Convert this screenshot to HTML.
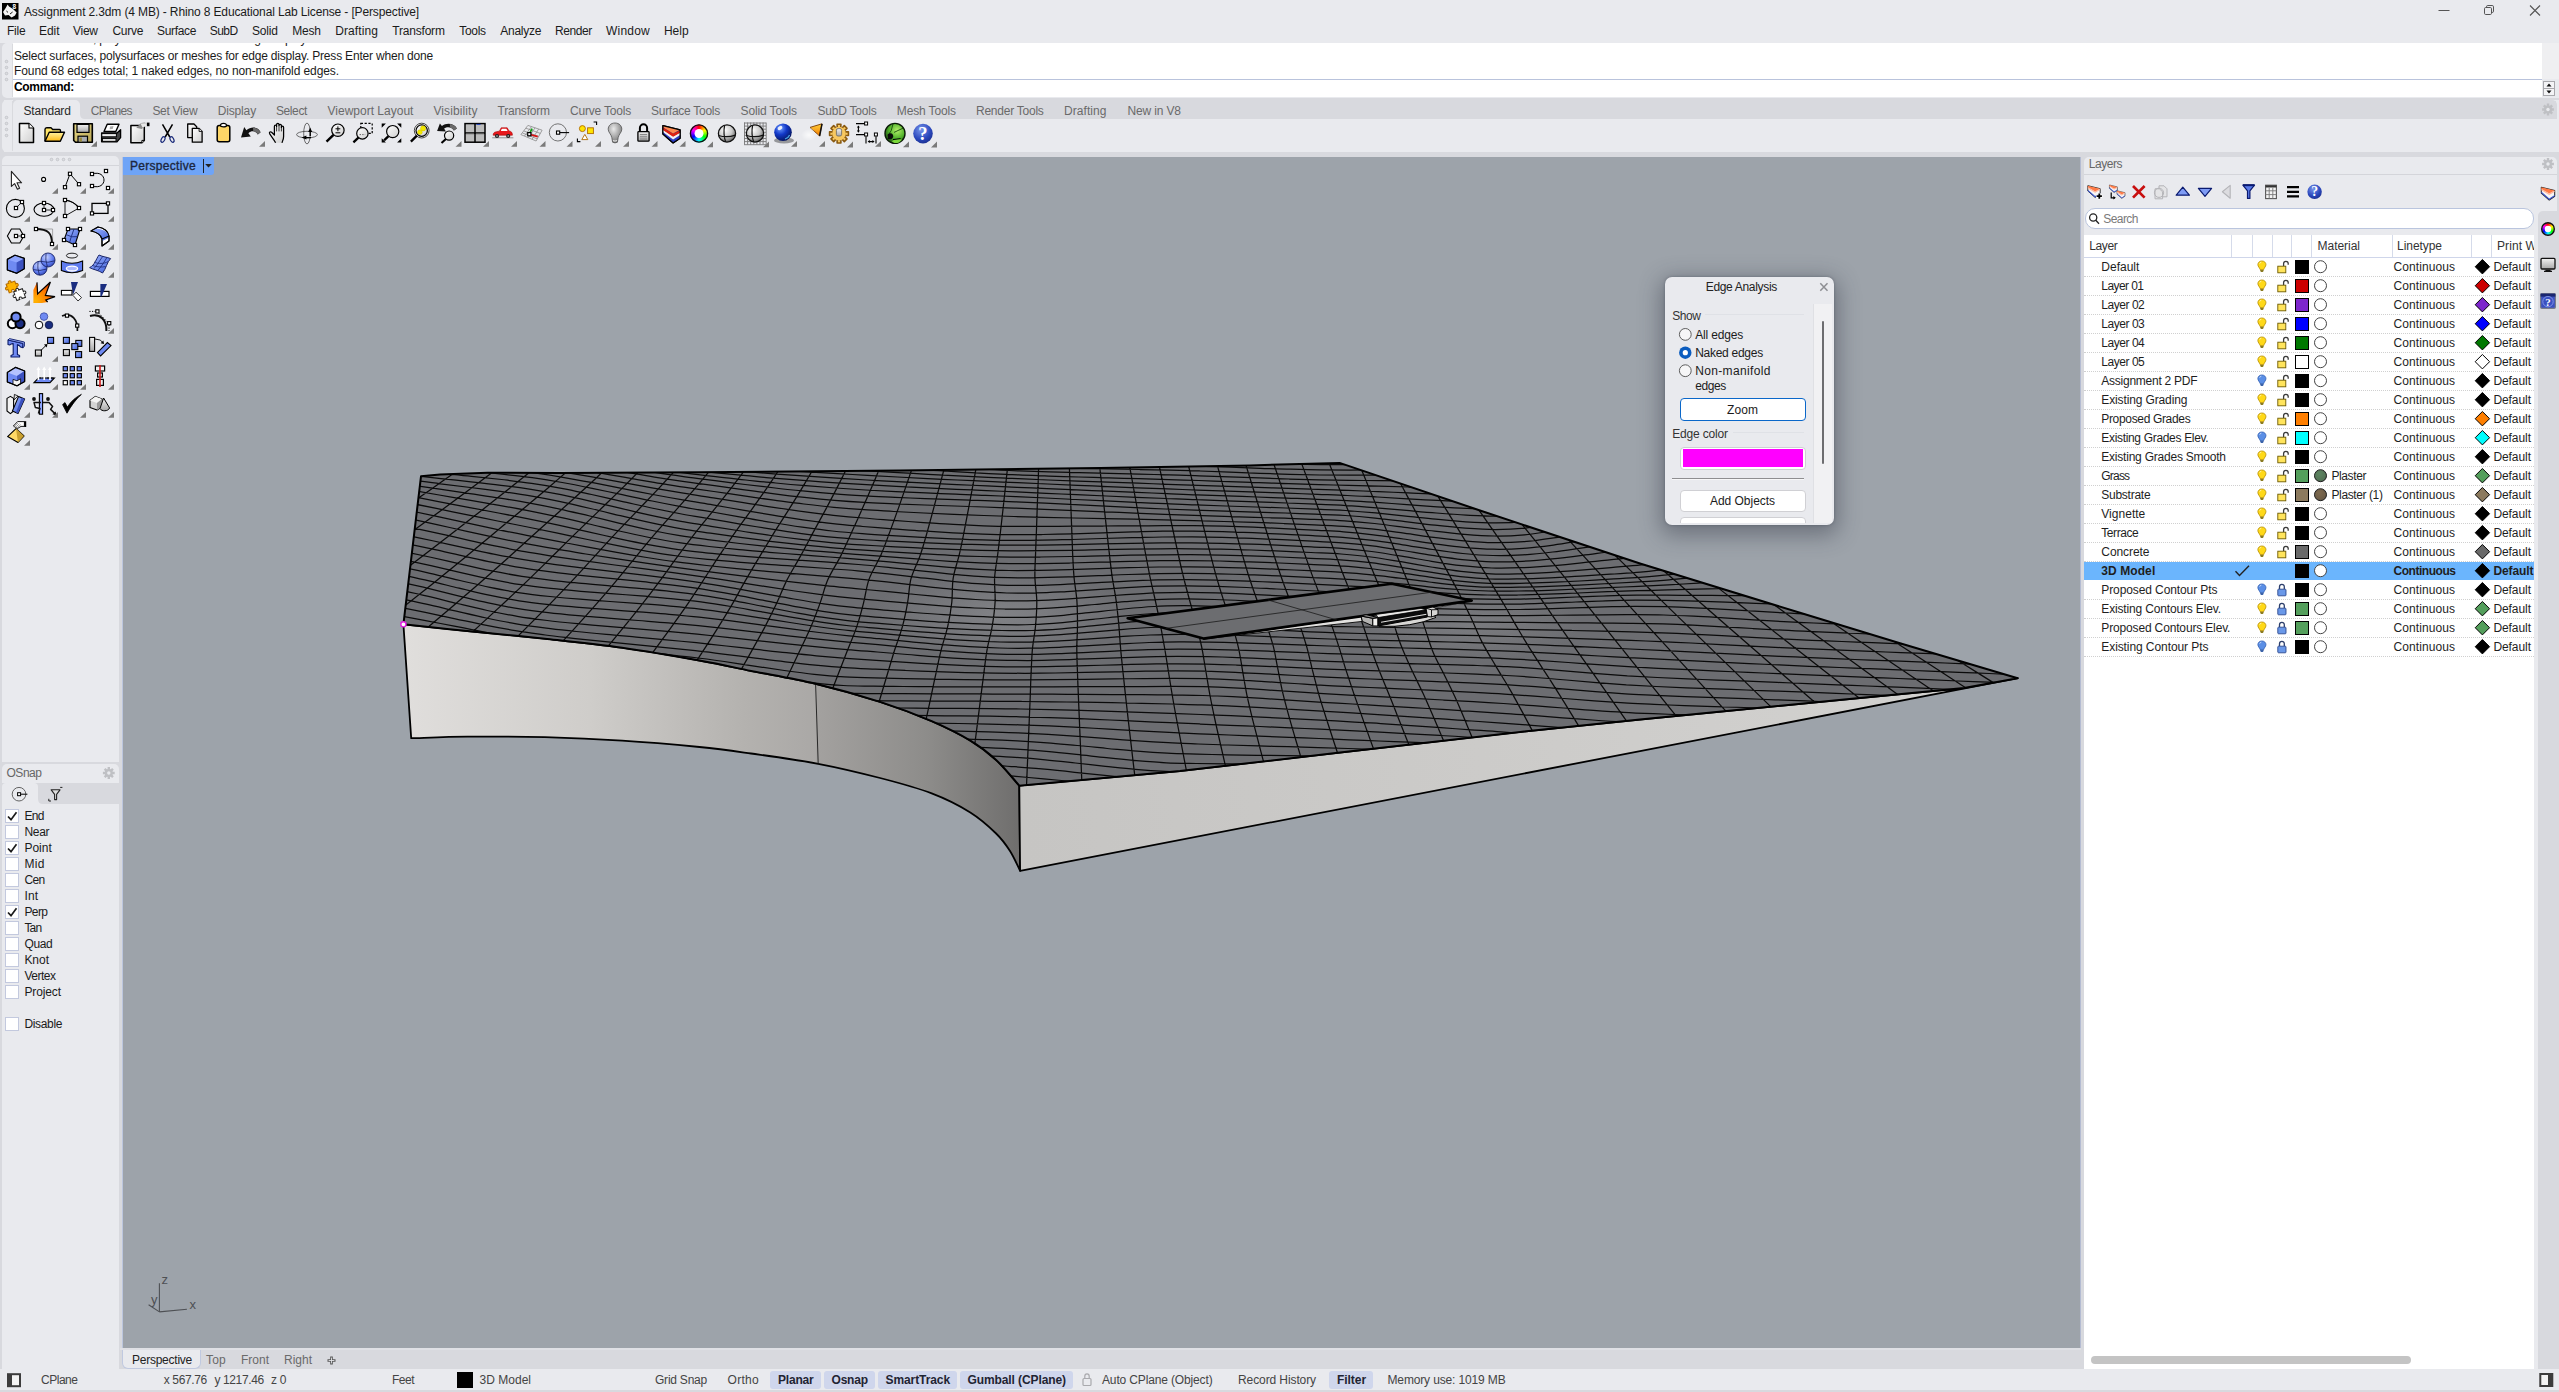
<!DOCTYPE html>
<html><head><meta charset="utf-8"><title>Rhino 8</title>
<style>
html,body{margin:0;padding:0;}
body{width:2559px;height:1392px;position:relative;overflow:hidden;background:#e9eaee;font-family:"Liberation Sans",sans-serif;}
#r{position:absolute;left:0;top:0;width:2559px;height:1392px;overflow:hidden;}
#r div{position:absolute;}
.t{position:absolute;white-space:nowrap;line-height:16px;font-family:"Liberation Sans",sans-serif;}
svg.ov{position:absolute;left:0;top:0;}
</style></head><body><div id="r">
<div style="left:0px;top:0px;width:2559px;height:1392px;background:#e9eaee;"></div>
<span class="t" style="left:24px;top:3.5px;font-size:12px;color:#1b1b1b;letter-spacing:-0.135px;">Assignment 2.3dm (4 MB) - Rhino 8 Educational Lab License - [Perspective]</span>
<span class="t" style="left:7px;top:22.5px;font-size:12px;color:#1b1b1b;letter-spacing:-0.234px;">File</span>
<span class="t" style="left:39px;top:22.5px;font-size:12px;color:#1b1b1b;letter-spacing:-0.070px;">Edit</span>
<span class="t" style="left:73px;top:22.5px;font-size:12px;color:#1b1b1b;letter-spacing:-0.273px;">View</span>
<span class="t" style="left:112.5px;top:22.5px;font-size:12px;color:#1b1b1b;letter-spacing:-0.302px;">Curve</span>
<span class="t" style="left:157px;top:22.5px;font-size:12px;color:#1b1b1b;letter-spacing:-0.337px;">Surface</span>
<span class="t" style="left:209.8px;top:22.5px;font-size:12px;color:#1b1b1b;letter-spacing:-0.554px;">SubD</span>
<span class="t" style="left:252px;top:22.5px;font-size:12px;color:#1b1b1b;letter-spacing:-0.177px;">Solid</span>
<span class="t" style="left:292.3px;top:22.5px;font-size:12px;color:#1b1b1b;letter-spacing:-0.211px;">Mesh</span>
<span class="t" style="left:335.3px;top:22.5px;font-size:12px;color:#1b1b1b;letter-spacing:0.073px;">Drafting</span>
<span class="t" style="left:392.3px;top:22.5px;font-size:12px;color:#1b1b1b;letter-spacing:-0.203px;">Transform</span>
<span class="t" style="left:459.2px;top:22.5px;font-size:12px;color:#1b1b1b;letter-spacing:-0.302px;">Tools</span>
<span class="t" style="left:500.2px;top:22.5px;font-size:12px;color:#1b1b1b;letter-spacing:-0.242px;">Analyze</span>
<span class="t" style="left:554.9px;top:22.5px;font-size:12px;color:#1b1b1b;letter-spacing:-0.376px;">Render</span>
<span class="t" style="left:606.1px;top:22.5px;font-size:12px;color:#1b1b1b;letter-spacing:0.187px;">Window</span>
<span class="t" style="left:663.9px;top:22.5px;font-size:12px;color:#1b1b1b;letter-spacing:0.005px;">Help</span>
<div style="left:0px;top:43px;width:2559px;height:57px;background:#d8d9de;"></div>
<div style="left:2px;top:43px;width:2557px;height:55px;background:#e9eaee;border-radius:5px 0 0 5px;"></div>
<div style="left:13px;top:43px;width:2529px;height:36px;background:#fff;"></div>
<div style="left:13px;top:79px;width:2529px;height:1px;background:#b9c3dc;"></div>
<div style="left:13px;top:80px;width:2529px;height:17px;background:#fff;"></div>
<div style="left:2542px;top:43px;width:17px;height:36px;background:#efeff1;"></div>
<div style="left:13px;top:43px;width:2529px;height:36px;overflow:hidden;background:none"><span class="t" style="left:1px;top:-11.6px;font-size:12px;color:#1b1b1b;letter-spacing:-0.2px">Select surfaces, polysurfaces or meshes for edge display</span></div>
<span class="t" style="left:14px;top:47.5px;font-size:12px;color:#1b1b1b;letter-spacing:-0.190px;">Select surfaces, polysurfaces or meshes for edge display. Press Enter when done</span>
<span class="t" style="left:14px;top:62.5px;font-size:12px;color:#1b1b1b;letter-spacing:-0.089px;">Found 68 edges total; 1 naked edges, no non-manifold edges.</span>
<span class="t" style="left:14px;top:79.0px;font-size:12px;color:#000;font-weight:bold;letter-spacing:-0.333px;">Command:</span>
<div style="left:0px;top:98px;width:4px;height:56px;background:#d8d9de;"></div>
<div style="left:2px;top:100px;width:2555px;height:52px;background:#e9eaee;border-radius:5px;"></div>
<div style="left:13px;top:100px;width:2544px;height:19px;background:#d8d9de;border-radius:0 5px 0 0;"></div>
<div style="left:13px;top:100px;width:67px;height:20px;background:#e9eaee;border-radius:5px 5px 0 0;"></div>
<span class="t" style="left:23.4px;top:103.1px;font-size:12px;color:#2a2a2a;letter-spacing:-0.175px;">Standard</span>
<span class="t" style="left:90.7px;top:103.1px;font-size:12px;color:#6a6a6a;letter-spacing:-0.579px;">CPlanes</span>
<span class="t" style="left:152.4px;top:103.1px;font-size:12px;color:#6a6a6a;letter-spacing:-0.280px;">Set View</span>
<span class="t" style="left:217.7px;top:103.1px;font-size:12px;color:#6a6a6a;letter-spacing:-0.149px;">Display</span>
<span class="t" style="left:275.9px;top:103.1px;font-size:12px;color:#6a6a6a;letter-spacing:-0.375px;">Select</span>
<span class="t" style="left:327.5px;top:103.1px;font-size:12px;color:#6a6a6a;letter-spacing:0.004px;">Viewport Layout</span>
<span class="t" style="left:433.4px;top:103.1px;font-size:12px;color:#6a6a6a;letter-spacing:0.098px;">Visibility</span>
<span class="t" style="left:497.5px;top:103.1px;font-size:12px;color:#6a6a6a;letter-spacing:-0.214px;">Transform</span>
<span class="t" style="left:570px;top:103.1px;font-size:12px;color:#6a6a6a;letter-spacing:-0.194px;">Curve Tools</span>
<span class="t" style="left:651px;top:103.1px;font-size:12px;color:#6a6a6a;letter-spacing:-0.268px;">Surface Tools</span>
<span class="t" style="left:740.5px;top:103.1px;font-size:12px;color:#6a6a6a;letter-spacing:-0.119px;">Solid Tools</span>
<span class="t" style="left:817.5px;top:103.1px;font-size:12px;color:#6a6a6a;letter-spacing:-0.215px;">SubD Tools</span>
<span class="t" style="left:896.8px;top:103.1px;font-size:12px;color:#6a6a6a;letter-spacing:-0.147px;">Mesh Tools</span>
<span class="t" style="left:976px;top:103.1px;font-size:12px;color:#6a6a6a;letter-spacing:-0.240px;">Render Tools</span>
<span class="t" style="left:1064px;top:103.1px;font-size:12px;color:#6a6a6a;letter-spacing:0.060px;">Drafting</span>
<span class="t" style="left:1127.4px;top:103.1px;font-size:12px;color:#6a6a6a;letter-spacing:-0.132px;">New in V8</span>
<div style="left:0px;top:152px;width:2559px;height:5px;background:#d8d9de;"></div>
<div style="left:0px;top:98px;width:2559px;height:2px;background:#d8d9de;"></div>
<div style="left:0px;top:152px;width:123px;height:1217px;background:#d8d9de;"></div>
<div style="left:2px;top:155.5px;width:117px;height:606.5px;background:#e9eaee;border-radius:5px 5px 0 0;"></div>
<div style="left:2px;top:165px;width:117px;height:1px;background:#d4d5da;"></div>
<div style="left:2px;top:764px;width:117px;height:605px;background:#e9eaee;border-radius:5px 5px 0 0;"></div>
<span class="t" style="left:6.5px;top:764.5px;font-size:12px;color:#666;letter-spacing:-0.472px;">OSnap</span>
<div style="left:2px;top:783px;width:117px;height:21px;background:#d8d9de;"></div>
<div style="left:2px;top:783px;width:36px;height:21.5px;background:#e9eaee;border-radius:4px 4px 0 0;"></div>
<span class="t" style="left:24.4px;top:807.5px;font-size:12px;color:#1b1b1b;letter-spacing:-0.651px;">End</span>
<span class="t" style="left:24.4px;top:823.5px;font-size:12px;color:#1b1b1b;letter-spacing:-0.302px;">Near</span>
<span class="t" style="left:24.4px;top:839.5px;font-size:12px;color:#1b1b1b;letter-spacing:0.010px;">Point</span>
<span class="t" style="left:24.4px;top:855.5px;font-size:12px;color:#1b1b1b;letter-spacing:0.321px;">Mid</span>
<span class="t" style="left:24.4px;top:871.5px;font-size:12px;color:#1b1b1b;letter-spacing:-0.571px;">Cen</span>
<span class="t" style="left:24.4px;top:887.5px;font-size:12px;color:#1b1b1b;letter-spacing:0.153px;">Int</span>
<span class="t" style="left:24.4px;top:903.5px;font-size:12px;color:#1b1b1b;letter-spacing:-0.587px;">Perp</span>
<span class="t" style="left:24.4px;top:919.5px;font-size:12px;color:#1b1b1b;letter-spacing:-0.782px;">Tan</span>
<span class="t" style="left:24.4px;top:935.5px;font-size:12px;color:#1b1b1b;letter-spacing:-0.339px;">Quad</span>
<span class="t" style="left:24.4px;top:951.5px;font-size:12px;color:#1b1b1b;letter-spacing:-0.021px;">Knot</span>
<span class="t" style="left:24.4px;top:967.5px;font-size:12px;color:#1b1b1b;letter-spacing:-0.503px;">Vertex</span>
<span class="t" style="left:24.4px;top:983.5px;font-size:12px;color:#1b1b1b;letter-spacing:-0.107px;">Project</span>
<span class="t" style="left:24.4px;top:1015.5px;font-size:12px;color:#1b1b1b;letter-spacing:-0.331px;">Disable</span>
<div style="left:123px;top:157px;width:1958px;height:1191px;background:#9da3aa;"></div>
<div style="left:122px;top:157px;width:1px;height:1191px;background:#bcc6de;"></div>
<div style="left:2080px;top:157px;width:1px;height:1191px;background:#b4bcd2;"></div>
<div style="left:123px;top:157px;width:91px;height:18px;background:#6ea4f7;border-radius:0 0 3px 0;"></div>
<span class="t" style="left:130px;top:157.5px;font-size:12px;color:#1c2740;letter-spacing:0.300px;-webkit-text-stroke:0.35px #1c2740;">Perspective</span>
<div style="left:120px;top:1348px;width:1964px;height:21px;background:#d8d9de;"></div>
<div style="left:120px;top:1348px;width:1964px;height:2px;background:#dfe0e5;"></div>
<div style="left:122px;top:1349.5px;width:78.5px;height:19px;background:#e9eaee;border-radius:0 0 6px 6px;border:1px solid #c0c9e0;border-top:none;box-sizing:border-box;"></div>
<span class="t" style="left:132px;top:1352.3px;font-size:12px;color:#222;letter-spacing:-0.245px;">Perspective</span>
<span class="t" style="left:206px;top:1352.3px;font-size:12px;color:#6a6a6a;letter-spacing:0.218px;">Top</span>
<span class="t" style="left:241px;top:1352.3px;font-size:12px;color:#6a6a6a;letter-spacing:-0.002px;">Front</span>
<span class="t" style="left:284px;top:1352.3px;font-size:12px;color:#6a6a6a;letter-spacing:-0.002px;">Right</span>
<span class="t" style="left:161.5px;top:1271.5px;font-size:13px;color:#4e5054;">z</span>
<span class="t" style="left:151px;top:1292.0px;font-size:13px;color:#4e5054;">y</span>
<span class="t" style="left:189.5px;top:1296.5px;font-size:13px;color:#4e5054;">x</span>
<div style="left:0px;top:1369px;width:2559px;height:21px;background:#e9eaee;"></div>
<div style="left:0px;top:1390px;width:2559px;height:2px;background:#d8d9de;"></div>
<span class="t" style="left:41px;top:1371.5px;font-size:12px;color:#444;letter-spacing:-0.476px;">CPlane</span>
<span class="t" style="left:163.7px;top:1371.5px;font-size:12px;color:#444;letter-spacing:-0.354px;">x 567.76</span>
<span class="t" style="left:214.4px;top:1371.5px;font-size:12px;color:#444;letter-spacing:-0.368px;">y 1217.46</span>
<span class="t" style="left:271px;top:1371.5px;font-size:12px;color:#444;letter-spacing:-0.336px;">z 0</span>
<span class="t" style="left:392px;top:1371.5px;font-size:12px;color:#444;letter-spacing:-0.503px;">Feet</span>
<div style="left:457px;top:1372px;width:16px;height:16px;background:#000;"></div>
<span class="t" style="left:479.5px;top:1371.5px;font-size:12px;color:#444;letter-spacing:0.018px;">3D Model</span>
<span class="t" style="left:655px;top:1371.5px;font-size:12px;color:#444;letter-spacing:-0.226px;">Grid Snap</span>
<span class="t" style="left:727.5px;top:1371.5px;font-size:12px;color:#444;letter-spacing:0.298px;">Ortho</span>
<div style="left:770px;top:1370.5px;width:50.5px;height:18px;background:#cfd6ec;border-radius:3px;"></div>
<span class="t" style="left:778px;top:1371.5px;font-size:12px;color:#1f2433;font-weight:bold;letter-spacing:-0.198px;">Planar</span>
<div style="left:823.5px;top:1370.5px;width:51.299999999999955px;height:18px;background:#cfd6ec;border-radius:3px;"></div>
<span class="t" style="left:831.5px;top:1371.5px;font-size:12px;color:#1f2433;font-weight:bold;letter-spacing:-0.208px;">Osnap</span>
<div style="left:877.5px;top:1370.5px;width:79.29999999999995px;height:18px;background:#cfd6ec;border-radius:3px;"></div>
<span class="t" style="left:885.5px;top:1371.5px;font-size:12px;color:#1f2433;font-weight:bold;letter-spacing:-0.087px;">SmartTrack</span>
<div style="left:959.5px;top:1370.5px;width:113.29999999999995px;height:18px;background:#cfd6ec;border-radius:3px;"></div>
<span class="t" style="left:967.5px;top:1371.5px;font-size:12px;color:#1f2433;font-weight:bold;letter-spacing:-0.095px;">Gumball (CPlane)</span>
<span class="t" style="left:1102px;top:1371.5px;font-size:12px;color:#444;letter-spacing:-0.144px;">Auto CPlane (Object)</span>
<span class="t" style="left:1238px;top:1371.5px;font-size:12px;color:#444;letter-spacing:-0.097px;">Record History</span>
<div style="left:1329px;top:1370.5px;width:44px;height:18px;background:#cfd6ec;border-radius:3px;"></div>
<span class="t" style="left:1337px;top:1371.5px;font-size:12px;color:#1f2433;font-weight:bold;letter-spacing:-0.057px;">Filter</span>
<span class="t" style="left:1387.5px;top:1371.5px;font-size:12px;color:#444;letter-spacing:-0.143px;">Memory use: 1019 MB</span>
<svg class="ov" width="2559" height="1392" viewBox="0 0 2559 1392">
<defs>
<linearGradient id="wg" gradientUnits="userSpaceOnUse" x1="405" y1="0" x2="1020" y2="0">
<stop offset="0" stop-color="#e0dedc"/><stop offset="0.3" stop-color="#cfcdca"/><stop offset="0.55" stop-color="#b4b2af"/><stop offset="0.668" stop-color="#aaa8a6"/><stop offset="0.67" stop-color="#a3a19f"/><stop offset="0.85" stop-color="#8d8c8a"/><stop offset="1" stop-color="#6f6e6d"/></linearGradient>
<linearGradient id="rg" gradientUnits="userSpaceOnUse" x1="1020" y1="800" x2="2017" y2="680"><stop offset="0" stop-color="#c6c5c3"/><stop offset="1" stop-color="#d3d2d0"/></linearGradient>
<radialGradient id="hl1" gradientUnits="userSpaceOnUse" cx="1000" cy="615" r="130" gradientTransform="translate(0 410) scale(1 0.333)"><stop offset="0" stop-color="#85868a" stop-opacity="0.85"/><stop offset="1" stop-color="#85868a" stop-opacity="0"/></radialGradient>
<radialGradient id="hl2" gradientUnits="userSpaceOnUse" cx="1470" cy="625" r="110" gradientTransform="translate(0 416.7) scale(1 0.333)"><stop offset="0" stop-color="#85868a" stop-opacity="0.55"/><stop offset="1" stop-color="#8a8b8e" stop-opacity="0"/></radialGradient>
<clipPath id="tc"><path d="M421 476.3 L440.0 474.6 L487.5 472.8 L560.0 473.0 L700.0 472.2 L900.0 470.6 L1100.0 468.0 L1250.0 465.4 L1339.6 462.9 L1480.0 510.5 L1640.0 563.5 L1800.0 612.8 L1900.0 643.2 L2017.7 678.2 L1964.0 688.0 L1852.0 698.8 L1640.0 719.6 L1516.0 732.4 L1340.0 752.6 L1180.0 771.0 L1019.3 785.7 C1015.4 781.4 1004.3 767.4 996.1 759.9 C987.9 752.4 981.0 747.0 970.3 740.6 C959.6 734.2 946.7 727.7 931.7 721.2 C916.7 714.8 899.5 708.1 880.1 701.9 C860.8 695.7 837.1 689.0 815.6 683.8 C794.1 678.6 770.5 674.8 751.1 670.9 C731.8 667.0 721.0 664.5 699.5 660.6 C678.0 656.7 647.9 651.4 622.1 647.7 C596.3 644.1 570.6 641.5 544.8 638.7 C519.0 635.9 491.0 633.4 467.4 631.0 C443.8 628.6 414.1 625.4 403.4 624.3 Z"/></clipPath></defs>
<path d="M403.4 624.3 C414.1 625.4 443.8 628.6 467.4 631.0 C491.0 633.4 519.0 635.9 544.8 638.7 C570.6 641.5 596.3 644.1 622.1 647.7 C647.9 651.4 678.0 656.7 699.5 660.6 C721.0 664.5 731.8 667.0 751.1 670.9 C770.5 674.8 794.1 678.6 815.6 683.8 C837.1 689.0 860.8 695.7 880.1 701.9 C899.5 708.1 916.7 714.8 931.7 721.2 C946.7 727.7 959.6 734.2 970.3 740.6 C981.0 747.0 987.9 752.4 996.1 759.9 C1004.3 767.4 1015.4 781.4 1019.3 785.7 L1020.1 870.8 C1018.4 867.5 1014.0 857.2 1010.0 851.0 C1006.0 844.8 1002.7 839.9 996.1 833.5 C989.5 827.1 981.0 819.2 970.3 812.5 C959.6 805.8 946.7 799.1 931.7 793.4 C916.7 787.6 899.0 782.9 880.1 778.0 C861.2 773.1 839.7 767.9 818.2 763.8 C796.7 759.7 770.9 756.3 751.1 753.5 C731.3 750.7 721.0 749.1 699.5 747.0 C678.0 744.9 647.9 742.2 622.1 740.6 C596.3 739.0 570.6 737.9 544.8 737.2 C519.0 736.6 489.7 736.5 467.4 736.7 C445.1 736.9 420.6 738.0 411.2 738.2 Z" fill="url(#wg)" stroke="#000" stroke-width="1.8" stroke-linejoin="round"/>
<path d="M1019.3 785.7 L1180.0 771.0 L1340.0 752.6 L1516.0 732.4 L1640.0 719.6 L1852.0 698.8 L1964.0 688.0 L2017.7 678.2 L1020.1 870.8 Z" fill="url(#rg)" stroke="#000" stroke-width="1.8" stroke-linejoin="round"/>
<line x1="815.6" y1="683.8" x2="818.2" y2="763.8" stroke="#1a1a1a" stroke-width="0.9"/>
<path d="M421 476.3 L440.0 474.6 L487.5 472.8 L560.0 473.0 L700.0 472.2 L900.0 470.6 L1100.0 468.0 L1250.0 465.4 L1339.6 462.9 L1480.0 510.5 L1640.0 563.5 L1800.0 612.8 L1900.0 643.2 L2017.7 678.2 L1964.0 688.0 L1852.0 698.8 L1640.0 719.6 L1516.0 732.4 L1340.0 752.6 L1180.0 771.0 L1019.3 785.7 C1015.4 781.4 1004.3 767.4 996.1 759.9 C987.9 752.4 981.0 747.0 970.3 740.6 C959.6 734.2 946.7 727.7 931.7 721.2 C916.7 714.8 899.5 708.1 880.1 701.9 C860.8 695.7 837.1 689.0 815.6 683.8 C794.1 678.6 770.5 674.8 751.1 670.9 C731.8 667.0 721.0 664.5 699.5 660.6 C678.0 656.7 647.9 651.4 622.1 647.7 C596.3 644.1 570.6 641.5 544.8 638.7 C519.0 635.9 491.0 633.4 467.4 631.0 C443.8 628.6 414.1 625.4 403.4 624.3 Z" fill="#6c6d71"/>
<g clip-path="url(#tc)"><rect x="400" y="440" width="1650" height="360" fill="url(#hl1)"/><rect x="400" y="440" width="1650" height="360" fill="url(#hl2)"/>
<path d="M464.2 465.9 C458.5 469.9 441.5 481.9 430.1 489.9 C418.6 497.9 407.0 505.9 395.4 513.9 C383.7 521.9 365.9 533.9 360.0 537.9 M501.8 465.3 C496.5 469.3 480.6 481.3 469.8 489.3 C459.1 497.3 448.2 505.3 437.3 513.3 C426.4 521.3 415.3 529.3 404.2 537.3 C393.1 545.3 376.2 557.3 370.6 561.3 M538.9 464.8 C533.9 468.8 519.1 480.8 509.0 488.8 C499.0 496.8 488.8 504.8 478.6 512.8 C468.4 520.8 458.1 528.8 447.7 536.8 C437.4 544.8 427.0 552.8 416.4 560.8 C405.9 568.8 395.3 576.8 384.5 584.8 C373.8 592.8 357.4 604.8 351.9 608.8 M575.5 464.2 C570.8 468.2 557.0 480.2 547.7 488.2 C538.3 496.2 528.7 504.2 519.2 512.2 C509.7 520.2 500.1 528.2 490.5 536.2 C480.9 544.2 471.3 552.2 461.6 560.2 C451.8 568.2 442.0 576.2 432.1 584.2 C422.1 592.2 412.0 600.2 401.8 608.2 C391.7 616.2 376.2 628.2 371.0 632.2 M611.5 463.7 C607.2 467.7 594.4 479.7 585.7 487.7 C577.0 495.7 568.1 503.7 559.2 511.7 C550.3 519.7 541.4 527.7 532.5 535.7 C523.6 543.7 514.9 551.7 506.0 559.7 C497.0 567.7 488.0 575.7 478.9 583.7 C469.7 591.7 460.4 599.7 451.0 607.7 C441.6 615.7 432.1 623.7 422.6 631.7 C413.0 639.7 398.4 651.7 393.6 655.7 M647.1 463.1 C643.1 467.1 631.4 479.1 623.3 487.1 C615.2 495.1 606.8 503.1 598.6 511.1 C590.3 519.1 582.0 527.1 573.8 535.1 C565.6 543.1 557.7 551.1 549.6 559.1 C541.4 567.1 533.4 575.1 525.0 583.1 C516.7 591.1 508.1 599.1 499.5 607.1 C490.9 615.1 482.2 623.1 473.4 631.1 C464.6 639.1 455.7 647.1 446.8 655.1 C437.8 663.1 424.2 675.1 419.7 679.1 M682.2 462.6 C678.6 466.6 667.8 478.6 660.4 486.6 C652.9 494.6 645.1 502.6 637.5 510.6 C629.8 518.6 622.0 526.6 614.5 534.6 C607.0 542.6 599.8 550.6 592.5 558.6 C585.1 566.6 578.0 574.6 570.4 582.6 C562.9 590.6 555.2 598.6 547.4 606.6 C539.5 614.6 531.5 622.6 523.5 630.6 C515.5 638.6 507.4 646.6 499.2 654.6 C491.0 662.6 478.6 674.6 474.5 678.6 M716.8 462.1 C713.5 466.1 703.8 478.1 697.0 486.1 C690.2 494.1 683.0 502.1 676.0 510.1 C668.9 518.1 661.6 526.1 654.7 534.1 C647.9 542.1 641.4 550.1 634.8 558.1 C628.2 566.1 621.9 574.1 615.2 582.1 C608.5 590.1 601.6 598.1 594.5 606.1 C587.5 614.1 580.2 622.1 573.0 630.1 C565.7 638.1 558.3 646.1 550.9 654.1 C543.5 662.1 532.2 674.1 528.5 678.1 M751.0 461.6 C748.0 465.6 739.3 477.6 733.1 485.6 C727.0 493.6 720.5 501.6 714.1 509.6 C707.7 517.6 701.0 525.6 694.7 533.6 C688.5 541.6 682.6 549.6 676.7 557.6 C670.8 565.6 665.3 573.6 659.3 581.6 C653.4 589.6 647.3 597.6 641.0 605.6 C634.8 613.6 628.3 621.6 621.7 629.6 C615.2 637.6 608.6 645.6 602.0 653.6 C595.3 661.6 585.2 673.6 581.8 677.6 M784.7 461.1 C782.1 465.1 774.3 477.1 768.9 485.1 C763.4 493.1 757.7 501.1 752.0 509.1 C746.2 517.1 740.2 525.1 734.6 533.1 C729.0 541.1 723.6 549.1 718.3 557.1 C713.0 565.1 708.0 573.1 702.8 581.1 C697.5 589.1 692.4 597.1 686.9 605.1 C681.4 613.1 675.6 621.1 669.9 629.1 C664.1 637.1 658.2 645.1 652.3 653.1 C646.4 661.1 637.4 673.1 634.4 677.1 M818.0 460.6 C815.7 464.6 808.9 476.6 804.1 484.6 C799.4 492.6 794.4 500.6 789.4 508.6 C784.4 516.6 779.1 524.6 774.1 532.6 C769.2 540.6 764.4 548.6 759.6 556.6 C754.8 564.6 750.0 572.6 745.4 580.6 C740.7 588.6 736.7 596.6 732.0 604.6 C727.3 612.6 722.4 620.6 717.4 628.6 C712.4 636.6 707.2 644.6 702.0 652.6 C696.8 660.6 691.6 668.6 686.3 676.6 C681.0 684.6 673.0 696.6 670.4 700.6 M850.8 460.1 C848.8 464.1 843.0 476.1 838.9 484.1 C834.9 492.1 830.6 500.1 826.4 508.1 C822.1 516.1 817.7 524.1 813.3 532.1 C809.0 540.1 804.9 548.1 800.5 556.1 C796.1 564.1 791.0 572.1 786.9 580.1 C782.9 588.1 780.0 596.1 776.3 604.1 C772.5 612.1 768.5 620.1 764.3 628.1 C760.0 636.1 755.5 644.1 751.0 652.1 C746.5 660.1 742.0 668.1 737.5 676.1 C733.0 684.1 726.1 696.1 723.8 700.1 M883.2 459.6 C881.5 463.6 876.7 475.6 873.3 483.6 C869.9 491.6 866.4 499.6 862.8 507.6 C859.3 515.6 855.7 523.6 852.0 531.6 C848.4 539.6 844.9 547.6 840.9 555.6 C836.9 563.6 831.4 571.6 827.9 579.6 C824.4 587.6 822.8 595.6 819.9 603.6 C817.0 611.6 814.0 619.6 810.6 627.6 C807.2 635.6 803.2 643.6 799.4 651.6 C795.6 659.6 791.9 667.6 788.0 675.6 C784.2 683.6 780.4 691.6 776.5 699.6 C772.7 707.6 766.8 719.6 764.8 723.6 M915.2 459.1 C913.8 463.1 909.9 475.1 907.1 483.1 C904.4 491.1 901.6 499.1 898.8 507.1 C895.9 515.1 893.1 523.1 890.1 531.1 C887.1 539.1 884.4 547.1 880.9 555.1 C877.4 563.1 872.0 571.1 869.1 579.1 C866.2 587.1 865.6 595.1 863.5 603.1 C861.5 611.1 859.4 619.1 856.6 627.1 C853.9 635.1 850.3 643.1 847.2 651.1 C844.1 659.1 841.0 667.1 837.9 675.1 C834.8 683.1 831.7 691.1 828.6 699.1 C825.4 707.1 820.7 719.1 819.1 723.1 M946.7 458.7 C945.7 462.7 942.6 474.7 940.5 482.7 C938.4 490.7 936.3 498.7 934.1 506.7 C932.0 514.7 929.8 522.7 927.6 530.7 C925.3 538.7 923.2 546.7 920.4 554.7 C917.7 562.7 913.2 570.7 911.0 578.7 C908.9 586.7 909.1 594.7 907.6 602.7 C906.2 610.7 904.6 618.7 902.4 626.7 C900.2 634.7 897.0 642.7 894.4 650.7 C891.9 658.7 889.6 666.7 887.2 674.7 C884.8 682.7 882.4 690.7 880.0 698.7 C877.5 706.7 875.1 714.7 872.6 722.7 C870.2 730.7 866.4 742.7 865.2 746.7 M977.9 458.2 C977.1 462.2 975.0 474.2 973.5 482.2 C972.0 490.2 970.5 498.2 969.0 506.2 C967.5 514.2 966.0 522.2 964.4 530.2 C962.8 538.2 961.3 546.2 959.4 554.2 C957.5 562.2 954.4 570.2 953.2 578.2 C951.9 586.2 952.7 594.2 951.8 602.2 C950.9 610.2 949.6 618.2 947.8 626.2 C946.0 634.2 943.1 642.2 941.1 650.2 C939.1 658.2 937.5 666.2 935.8 674.2 C934.0 682.2 932.4 690.2 930.7 698.2 C929.0 706.2 927.2 714.2 925.5 722.2 C923.7 730.2 921.1 742.2 920.2 746.2 M1008.6 457.7 C1008.2 461.7 1006.9 473.7 1006.0 481.7 C1005.2 489.7 1004.3 497.7 1003.4 505.7 C1002.5 513.7 1001.6 521.7 1000.7 529.7 C999.8 537.7 998.8 545.7 997.8 553.7 C996.8 561.7 995.1 569.7 994.6 577.7 C994.2 585.7 995.5 593.7 995.1 601.7 C994.7 609.7 993.6 617.7 992.3 625.7 C991.0 633.7 988.5 641.7 987.1 649.7 C985.7 657.7 984.8 665.7 983.8 673.7 C982.7 681.7 981.7 689.7 980.7 697.7 C979.7 705.7 978.7 713.7 977.7 721.7 C976.6 729.7 975.6 737.7 974.6 745.7 C973.5 753.7 971.9 765.7 971.4 769.7 M1039.0 457.3 C1038.8 461.3 1038.4 473.3 1038.2 481.3 C1037.9 489.3 1037.6 497.3 1037.3 505.3 C1037.0 513.3 1036.8 521.3 1036.5 529.3 C1036.2 537.3 1035.8 545.3 1035.6 553.3 C1035.3 561.3 1034.7 569.3 1034.9 577.3 C1035.1 585.3 1036.7 593.3 1036.8 601.3 C1036.9 609.3 1036.3 617.3 1035.6 625.3 C1034.9 633.3 1033.2 641.3 1032.4 649.3 C1031.7 657.3 1031.5 665.3 1031.1 673.3 C1030.7 681.3 1030.5 689.3 1030.2 697.3 C1029.8 705.3 1029.5 713.3 1029.2 721.3 C1028.9 729.3 1028.5 737.3 1028.2 745.3 C1027.9 753.3 1027.6 761.3 1027.2 769.3 C1026.9 777.3 1026.5 785.3 1026.2 793.3 C1025.9 801.3 1025.3 813.3 1025.2 817.3 M1068.9 456.8 C1069.1 460.8 1069.6 472.8 1069.9 480.8 C1070.2 488.8 1070.5 496.8 1070.8 504.8 C1071.1 512.8 1071.4 520.8 1071.7 528.8 C1072.0 536.8 1072.3 544.8 1072.6 552.8 C1073.0 560.8 1073.3 568.8 1074.0 576.8 C1074.7 584.8 1076.3 592.8 1076.9 600.8 C1077.4 608.8 1077.5 616.8 1077.5 624.8 C1077.5 632.8 1076.8 640.8 1076.8 648.8 C1076.8 656.8 1077.2 664.8 1077.5 672.8 C1077.7 680.8 1078.1 688.8 1078.4 696.8 C1078.7 704.8 1079.1 712.8 1079.4 720.8 C1079.7 728.8 1080.0 736.8 1080.4 744.8 C1080.7 752.8 1081.0 760.8 1081.3 768.8 C1081.7 776.8 1082.0 784.8 1082.3 792.8 C1082.7 800.8 1083.2 812.8 1083.3 816.8 M1098.5 456.4 C1099.0 460.4 1100.3 472.4 1101.2 480.4 C1102.1 488.4 1102.9 496.4 1103.8 504.4 C1104.7 512.4 1105.6 520.4 1106.5 528.4 C1107.4 536.4 1108.2 544.4 1109.2 552.4 C1110.1 560.4 1111.0 568.4 1112.1 576.4 C1113.3 584.4 1115.0 592.4 1116.1 600.4 C1117.2 608.4 1118.0 616.4 1118.8 624.4 C1119.5 632.4 1119.9 640.4 1120.6 648.4 C1121.3 656.4 1122.2 664.4 1123.0 672.4 C1123.9 680.4 1124.7 688.4 1125.6 696.4 C1126.5 704.4 1127.4 712.4 1128.3 720.4 C1129.3 728.4 1130.2 736.4 1131.1 744.4 C1132.1 752.4 1133.0 760.4 1133.9 768.4 C1134.9 776.4 1135.8 784.4 1136.8 792.4 C1137.7 800.4 1139.1 812.4 1139.6 816.4 M1127.8 456.0 C1128.5 460.0 1130.6 472.0 1132.1 480.0 C1133.5 488.0 1135.0 496.0 1136.4 504.0 C1137.9 512.0 1139.3 520.0 1140.8 528.0 C1142.3 536.0 1143.7 544.0 1145.2 552.0 C1146.7 560.0 1148.2 568.0 1149.8 576.0 C1151.5 584.0 1153.4 592.0 1155.2 600.0 C1156.9 608.0 1158.7 616.0 1160.3 624.0 C1161.8 632.0 1163.2 640.0 1164.6 648.0 C1166.0 656.0 1167.2 664.0 1168.5 672.0 C1169.8 680.0 1171.0 688.0 1172.4 696.0 C1173.7 704.0 1175.2 712.0 1176.7 720.0 C1178.2 728.0 1179.7 736.0 1181.3 744.0 C1182.8 752.0 1184.3 760.0 1185.9 768.0 C1187.4 776.0 1189.0 784.0 1190.5 792.0 C1192.1 800.0 1194.4 812.0 1195.2 816.0 M1157.0 455.5 C1157.9 459.5 1160.4 471.5 1162.1 479.5 C1163.8 487.5 1165.5 495.5 1167.3 503.5 C1169.0 511.5 1170.7 519.5 1172.4 527.5 C1174.2 535.5 1175.9 543.5 1177.6 551.5 C1179.4 559.5 1181.1 567.5 1183.1 575.5 C1185.0 583.5 1187.2 591.5 1189.4 599.5 C1191.5 607.5 1194.0 615.5 1196.1 623.5 C1198.1 631.5 1200.1 639.5 1201.8 647.5 C1203.4 655.5 1204.5 663.5 1205.9 671.5 C1207.3 679.5 1208.5 687.5 1210.0 695.5 C1211.5 703.5 1213.2 711.5 1214.9 719.5 C1216.6 727.5 1218.5 735.5 1220.3 743.5 C1222.1 751.5 1223.9 759.5 1225.8 767.5 C1227.6 775.5 1230.3 787.5 1231.2 791.5 M1185.9 455.1 C1186.9 459.1 1189.8 471.1 1191.8 479.1 C1193.7 487.1 1195.7 495.1 1197.7 503.1 C1199.6 511.1 1201.6 519.1 1203.6 527.1 C1205.6 535.1 1207.6 543.1 1209.6 551.1 C1211.7 559.1 1213.7 567.1 1215.9 575.1 C1218.2 583.1 1220.6 591.1 1223.2 599.1 C1225.8 607.1 1229.0 615.1 1231.5 623.1 C1234.0 631.1 1236.5 639.1 1238.3 647.1 C1240.2 655.1 1241.2 663.1 1242.6 671.1 C1244.0 679.1 1245.3 687.1 1246.9 695.1 C1248.6 703.1 1250.6 711.1 1252.5 719.1 C1254.5 727.1 1256.6 735.1 1258.7 743.1 C1260.7 751.1 1262.9 759.1 1265.0 767.1 C1267.1 775.1 1270.2 787.1 1271.3 791.1 M1214.4 454.7 C1215.5 458.7 1218.8 470.7 1221.0 478.7 C1223.3 486.7 1225.5 494.7 1227.7 502.7 C1229.9 510.7 1232.2 518.7 1234.4 526.7 C1236.7 534.7 1238.9 542.7 1241.2 550.7 C1243.5 558.7 1245.8 566.7 1248.3 574.7 C1250.9 582.7 1253.6 590.7 1256.5 598.7 C1259.5 606.7 1263.0 614.7 1265.8 622.7 C1268.6 630.7 1271.3 638.7 1273.4 646.7 C1275.4 654.7 1276.5 662.7 1278.2 670.7 C1279.8 678.7 1281.3 686.7 1283.2 694.7 C1285.1 702.7 1287.4 710.7 1289.6 718.7 C1291.8 726.7 1294.2 734.7 1296.6 742.7 C1298.9 750.7 1301.3 758.7 1303.7 766.7 C1306.0 774.7 1309.6 786.7 1310.8 790.7 M1242.6 454.3 C1243.8 458.3 1247.5 470.3 1250.0 478.3 C1252.4 486.3 1254.9 494.3 1257.4 502.3 C1259.9 510.3 1262.4 518.3 1264.9 526.3 C1267.4 534.3 1269.8 542.3 1272.4 550.3 C1275.0 558.3 1277.5 566.3 1280.3 574.3 C1283.0 582.3 1286.0 590.3 1289.1 598.3 C1292.1 606.3 1295.7 614.3 1298.7 622.3 C1301.6 630.3 1304.3 638.3 1306.6 646.3 C1308.9 654.3 1310.5 662.3 1312.5 670.3 C1314.6 678.3 1316.6 686.3 1318.8 694.3 C1321.1 702.3 1323.7 710.3 1326.2 718.3 C1328.8 726.3 1331.4 734.3 1334.0 742.3 C1336.6 750.3 1339.3 758.3 1341.9 766.3 C1344.6 774.3 1348.5 786.3 1349.9 790.3 M1270.4 453.9 C1271.8 457.9 1275.8 469.9 1278.5 477.9 C1281.3 485.9 1284.0 493.9 1286.7 501.9 C1289.4 509.9 1292.2 517.9 1294.9 525.9 C1297.7 533.9 1300.4 541.9 1303.2 549.9 C1306.0 557.9 1308.8 565.9 1311.7 573.9 C1314.7 581.9 1317.8 589.9 1320.9 597.9 C1324.0 605.9 1327.5 613.9 1330.4 621.9 C1333.4 629.9 1336.0 637.9 1338.6 645.9 C1341.2 653.9 1343.4 661.9 1345.9 669.9 C1348.5 677.9 1351.2 685.9 1353.9 693.9 C1356.7 701.9 1359.6 709.9 1362.4 717.9 C1365.2 725.9 1368.1 733.9 1371.0 741.9 C1373.9 749.9 1376.8 757.9 1379.7 765.9 C1382.6 773.9 1387.0 785.9 1388.4 789.9 M1297.9 453.5 C1299.4 457.5 1303.8 469.5 1306.8 477.5 C1309.7 485.5 1312.7 493.5 1315.7 501.5 C1318.7 509.5 1321.6 517.5 1324.6 525.5 C1327.6 533.5 1330.6 541.5 1333.7 549.5 C1336.7 557.5 1339.7 565.5 1342.8 573.5 C1346.0 581.5 1349.2 589.5 1352.4 597.5 C1355.5 605.5 1358.7 613.5 1361.7 621.5 C1364.6 629.5 1367.0 637.5 1369.9 645.5 C1372.7 653.5 1375.6 661.5 1378.8 669.5 C1381.9 677.5 1385.4 685.5 1388.6 693.5 C1391.9 701.5 1395.0 709.5 1398.1 717.5 C1401.3 725.5 1404.4 733.5 1407.6 741.5 C1410.7 749.5 1413.9 757.5 1417.0 765.5 C1420.2 773.5 1425.0 785.5 1426.6 789.5 M1325.1 453.1 C1326.7 457.1 1331.5 469.1 1334.7 477.1 C1337.9 485.1 1341.1 493.1 1344.3 501.1 C1347.5 509.1 1350.8 517.1 1354.0 525.1 C1357.2 533.1 1360.5 541.1 1363.7 549.1 C1367.0 557.1 1370.3 565.1 1373.6 573.1 C1376.9 581.1 1380.3 589.1 1383.5 597.1 C1386.7 605.1 1389.9 613.1 1392.8 621.1 C1395.7 629.1 1397.8 637.1 1400.9 645.1 C1404.0 653.1 1407.6 661.1 1411.3 669.1 C1415.0 677.1 1419.2 685.1 1422.9 693.1 C1426.6 701.1 1430.0 709.1 1433.5 717.1 C1436.9 725.1 1440.3 733.1 1443.7 741.1 C1447.1 749.1 1452.2 761.1 1453.9 765.1 M1357.7 460.4 C1359.3 464.4 1364.3 476.4 1367.6 484.4 C1370.9 492.4 1374.2 500.4 1377.5 508.4 C1380.8 516.4 1384.1 524.4 1387.4 532.4 C1390.7 540.4 1394.0 548.4 1397.3 556.4 C1400.6 564.4 1404.0 572.4 1407.3 580.4 C1410.5 588.4 1414.0 596.4 1416.9 604.4 C1419.9 612.4 1422.3 620.4 1425.0 628.4 C1427.7 636.4 1429.8 644.4 1433.2 652.4 C1436.5 660.4 1441.2 668.4 1445.1 676.4 C1449.0 684.4 1453.0 692.4 1456.6 700.4 C1460.2 708.4 1463.4 716.4 1466.7 724.4 C1470.0 732.4 1475.0 744.4 1476.6 748.4 M1395.3 473.6 C1397.4 477.6 1403.8 489.6 1408.1 497.6 C1412.3 505.6 1416.6 513.6 1420.9 521.6 C1425.1 529.6 1429.4 537.6 1433.6 545.6 C1437.9 553.6 1442.2 561.6 1446.4 569.6 C1450.7 577.6 1455.1 585.6 1459.1 593.6 C1463.2 601.6 1467.1 609.6 1470.9 617.6 C1474.7 625.6 1477.7 633.6 1481.8 641.6 C1485.9 649.6 1490.8 657.6 1495.5 665.6 C1500.2 673.6 1505.4 681.6 1510.0 689.6 C1514.6 697.6 1518.8 705.6 1523.2 713.6 C1527.5 721.6 1531.7 729.6 1536.0 737.6 C1540.2 745.6 1546.6 757.6 1548.8 761.6 M1431.8 486.2 C1434.2 490.2 1441.6 502.2 1446.5 510.2 C1451.4 518.2 1456.3 526.2 1461.2 534.2 C1466.1 542.2 1471.0 550.2 1475.9 558.2 C1480.8 566.2 1485.7 574.2 1490.6 582.2 C1495.4 590.2 1500.3 598.2 1505.0 606.2 C1509.7 614.2 1514.0 622.2 1518.8 630.2 C1523.5 638.2 1528.4 646.2 1533.4 654.2 C1538.4 662.2 1543.9 670.2 1549.0 678.2 C1554.1 686.2 1559.1 694.2 1564.1 702.2 C1569.0 710.2 1573.9 718.2 1578.8 726.2 C1583.7 734.2 1591.0 746.2 1593.5 750.2 M1471.9 500.1 C1474.7 504.1 1483.1 516.1 1488.7 524.1 C1494.3 532.1 1499.9 540.1 1505.5 548.1 C1511.1 556.1 1516.7 564.1 1522.3 572.1 C1527.9 580.1 1533.5 588.1 1539.1 596.1 C1544.6 604.1 1550.1 612.1 1555.6 620.1 C1561.2 628.1 1566.7 636.1 1572.3 644.1 C1578.0 652.1 1583.7 660.1 1589.4 668.1 C1595.0 676.1 1600.7 684.1 1606.3 692.1 C1611.9 700.1 1617.5 708.1 1623.1 716.1 C1628.7 724.1 1634.3 732.1 1639.9 740.1 C1645.5 748.1 1653.9 760.1 1656.7 764.1 M1514.0 514.4 C1517.2 518.4 1526.8 530.4 1533.3 538.4 C1539.7 546.4 1546.1 554.4 1552.6 562.4 C1559.0 570.4 1565.5 578.4 1571.9 586.4 C1578.3 594.4 1584.7 602.4 1591.2 610.4 C1597.6 618.4 1604.0 626.4 1610.5 634.4 C1616.9 642.4 1623.4 650.4 1629.8 658.4 C1636.2 666.4 1642.7 674.4 1649.1 682.4 C1655.6 690.4 1662.0 698.4 1668.4 706.4 C1674.9 714.4 1681.3 722.4 1687.8 730.4 C1694.2 738.4 1703.8 750.4 1707.1 754.4 M1559.5 529.9 C1563.2 533.9 1574.2 545.9 1581.6 553.9 C1588.9 561.9 1596.2 569.9 1603.6 577.9 C1610.9 585.9 1618.3 593.9 1625.6 601.9 C1633.0 609.9 1640.3 617.9 1647.6 625.9 C1655.0 633.9 1662.3 641.9 1669.7 649.9 C1677.0 657.9 1684.4 665.9 1691.7 673.9 C1699.1 681.9 1706.4 689.9 1713.7 697.9 C1721.1 705.9 1728.4 713.9 1735.8 721.9 C1743.1 729.9 1754.1 741.9 1757.8 745.9 M1604.4 545.1 C1608.5 549.1 1620.9 561.1 1629.1 569.1 C1637.4 577.1 1645.6 585.1 1653.8 593.1 C1662.1 601.1 1670.3 609.1 1678.5 617.1 C1686.8 625.1 1695.0 633.1 1703.3 641.1 C1711.5 649.1 1719.7 657.1 1728.0 665.1 C1736.2 673.1 1744.4 681.1 1752.7 689.1 C1760.9 697.1 1769.2 705.1 1777.4 713.1 C1785.6 721.1 1798.0 733.1 1802.1 737.1 M1652.2 560.8 C1656.8 564.8 1670.6 576.8 1679.8 584.8 C1689.0 592.8 1698.2 600.8 1707.3 608.8 C1716.5 616.8 1725.7 624.8 1734.9 632.8 C1744.1 640.8 1753.3 648.8 1762.5 656.8 C1771.7 664.8 1780.9 672.8 1790.0 680.8 C1799.2 688.8 1808.4 696.8 1817.6 704.8 C1826.8 712.8 1840.6 724.8 1845.2 728.8 M1704.6 577.3 C1709.7 581.3 1725.1 593.3 1735.3 601.3 C1745.5 609.3 1755.8 617.3 1766.0 625.3 C1776.2 633.3 1786.5 641.3 1796.7 649.3 C1806.9 657.3 1817.2 665.3 1827.4 673.3 C1837.6 681.3 1847.9 689.3 1858.1 697.3 C1868.3 705.3 1878.6 713.3 1888.8 721.3 C1899.0 729.3 1914.4 741.3 1919.5 745.3 M1760.5 594.9 C1766.0 598.9 1782.6 610.9 1793.6 618.9 C1804.6 626.9 1815.7 634.9 1826.7 642.9 C1837.7 650.9 1848.8 658.9 1859.8 666.9 C1870.8 674.9 1881.8 682.9 1892.9 690.9 C1903.9 698.9 1914.9 706.9 1926.0 714.9 C1937.0 722.9 1953.5 734.9 1959.1 738.9 M1817.2 612.5 C1823.1 616.5 1840.9 628.5 1852.7 636.5 C1864.6 644.5 1876.4 652.5 1888.2 660.5 C1900.1 668.5 1911.9 676.5 1923.8 684.5 C1935.6 692.5 1947.4 700.5 1959.3 708.5 C1971.1 716.5 1988.9 728.5 1994.8 732.5 M1879.0 631.5 C1885.2 635.5 1903.6 647.5 1916.0 655.5 C1928.3 663.5 1940.6 671.5 1952.9 679.5 C1965.2 687.5 1977.6 695.5 1989.9 703.5 C2002.2 711.5 2020.7 723.5 2026.8 727.5 M1941.7 650.4 C1948.1 654.4 1967.3 666.4 1980.1 674.4 C1992.9 682.4 2005.7 690.4 2018.5 698.4 C2031.3 706.4 2050.5 718.4 2056.9 722.4 M1261.0 463.2 C1266.0 463.3 1281.0 463.8 1291.0 464.0 C1301.0 464.3 1311.0 464.5 1321.0 464.6 C1331.0 464.7 1341.0 464.7 1351.0 464.7 C1361.0 464.7 1376.0 464.5 1381.0 464.4 M1170.4 465.4 C1175.4 465.5 1190.4 465.9 1200.4 466.2 C1210.4 466.4 1220.4 466.8 1230.4 467.2 C1240.4 467.5 1250.4 467.9 1260.4 468.3 C1270.4 468.6 1280.4 469.0 1290.4 469.2 C1300.4 469.5 1310.4 469.8 1320.4 469.9 C1330.4 470.0 1340.4 470.0 1350.4 470.0 C1360.4 470.0 1370.4 469.9 1380.4 469.9 C1390.4 469.8 1405.4 469.6 1410.4 469.6 M1019.8 466.8 C1024.8 467.0 1039.8 467.5 1049.8 467.7 C1059.8 468.0 1069.8 468.2 1079.8 468.4 C1089.8 468.6 1099.8 468.8 1109.8 469.0 C1119.8 469.1 1129.8 469.3 1139.8 469.5 C1149.8 469.7 1159.8 469.9 1169.8 470.2 C1179.8 470.4 1189.8 470.7 1199.8 471.0 C1209.8 471.3 1219.8 471.7 1229.8 472.1 C1239.8 472.5 1249.8 472.9 1259.8 473.3 C1269.8 473.6 1279.8 474.0 1289.8 474.3 C1299.8 474.6 1309.8 474.8 1319.8 475.0 C1329.8 475.1 1339.8 475.1 1349.8 475.1 C1359.8 475.1 1369.8 475.1 1379.8 475.1 C1389.8 475.1 1404.8 475.0 1409.8 475.0 M929.2 465.8 C934.2 466.1 949.2 467.2 959.2 467.8 C969.2 468.4 979.2 469.0 989.2 469.5 C999.2 470.1 1009.2 470.5 1019.2 470.9 C1029.2 471.3 1039.2 471.6 1049.2 471.9 C1059.2 472.2 1069.2 472.5 1079.2 472.7 C1089.2 473.0 1099.2 473.2 1109.2 473.4 C1119.2 473.7 1129.2 473.9 1139.2 474.1 C1149.2 474.4 1159.2 474.6 1169.2 474.9 C1179.2 475.2 1189.2 475.4 1199.2 475.8 C1209.2 476.1 1219.2 476.5 1229.2 476.8 C1239.2 477.2 1249.2 477.6 1259.2 477.9 C1269.2 478.3 1279.2 478.7 1289.2 479.0 C1299.2 479.3 1309.2 479.6 1319.2 479.8 C1329.2 480.0 1339.2 480.1 1349.2 480.3 C1359.2 480.4 1369.2 480.6 1379.2 480.7 C1389.2 480.8 1399.2 480.9 1409.2 481.0 C1419.2 481.1 1434.2 481.3 1439.2 481.3 M898.7 468.2 C903.7 468.5 918.7 469.5 928.7 470.1 C938.7 470.7 948.7 471.3 958.7 471.9 C968.7 472.5 978.7 473.1 988.7 473.6 C998.7 474.1 1008.7 474.5 1018.7 474.9 C1028.7 475.4 1038.7 475.7 1048.7 476.1 C1058.7 476.4 1068.7 476.7 1078.7 477.0 C1088.7 477.3 1098.7 477.6 1108.7 477.9 C1118.7 478.2 1128.7 478.4 1138.7 478.7 C1148.7 479.0 1158.7 479.3 1168.7 479.6 C1178.7 479.9 1188.7 480.2 1198.7 480.5 C1208.7 480.9 1218.7 481.2 1228.7 481.6 C1238.7 481.9 1248.7 482.3 1258.7 482.6 C1268.7 483.0 1278.7 483.3 1288.7 483.7 C1298.7 484.0 1308.7 484.3 1318.7 484.6 C1328.7 484.9 1338.7 485.1 1348.7 485.4 C1358.7 485.7 1368.7 486.0 1378.7 486.2 C1388.7 486.5 1398.7 486.8 1408.7 487.0 C1418.7 487.3 1428.7 487.6 1438.7 487.8 C1448.7 488.0 1463.7 488.2 1468.7 488.3 M838.1 469.1 C843.1 469.4 858.1 470.3 868.1 470.8 C878.1 471.4 888.1 472.0 898.1 472.6 C908.1 473.2 918.1 473.7 928.1 474.3 C938.1 474.8 948.1 475.4 958.1 475.9 C968.1 476.4 978.1 476.9 988.1 477.4 C998.1 477.9 1008.1 478.3 1018.1 478.7 C1028.1 479.2 1038.1 479.6 1048.1 480.0 C1058.1 480.4 1068.1 480.8 1078.1 481.1 C1088.1 481.5 1098.1 481.8 1108.1 482.2 C1118.1 482.5 1128.1 482.9 1138.1 483.2 C1148.1 483.6 1158.1 483.9 1168.1 484.3 C1178.1 484.6 1188.1 485.0 1198.1 485.3 C1208.1 485.7 1218.1 486.0 1228.1 486.4 C1238.1 486.7 1248.1 487.0 1258.1 487.4 C1268.1 487.7 1278.1 488.1 1288.1 488.4 C1298.1 488.7 1308.1 489.1 1318.1 489.4 C1328.1 489.7 1338.1 490.1 1348.1 490.4 C1358.1 490.8 1368.1 491.2 1378.1 491.6 C1388.1 492.0 1398.1 492.5 1408.1 492.9 C1418.1 493.3 1428.1 493.8 1438.1 494.1 C1448.1 494.5 1463.1 494.8 1468.1 495.0 M747.5 467.7 C752.5 468.0 767.5 469.2 777.5 469.9 C787.5 470.6 797.5 471.2 807.5 471.8 C817.5 472.4 827.5 473.0 837.5 473.6 C847.5 474.2 857.5 474.8 867.5 475.4 C877.5 476.0 887.5 476.5 897.5 477.0 C907.5 477.6 917.5 478.1 927.5 478.6 C937.5 479.1 947.5 479.5 957.5 480.0 C967.5 480.5 977.5 480.9 987.5 481.4 C997.5 481.8 1007.5 482.3 1017.5 482.7 C1027.5 483.2 1037.5 483.6 1047.5 484.0 C1057.5 484.5 1067.5 484.9 1077.5 485.3 C1087.5 485.7 1097.5 486.2 1107.5 486.6 C1117.5 487.0 1127.5 487.4 1137.5 487.8 C1147.5 488.2 1157.5 488.6 1167.5 488.9 C1177.5 489.3 1187.5 489.7 1197.5 490.1 C1207.5 490.4 1217.5 490.8 1227.5 491.1 C1237.5 491.5 1247.5 491.8 1257.5 492.2 C1267.5 492.5 1277.5 492.9 1287.5 493.2 C1297.5 493.6 1307.5 493.9 1317.5 494.3 C1327.5 494.7 1337.5 495.0 1347.5 495.5 C1357.5 495.9 1367.5 496.5 1377.5 497.0 C1387.5 497.6 1397.5 498.2 1407.5 498.8 C1417.5 499.4 1427.5 500.0 1437.5 500.4 C1447.5 500.9 1457.5 501.4 1467.5 501.7 C1477.5 502.0 1492.5 502.2 1497.5 502.3 M716.9 468.9 C721.9 469.4 736.9 470.8 746.9 471.7 C756.9 472.5 766.9 473.3 776.9 474.1 C786.9 474.8 796.9 475.5 806.9 476.2 C816.9 476.9 826.9 477.5 836.9 478.2 C846.9 478.8 856.9 479.4 866.9 480.0 C876.9 480.6 886.9 481.1 896.9 481.7 C906.9 482.2 916.9 482.7 926.9 483.2 C936.9 483.6 946.9 484.1 956.9 484.6 C966.9 485.0 976.9 485.5 986.9 485.9 C996.9 486.4 1006.9 486.8 1016.9 487.3 C1026.9 487.7 1036.9 488.2 1046.9 488.6 C1056.9 489.1 1066.9 489.5 1076.9 489.9 C1086.9 490.3 1096.9 490.8 1106.9 491.2 C1116.9 491.6 1126.9 492.0 1136.9 492.4 C1146.9 492.8 1156.9 493.2 1166.9 493.6 C1176.9 494.0 1186.9 494.5 1196.9 494.8 C1206.9 495.2 1216.9 495.6 1226.9 495.9 C1236.9 496.3 1246.9 496.6 1256.9 497.0 C1266.9 497.4 1276.9 497.7 1286.9 498.1 C1296.9 498.5 1306.9 498.8 1316.9 499.3 C1326.9 499.7 1336.9 500.1 1346.9 500.6 C1356.9 501.1 1366.9 501.8 1376.9 502.4 C1386.9 503.1 1396.9 503.9 1406.9 504.6 C1416.9 505.4 1426.9 506.1 1436.9 506.8 C1446.9 507.4 1456.9 508.0 1466.9 508.4 C1476.9 508.8 1486.9 509.4 1496.9 509.2 C1506.9 508.9 1521.9 507.4 1526.9 507.1 M656.3 465.0 C661.3 465.8 676.3 468.2 686.3 469.5 C696.3 470.8 706.3 471.8 716.3 472.8 C726.3 473.8 736.3 474.8 746.3 475.7 C756.3 476.7 766.3 477.5 776.3 478.4 C786.3 479.2 796.3 480.0 806.3 480.7 C816.3 481.5 826.3 482.2 836.3 482.8 C846.3 483.5 856.3 484.1 866.3 484.7 C876.3 485.3 886.3 485.9 896.3 486.4 C906.3 486.9 916.3 487.4 926.3 487.9 C936.3 488.4 946.3 488.8 956.3 489.3 C966.3 489.7 976.3 490.2 986.3 490.6 C996.3 491.0 1006.3 491.5 1016.3 491.9 C1026.3 492.4 1036.3 492.9 1046.3 493.3 C1056.3 493.8 1066.3 494.2 1076.3 494.7 C1086.3 495.1 1096.3 495.5 1106.3 496.0 C1116.3 496.4 1126.3 496.8 1136.3 497.3 C1146.3 497.7 1156.3 498.1 1166.3 498.5 C1176.3 498.9 1186.3 499.4 1196.3 499.7 C1206.3 500.1 1216.3 500.5 1226.3 500.8 C1236.3 501.2 1246.3 501.5 1256.3 501.9 C1266.3 502.3 1276.3 502.6 1286.3 503.0 C1296.3 503.4 1306.3 503.8 1316.3 504.2 C1326.3 504.6 1336.3 505.0 1346.3 505.6 C1356.3 506.2 1366.3 507.0 1376.3 507.8 C1386.3 508.6 1396.3 509.5 1406.3 510.4 C1416.3 511.3 1426.3 512.3 1436.3 513.0 C1446.3 513.8 1456.3 514.6 1466.3 515.1 C1476.3 515.6 1486.3 516.2 1496.3 516.1 C1506.3 515.9 1516.3 515.4 1526.3 514.2 C1536.3 512.9 1551.3 509.5 1556.3 508.5 M625.7 463.3 C630.7 464.2 645.7 467.1 655.7 468.7 C665.7 470.3 675.7 471.8 685.7 473.2 C695.7 474.5 705.7 475.6 715.7 476.7 C725.7 477.9 735.7 478.9 745.7 480.0 C755.7 481.0 765.7 482.1 775.7 483.0 C785.7 484.0 795.7 484.9 805.7 485.7 C815.7 486.5 825.7 487.3 835.7 488.0 C845.7 488.7 855.7 489.4 865.7 490.0 C875.7 490.6 885.7 491.1 895.7 491.6 C905.7 492.1 915.7 492.5 925.7 492.9 C935.7 493.4 945.7 493.7 955.7 494.2 C965.7 494.6 975.7 494.9 985.7 495.4 C995.7 495.8 1005.7 496.2 1015.7 496.6 C1025.7 497.1 1035.7 497.6 1045.7 498.0 C1055.7 498.5 1065.7 499.0 1075.7 499.5 C1085.7 500.0 1095.7 500.5 1105.7 500.9 C1115.7 501.4 1125.7 501.9 1135.7 502.4 C1145.7 502.8 1155.7 503.3 1165.7 503.7 C1175.7 504.1 1185.7 504.6 1195.7 504.9 C1205.7 505.3 1215.7 505.7 1225.7 506.0 C1235.7 506.3 1245.7 506.6 1255.7 507.0 C1265.7 507.3 1275.7 507.6 1285.7 508.0 C1295.7 508.3 1305.7 508.7 1315.7 509.1 C1325.7 509.5 1335.7 509.9 1345.7 510.5 C1355.7 511.2 1365.7 512.0 1375.7 512.9 C1385.7 513.9 1395.7 515.0 1405.7 516.1 C1415.7 517.1 1425.7 518.3 1435.7 519.2 C1445.7 520.2 1455.7 521.1 1465.7 521.8 C1475.7 522.4 1485.7 523.0 1495.7 522.9 C1505.7 522.9 1515.7 522.4 1525.7 521.3 C1535.7 520.1 1550.7 516.9 1555.7 516.1 M625.1 467.3 C630.1 468.1 645.1 470.8 655.1 472.4 C665.1 474.0 675.1 475.4 685.1 476.8 C695.1 478.2 705.1 479.4 715.1 480.7 C725.1 482.0 735.1 483.2 745.1 484.5 C755.1 485.7 765.1 486.9 775.1 488.0 C785.1 489.2 795.1 490.2 805.1 491.2 C815.1 492.2 825.1 493.1 835.1 493.9 C845.1 494.7 855.1 495.3 865.1 495.9 C875.1 496.5 885.1 496.9 895.1 497.4 C905.1 497.8 915.1 498.2 925.1 498.6 C935.1 498.9 945.1 499.3 955.1 499.6 C965.1 500.0 975.1 500.3 985.1 500.7 C995.1 501.0 1005.1 501.4 1015.1 501.8 C1025.1 502.2 1035.1 502.7 1045.1 503.2 C1055.1 503.6 1065.1 504.1 1075.1 504.6 C1085.1 505.1 1095.1 505.6 1105.1 506.1 C1115.1 506.6 1125.1 507.1 1135.1 507.6 C1145.1 508.1 1155.1 508.5 1165.1 509.0 C1175.1 509.4 1185.1 509.8 1195.1 510.2 C1205.1 510.5 1215.1 510.9 1225.1 511.2 C1235.1 511.5 1245.1 511.8 1255.1 512.1 C1265.1 512.4 1275.1 512.7 1285.1 513.0 C1295.1 513.4 1305.1 513.7 1315.1 514.1 C1325.1 514.5 1335.1 514.9 1345.1 515.5 C1355.1 516.2 1365.1 517.1 1375.1 518.1 C1385.1 519.1 1395.1 520.4 1405.1 521.6 C1415.1 522.8 1425.1 524.1 1435.1 525.2 C1445.1 526.3 1455.1 527.4 1465.1 528.1 C1475.1 528.8 1485.1 529.5 1495.1 529.5 C1505.1 529.5 1515.1 529.1 1525.1 528.1 C1535.1 527.0 1545.1 525.2 1555.1 523.3 C1565.1 521.5 1580.1 517.9 1585.1 516.8 M594.5 466.8 C599.5 467.7 614.5 470.3 624.5 472.0 C634.5 473.7 644.5 475.5 654.5 477.1 C664.5 478.7 674.5 480.2 684.5 481.6 C694.5 483.1 704.5 484.4 714.5 485.7 C724.5 487.1 734.5 488.5 744.5 489.9 C754.5 491.2 764.5 492.6 774.5 493.8 C784.5 495.1 794.5 496.3 804.5 497.4 C814.5 498.5 824.5 499.5 834.5 500.3 C844.5 501.1 854.5 501.8 864.5 502.4 C874.5 503.0 884.5 503.4 894.5 503.9 C904.5 504.3 914.5 504.7 924.5 505.0 C934.5 505.4 944.5 505.7 954.5 506.0 C964.5 506.4 974.5 506.7 984.5 507.0 C994.5 507.4 1004.5 507.7 1014.5 508.1 C1024.5 508.5 1034.5 508.9 1044.5 509.3 C1054.5 509.7 1064.5 510.1 1074.5 510.6 C1084.5 511.0 1094.5 511.4 1104.5 511.8 C1114.5 512.2 1124.5 512.7 1134.5 513.1 C1144.5 513.5 1154.5 513.9 1164.5 514.3 C1174.5 514.7 1184.5 515.1 1194.5 515.4 C1204.5 515.7 1214.5 516.1 1224.5 516.4 C1234.5 516.7 1244.5 517.0 1254.5 517.3 C1264.5 517.6 1274.5 517.9 1284.5 518.2 C1294.5 518.6 1304.5 518.9 1314.5 519.4 C1324.5 519.8 1334.5 520.1 1344.5 520.8 C1354.5 521.5 1364.5 522.4 1374.5 523.5 C1384.5 524.6 1394.5 526.0 1404.5 527.3 C1414.5 528.5 1424.5 530.0 1434.5 531.2 C1444.5 532.4 1454.5 533.6 1464.5 534.4 C1474.5 535.2 1484.5 535.9 1494.5 536.0 C1504.5 536.1 1514.5 535.7 1524.5 534.8 C1534.5 533.9 1544.5 532.2 1554.5 530.5 C1564.5 528.8 1579.5 525.6 1584.5 524.6 M563.9 467.0 C568.9 467.8 583.9 470.2 593.9 471.9 C603.9 473.6 613.9 475.5 623.9 477.2 C633.9 478.9 643.9 480.7 653.9 482.4 C663.9 484.1 673.9 485.6 683.9 487.2 C693.9 488.7 703.9 490.0 713.9 491.5 C723.9 492.9 733.9 494.5 743.9 495.9 C753.9 497.3 763.9 498.8 773.9 500.2 C783.9 501.5 793.9 502.9 803.9 504.0 C813.9 505.2 823.9 506.4 833.9 507.3 C843.9 508.2 853.9 509.0 863.9 509.7 C873.9 510.4 883.9 510.9 893.9 511.5 C903.9 512.1 913.9 512.6 923.9 513.0 C933.9 513.5 943.9 514.0 953.9 514.4 C963.9 514.8 973.9 515.2 983.9 515.5 C993.9 515.9 1003.9 516.2 1013.9 516.5 C1023.9 516.8 1033.9 517.1 1043.9 517.3 C1053.9 517.6 1063.9 517.8 1073.9 518.0 C1083.9 518.2 1093.9 518.4 1103.9 518.6 C1113.9 518.8 1123.9 519.0 1133.9 519.2 C1143.9 519.4 1153.9 519.6 1163.9 519.9 C1173.9 520.1 1183.9 520.4 1193.9 520.7 C1203.9 520.9 1213.9 521.2 1223.9 521.5 C1233.9 521.8 1243.9 522.1 1253.9 522.4 C1263.9 522.8 1273.9 523.1 1283.9 523.5 C1293.9 523.9 1303.9 524.3 1313.9 524.8 C1323.9 525.2 1333.9 525.6 1343.9 526.3 C1353.9 527.0 1363.9 528.0 1373.9 529.1 C1383.9 530.3 1393.9 531.8 1403.9 533.2 C1413.9 534.5 1423.9 536.1 1433.9 537.4 C1443.9 538.7 1453.9 540.1 1463.9 540.9 C1473.9 541.8 1483.9 542.6 1493.9 542.7 C1503.9 542.8 1513.9 542.5 1523.9 541.7 C1533.9 540.9 1543.9 539.4 1553.9 537.9 C1563.9 536.3 1573.9 534.3 1583.9 532.5 C1593.9 530.7 1608.9 527.7 1613.9 526.8 M533.4 467.7 C538.4 468.5 553.4 470.5 563.4 472.1 C573.4 473.7 583.4 475.4 593.4 477.2 C603.4 479.0 613.4 480.9 623.4 482.7 C633.4 484.5 643.4 486.4 653.4 488.2 C663.4 489.9 673.4 491.6 683.4 493.2 C693.4 494.9 703.4 496.3 713.4 497.9 C723.4 499.5 733.4 501.1 743.4 502.7 C753.4 504.3 763.4 505.9 773.4 507.3 C783.4 508.8 793.4 510.3 803.4 511.6 C813.4 512.9 823.4 514.2 833.4 515.3 C843.4 516.3 853.4 517.2 863.4 518.0 C873.4 518.9 883.4 519.6 893.4 520.4 C903.4 521.1 913.4 521.9 923.4 522.6 C933.4 523.2 943.4 523.9 953.4 524.4 C963.4 525.0 973.4 525.5 983.4 525.8 C993.4 526.1 1003.4 526.3 1013.4 526.4 C1023.4 526.5 1033.4 526.4 1043.4 526.4 C1053.4 526.3 1063.4 526.3 1073.4 526.2 C1083.4 526.2 1093.4 526.1 1103.4 526.0 C1113.4 525.9 1123.4 525.9 1133.4 525.8 C1143.4 525.8 1153.4 525.7 1163.4 525.7 C1173.4 525.7 1183.4 525.6 1193.4 525.7 C1203.4 525.8 1213.4 526.0 1223.4 526.2 C1233.4 526.5 1243.4 526.9 1253.4 527.2 C1263.4 527.6 1273.4 528.1 1283.4 528.6 C1293.4 529.1 1303.4 529.6 1313.4 530.1 C1323.4 530.7 1333.4 531.0 1343.4 531.8 C1353.4 532.6 1363.4 533.6 1373.4 534.8 C1383.4 536.0 1393.4 537.6 1403.4 539.0 C1413.4 540.5 1423.4 542.2 1433.4 543.6 C1443.4 544.9 1453.4 546.4 1463.4 547.3 C1473.4 548.3 1483.4 549.1 1493.4 549.2 C1503.4 549.4 1513.4 549.1 1523.4 548.4 C1533.4 547.7 1543.4 546.4 1553.4 545.1 C1563.4 543.7 1573.4 541.9 1583.4 540.3 C1593.4 538.6 1608.4 536.0 1613.4 535.1 M502.8 469.2 C507.8 469.8 522.8 471.4 532.8 472.7 C542.8 474.1 552.8 475.6 562.8 477.3 C572.8 478.9 582.8 480.8 592.8 482.7 C602.8 484.6 612.8 486.6 622.8 488.6 C632.8 490.5 642.8 492.6 652.8 494.5 C662.8 496.4 672.8 498.2 682.8 499.9 C692.8 501.7 702.8 503.2 712.8 504.9 C722.8 506.6 732.8 508.4 742.8 510.1 C752.8 511.8 762.8 513.5 772.8 515.1 C782.8 516.8 792.8 518.3 802.8 519.8 C812.8 521.2 822.8 522.5 832.8 523.6 C842.8 524.8 852.8 525.6 862.8 526.5 C872.8 527.3 882.8 528.0 892.8 528.8 C902.8 529.5 912.8 530.3 922.8 530.9 C932.8 531.6 942.8 532.2 952.8 532.8 C962.8 533.3 972.8 533.7 982.8 534.1 C992.8 534.4 1002.8 534.6 1012.8 534.7 C1022.8 534.7 1032.8 534.6 1042.8 534.5 C1052.8 534.3 1062.8 534.0 1072.8 533.8 C1082.8 533.5 1092.8 533.1 1102.8 532.8 C1112.8 532.5 1122.8 532.1 1132.8 531.8 C1142.8 531.6 1152.8 531.3 1162.8 531.2 C1172.8 531.1 1182.8 531.1 1192.8 531.2 C1202.8 531.2 1212.8 531.4 1222.8 531.7 C1232.8 531.9 1242.8 532.3 1252.8 532.7 C1262.8 533.1 1272.8 533.6 1282.8 534.1 C1292.8 534.5 1302.8 535.1 1312.8 535.6 C1322.8 536.2 1332.8 536.6 1342.8 537.3 C1352.8 538.1 1362.8 539.1 1372.8 540.4 C1382.8 541.6 1392.8 543.3 1402.8 544.8 C1412.8 546.3 1422.8 548.1 1432.8 549.5 C1442.8 551.0 1452.8 552.5 1462.8 553.5 C1472.8 554.5 1482.8 555.3 1492.8 555.5 C1502.8 555.8 1512.8 555.5 1522.8 554.9 C1532.8 554.3 1542.8 553.2 1552.8 552.0 C1562.8 550.9 1572.8 549.3 1582.8 547.9 C1592.8 546.4 1602.8 544.8 1612.8 543.3 C1622.8 541.9 1637.8 539.9 1642.8 539.2 M442.2 468.4 C447.2 468.8 462.2 470.2 472.2 471.2 C482.2 472.1 492.2 473.1 502.2 474.2 C512.2 475.3 522.2 476.4 532.2 477.7 C542.2 479.1 552.2 480.7 562.2 482.5 C572.2 484.3 582.2 486.3 592.2 488.3 C602.2 490.4 612.2 492.6 622.2 494.7 C632.2 496.8 642.2 499.0 652.2 501.0 C662.2 503.1 672.2 505.0 682.2 506.8 C692.2 508.7 702.2 510.3 712.2 512.0 C722.2 513.8 732.2 515.6 742.2 517.3 C752.2 519.1 762.2 520.9 772.2 522.5 C782.2 524.2 792.2 525.8 802.2 527.2 C812.2 528.6 822.2 530.0 832.2 531.0 C842.2 532.1 852.2 532.9 862.2 533.6 C872.2 534.4 882.2 535.0 892.2 535.6 C902.2 536.2 912.2 536.8 922.2 537.3 C932.2 537.9 942.2 538.4 952.2 538.8 C962.2 539.2 972.2 539.6 982.2 539.8 C992.2 540.1 1002.2 540.3 1012.2 540.3 C1022.2 540.4 1032.2 540.3 1042.2 540.1 C1052.2 540.0 1062.2 539.7 1072.2 539.5 C1082.2 539.2 1092.2 538.8 1102.2 538.5 C1112.2 538.2 1122.2 537.9 1132.2 537.6 C1142.2 537.4 1152.2 537.1 1162.2 537.0 C1172.2 536.9 1182.2 536.9 1192.2 536.9 C1202.2 537.0 1212.2 537.2 1222.2 537.4 C1232.2 537.7 1242.2 538.0 1252.2 538.4 C1262.2 538.8 1272.2 539.2 1282.2 539.7 C1292.2 540.2 1302.2 540.7 1312.2 541.2 C1322.2 541.8 1332.2 542.1 1342.2 542.9 C1352.2 543.7 1362.2 544.7 1372.2 545.9 C1382.2 547.2 1392.2 548.9 1402.2 550.5 C1412.2 552.1 1422.2 553.9 1432.2 555.4 C1442.2 556.9 1452.2 558.5 1462.2 559.6 C1472.2 560.6 1482.2 561.5 1492.2 561.8 C1502.2 562.1 1512.2 561.8 1522.2 561.3 C1532.2 560.8 1542.2 559.9 1552.2 558.9 C1562.2 558.0 1572.2 556.7 1582.2 555.4 C1592.2 554.2 1602.2 552.7 1612.2 551.5 C1622.2 550.2 1637.2 548.4 1642.2 547.8 M411.6 470.3 C416.6 470.8 431.6 472.4 441.6 473.4 C451.6 474.4 461.6 475.3 471.6 476.4 C481.6 477.4 491.6 478.4 501.6 479.5 C511.6 480.7 521.6 481.8 531.6 483.3 C541.6 484.7 551.6 486.4 561.6 488.3 C571.6 490.2 581.6 492.4 591.6 494.5 C601.6 496.7 611.6 499.1 621.6 501.3 C631.6 503.5 641.6 505.9 651.6 508.0 C661.6 510.1 671.6 512.1 681.6 514.0 C691.6 515.8 701.6 517.4 711.6 519.1 C721.6 520.8 731.6 522.6 741.6 524.3 C751.6 525.9 761.6 527.6 771.6 529.2 C781.6 530.8 791.6 532.3 801.6 533.6 C811.6 534.9 821.6 536.2 831.6 537.1 C841.6 538.1 851.6 538.8 861.6 539.5 C871.6 540.2 881.6 540.6 891.6 541.2 C901.6 541.7 911.6 542.2 921.6 542.7 C931.6 543.1 941.6 543.5 951.6 543.9 C961.6 544.2 971.6 544.5 981.6 544.7 C991.6 545.0 1001.6 545.1 1011.6 545.2 C1021.6 545.2 1031.6 545.1 1041.6 545.1 C1051.6 545.0 1061.6 544.8 1071.6 544.6 C1081.6 544.4 1091.6 544.2 1101.6 543.9 C1111.6 543.7 1121.6 543.5 1131.6 543.3 C1141.6 543.1 1151.6 543.0 1161.6 542.9 C1171.6 542.8 1181.6 542.8 1191.6 542.8 C1201.6 542.9 1211.6 543.1 1221.6 543.3 C1231.6 543.5 1241.6 543.8 1251.6 544.2 C1261.6 544.5 1271.6 545.0 1281.6 545.4 C1291.6 545.8 1301.6 546.3 1311.6 546.8 C1321.6 547.4 1331.6 547.7 1341.6 548.4 C1351.6 549.2 1361.6 550.2 1371.6 551.5 C1381.6 552.8 1391.6 554.5 1401.6 556.2 C1411.6 557.8 1421.6 559.7 1431.6 561.3 C1441.6 562.9 1451.6 564.5 1461.6 565.7 C1471.6 566.8 1481.6 567.7 1491.6 568.0 C1501.6 568.4 1511.6 568.1 1521.6 567.7 C1531.6 567.3 1541.6 566.6 1551.6 565.8 C1561.6 565.0 1571.6 564.0 1581.6 562.9 C1591.6 561.9 1601.6 560.7 1611.6 559.6 C1621.6 558.5 1631.6 557.6 1641.6 556.4 C1651.6 555.1 1666.6 553.0 1671.6 552.3 M381.0 471.6 C386.0 472.2 401.0 474.0 411.0 475.1 C421.0 476.3 431.0 477.5 441.0 478.6 C451.0 479.7 461.0 480.7 471.0 481.8 C481.0 482.9 491.0 484.0 501.0 485.3 C511.0 486.5 521.0 487.8 531.0 489.3 C541.0 490.9 551.0 492.7 561.0 494.7 C571.0 496.7 581.0 499.0 591.0 501.3 C601.0 503.6 611.0 506.1 621.0 508.4 C631.0 510.8 641.0 513.2 651.0 515.3 C661.0 517.5 671.0 519.5 681.0 521.4 C691.0 523.2 701.0 524.6 711.0 526.3 C721.0 527.9 731.0 529.5 741.0 531.0 C751.0 532.5 761.0 534.1 771.0 535.5 C781.0 536.9 791.0 538.2 801.0 539.4 C811.0 540.6 821.0 541.7 831.0 542.6 C841.0 543.5 851.0 544.2 861.0 544.9 C871.0 545.5 881.0 546.0 891.0 546.6 C901.0 547.1 911.0 547.7 921.0 548.1 C931.0 548.6 941.0 549.1 951.0 549.4 C961.0 549.8 971.0 550.1 981.0 550.4 C991.0 550.6 1001.0 550.7 1011.0 550.8 C1021.0 550.9 1031.0 550.8 1041.0 550.7 C1051.0 550.6 1061.0 550.5 1071.0 550.3 C1081.0 550.2 1091.0 549.9 1101.0 549.7 C1111.0 549.6 1121.0 549.3 1131.0 549.2 C1141.0 549.0 1151.0 548.9 1161.0 548.8 C1171.0 548.7 1181.0 548.7 1191.0 548.8 C1201.0 548.8 1211.0 549.0 1221.0 549.2 C1231.0 549.4 1241.0 549.7 1251.0 550.0 C1261.0 550.3 1271.0 550.7 1281.0 551.1 C1291.0 551.6 1301.0 552.0 1311.0 552.5 C1321.0 553.0 1331.0 553.3 1341.0 554.0 C1351.0 554.8 1361.0 555.7 1371.0 557.0 C1381.0 558.3 1391.0 560.1 1401.0 561.7 C1411.0 563.4 1421.0 565.3 1431.0 567.0 C1441.0 568.6 1451.0 570.3 1461.0 571.4 C1471.0 572.6 1481.0 573.5 1491.0 573.9 C1501.0 574.3 1511.0 574.0 1521.0 573.8 C1531.0 573.5 1541.0 573.0 1551.0 572.4 C1561.0 571.8 1571.0 571.0 1581.0 570.2 C1591.0 569.4 1601.0 568.5 1611.0 567.6 C1621.0 566.7 1631.0 566.0 1641.0 564.9 C1651.0 563.9 1661.0 562.7 1671.0 561.2 C1681.0 559.8 1696.0 557.0 1701.0 556.2 M380.4 475.9 C385.4 476.6 400.4 478.6 410.4 479.9 C420.4 481.2 430.4 482.6 440.4 483.8 C450.4 485.1 460.4 486.3 470.4 487.5 C480.4 488.8 490.4 490.1 500.4 491.4 C510.4 492.8 520.4 494.2 530.4 495.9 C540.4 497.6 550.4 499.5 560.4 501.6 C570.4 503.7 580.4 506.1 590.4 508.5 C600.4 510.8 610.4 513.3 620.4 515.7 C630.4 518.1 640.4 520.5 650.4 522.7 C660.4 524.8 670.4 526.8 680.4 528.6 C690.4 530.3 700.4 531.7 710.4 533.2 C720.4 534.6 730.4 536.0 740.4 537.4 C750.4 538.7 760.4 540.0 770.4 541.3 C780.4 542.5 790.4 543.6 800.4 544.7 C810.4 545.8 820.4 546.7 830.4 547.6 C840.4 548.5 850.4 549.2 860.4 549.9 C870.4 550.6 880.4 551.2 890.4 551.9 C900.4 552.5 910.4 553.1 920.4 553.7 C930.4 554.3 940.4 554.9 950.4 555.3 C960.4 555.8 970.4 556.2 980.4 556.5 C990.4 556.8 1000.4 557.0 1010.4 557.1 C1020.4 557.2 1030.4 557.1 1040.4 557.0 C1050.4 556.9 1060.4 556.7 1070.4 556.5 C1080.4 556.4 1090.4 556.1 1100.4 555.9 C1110.4 555.7 1120.4 555.4 1130.4 555.2 C1140.4 555.0 1150.4 554.9 1160.4 554.8 C1170.4 554.7 1180.4 554.7 1190.4 554.7 C1200.4 554.8 1210.4 554.9 1220.4 555.1 C1230.4 555.3 1240.4 555.6 1250.4 555.9 C1260.4 556.2 1270.4 556.6 1280.4 557.0 C1290.4 557.4 1300.4 557.9 1310.4 558.4 C1320.4 558.8 1330.4 559.1 1340.4 559.8 C1350.4 560.5 1360.4 561.4 1370.4 562.7 C1380.4 563.9 1390.4 565.6 1400.4 567.2 C1410.4 568.8 1420.4 570.7 1430.4 572.2 C1440.4 573.8 1450.4 575.4 1460.4 576.6 C1470.4 577.7 1480.4 578.6 1490.4 579.0 C1500.4 579.4 1510.4 579.1 1520.4 578.9 C1530.4 578.8 1540.4 578.3 1550.4 577.9 C1560.4 577.4 1570.4 576.9 1580.4 576.2 C1590.4 575.6 1600.4 574.9 1610.4 574.2 C1620.4 573.5 1630.4 573.0 1640.4 572.1 C1650.4 571.2 1660.4 570.2 1670.4 568.9 C1680.4 567.6 1695.4 565.1 1700.4 564.3 M379.8 480.1 C384.8 480.8 399.8 483.1 409.8 484.7 C419.8 486.2 429.8 487.7 439.8 489.2 C449.8 490.7 459.8 492.1 469.8 493.6 C479.8 495.1 489.8 496.5 499.8 498.1 C509.8 499.7 519.8 501.3 529.8 503.1 C539.8 504.9 549.8 506.9 559.8 509.1 C569.8 511.3 579.8 513.7 589.8 516.0 C599.8 518.4 609.8 520.9 619.8 523.3 C629.8 525.6 639.8 528.0 649.8 530.0 C659.8 532.1 669.8 534.0 679.8 535.6 C689.8 537.3 699.8 538.5 709.8 539.8 C719.8 541.1 729.8 542.3 739.8 543.5 C749.8 544.6 759.8 545.7 769.8 546.7 C779.8 547.8 789.8 548.7 799.8 549.6 C809.8 550.6 819.8 551.4 829.8 552.2 C839.8 553.1 849.8 553.8 859.8 554.6 C869.8 555.3 879.8 556.1 889.8 556.9 C899.8 557.6 909.8 558.4 919.8 559.2 C929.8 559.9 939.8 560.6 949.8 561.3 C959.8 561.9 969.8 562.4 979.8 562.8 C989.8 563.2 999.8 563.5 1009.8 563.6 C1019.8 563.8 1029.8 563.7 1039.8 563.6 C1049.8 563.4 1059.8 563.2 1069.8 563.0 C1079.8 562.7 1089.8 562.4 1099.8 562.1 C1109.8 561.9 1119.8 561.6 1129.8 561.3 C1139.8 561.1 1149.8 560.8 1159.8 560.7 C1169.8 560.6 1179.8 560.6 1189.8 560.6 C1199.8 560.7 1209.8 560.8 1219.8 561.0 C1229.8 561.3 1239.8 561.5 1249.8 561.9 C1259.8 562.2 1269.8 562.6 1279.8 563.0 C1289.8 563.4 1299.8 563.9 1309.8 564.4 C1319.8 564.9 1329.8 565.2 1339.8 565.9 C1349.8 566.6 1359.8 567.4 1369.8 568.5 C1379.8 569.7 1389.8 571.2 1399.8 572.7 C1409.8 574.1 1419.8 575.8 1429.8 577.2 C1439.8 578.6 1449.8 580.1 1459.8 581.1 C1469.8 582.2 1479.8 583.0 1489.8 583.3 C1499.8 583.7 1509.8 583.5 1519.8 583.3 C1529.8 583.2 1539.8 582.8 1549.8 582.4 C1559.8 582.0 1569.8 581.5 1579.8 581.0 C1589.8 580.4 1599.8 579.8 1609.8 579.2 C1619.8 578.6 1629.8 578.1 1639.8 577.4 C1649.8 576.6 1659.8 575.8 1669.8 574.7 C1679.8 573.6 1689.8 572.2 1699.8 570.9 C1709.8 569.6 1724.8 567.6 1729.8 566.9 M379.2 484.6 C384.2 485.4 399.2 488.1 409.2 489.8 C419.2 491.6 429.2 493.3 439.2 495.0 C449.2 496.8 459.2 498.4 469.2 500.2 C479.2 501.9 489.2 503.6 499.2 505.4 C509.2 507.1 519.2 508.9 529.2 510.8 C539.2 512.8 549.2 514.9 559.2 517.1 C569.2 519.2 579.2 521.7 589.2 524.0 C599.2 526.3 609.2 528.8 619.2 531.0 C629.2 533.3 639.2 535.5 649.2 537.5 C659.2 539.4 669.2 541.2 679.2 542.7 C689.2 544.2 699.2 545.4 709.2 546.5 C719.2 547.6 729.2 548.6 739.2 549.6 C749.2 550.6 759.2 551.4 769.2 552.3 C779.2 553.1 789.2 553.9 799.2 554.7 C809.2 555.5 819.2 556.2 829.2 557.0 C839.2 557.8 849.2 558.5 859.2 559.3 C869.2 560.1 879.2 561.0 889.2 561.9 C899.2 562.8 909.2 563.8 919.2 564.7 C929.2 565.6 939.2 566.5 949.2 567.3 C959.2 568.1 969.2 568.8 979.2 569.4 C989.2 569.9 999.2 570.3 1009.2 570.5 C1019.2 570.6 1029.2 570.5 1039.2 570.4 C1049.2 570.3 1059.2 570.0 1069.2 569.7 C1079.2 569.4 1089.2 569.0 1099.2 568.7 C1109.2 568.4 1119.2 568.0 1129.2 567.7 C1139.2 567.4 1149.2 567.1 1159.2 567.0 C1169.2 566.9 1179.2 566.8 1189.2 566.9 C1199.2 566.9 1209.2 567.1 1219.2 567.3 C1229.2 567.5 1239.2 567.8 1249.2 568.1 C1259.2 568.5 1269.2 568.9 1279.2 569.3 C1289.2 569.8 1299.2 570.2 1309.2 570.7 C1319.2 571.2 1329.2 571.6 1339.2 572.2 C1349.2 572.9 1359.2 573.6 1369.2 574.6 C1379.2 575.5 1389.2 576.9 1399.2 578.1 C1409.2 579.4 1419.2 580.8 1429.2 582.0 C1439.2 583.2 1449.2 584.5 1459.2 585.3 C1469.2 586.2 1479.2 586.9 1489.2 587.2 C1499.2 587.5 1509.2 587.4 1519.2 587.2 C1529.2 587.1 1539.2 586.8 1549.2 586.4 C1559.2 586.0 1569.2 585.6 1579.2 585.1 C1589.2 584.6 1599.2 584.1 1609.2 583.5 C1619.2 583.0 1629.2 582.5 1639.2 581.9 C1649.2 581.3 1659.2 580.7 1669.2 579.9 C1679.2 579.1 1689.2 578.0 1699.2 577.1 C1709.2 576.1 1724.2 574.6 1729.2 574.1 M378.4 490.1 C383.4 491.0 398.4 493.9 408.4 495.8 C418.4 497.7 428.4 499.7 438.4 501.6 C448.4 503.5 458.4 505.4 468.4 507.3 C478.4 509.2 488.4 511.1 498.4 513.0 C508.4 515.0 518.4 516.8 528.4 518.8 C538.4 520.8 548.4 522.9 558.4 525.1 C568.4 527.3 578.4 529.6 588.4 531.9 C598.4 534.1 608.4 536.4 618.4 538.6 C628.4 540.7 638.4 542.8 648.4 544.7 C658.4 546.5 668.4 548.2 678.4 549.6 C688.4 551.0 698.4 552.0 708.4 553.1 C718.4 554.1 728.4 554.9 738.4 555.8 C748.4 556.6 758.4 557.4 768.4 558.1 C778.4 558.8 788.4 559.5 798.4 560.2 C808.4 560.9 818.4 561.5 828.4 562.2 C838.4 563.0 848.4 563.7 858.4 564.5 C868.4 565.3 878.4 566.3 888.4 567.3 C898.4 568.3 908.4 569.5 918.4 570.6 C928.4 571.6 938.4 572.8 948.4 573.8 C958.4 574.7 968.4 575.7 978.4 576.3 C988.4 577.0 998.4 577.5 1008.4 577.7 C1018.4 578.0 1028.4 577.8 1038.4 577.7 C1048.4 577.5 1058.4 577.2 1068.4 576.9 C1078.4 576.5 1088.4 576.1 1098.4 575.7 C1108.4 575.3 1118.4 574.8 1128.4 574.5 C1138.4 574.1 1148.4 573.8 1158.4 573.6 C1168.4 573.4 1178.4 573.4 1188.4 573.4 C1198.4 573.4 1208.4 573.6 1218.4 573.8 C1228.4 574.1 1238.4 574.4 1248.4 574.7 C1258.4 575.1 1268.4 575.5 1278.4 575.9 C1288.4 576.4 1298.4 576.8 1308.4 577.3 C1318.4 577.8 1328.4 578.2 1338.4 578.8 C1348.4 579.3 1358.4 580.0 1368.4 580.8 C1378.4 581.6 1388.4 582.7 1398.4 583.7 C1408.4 584.7 1418.4 585.9 1428.4 586.8 C1438.4 587.8 1448.4 588.8 1458.4 589.5 C1468.4 590.2 1478.4 590.8 1488.4 591.0 C1498.4 591.3 1508.4 591.2 1518.4 591.0 C1528.4 590.9 1538.4 590.6 1548.4 590.3 C1558.4 589.9 1568.4 589.5 1578.4 589.0 C1588.4 588.6 1598.4 588.1 1608.4 587.7 C1618.4 587.2 1628.4 586.8 1638.4 586.3 C1648.4 585.9 1658.4 585.4 1668.4 584.9 C1678.4 584.3 1688.4 583.7 1698.4 583.1 C1708.4 582.5 1718.4 581.8 1728.4 581.3 C1738.4 580.7 1753.4 580.0 1758.4 579.8 M377.6 496.5 C382.6 497.5 397.6 500.6 407.6 502.6 C417.6 504.7 427.6 506.7 437.6 508.7 C447.6 510.8 457.6 512.8 467.6 514.9 C477.6 516.9 487.6 519.0 497.6 521.0 C507.6 523.0 517.6 525.0 527.6 527.0 C537.6 529.0 547.6 531.0 557.6 533.1 C567.6 535.2 577.6 537.4 587.6 539.5 C597.6 541.6 607.6 543.7 617.6 545.7 C627.6 547.7 637.6 549.6 647.6 551.4 C657.6 553.1 667.6 554.7 677.6 556.0 C687.6 557.3 697.6 558.4 707.6 559.4 C717.6 560.4 727.6 561.2 737.6 562.1 C747.6 562.9 757.6 563.6 767.6 564.3 C777.6 565.1 787.6 565.7 797.6 566.4 C807.6 567.1 817.6 567.8 827.6 568.5 C837.6 569.2 847.6 569.9 857.6 570.8 C867.6 571.7 877.6 572.7 887.6 573.8 C897.6 574.9 907.6 576.1 917.6 577.3 C927.6 578.5 937.6 579.8 947.6 580.8 C957.6 581.9 967.6 583.0 977.6 583.7 C987.6 584.5 997.6 585.1 1007.6 585.3 C1017.6 585.6 1027.6 585.4 1037.6 585.3 C1047.6 585.1 1057.6 584.6 1067.6 584.2 C1077.6 583.8 1087.6 583.2 1097.6 582.6 C1107.6 582.1 1117.6 581.5 1127.6 581.1 C1137.6 580.6 1147.6 580.2 1157.6 579.9 C1167.6 579.7 1177.6 579.6 1187.6 579.6 C1197.6 579.7 1207.6 579.9 1217.6 580.1 C1227.6 580.4 1237.6 580.7 1247.6 581.1 C1257.6 581.5 1267.6 582.0 1277.6 582.4 C1287.6 582.9 1297.6 583.4 1307.6 583.9 C1317.6 584.4 1327.6 584.9 1337.6 585.4 C1347.6 585.9 1357.6 586.4 1367.6 587.1 C1377.6 587.8 1387.6 588.6 1397.6 589.4 C1407.6 590.2 1417.6 591.1 1427.6 591.8 C1437.6 592.5 1447.6 593.3 1457.6 593.8 C1467.6 594.3 1477.6 594.8 1487.6 595.0 C1497.6 595.2 1507.6 595.1 1517.6 595.0 C1527.6 594.8 1537.6 594.5 1547.6 594.2 C1557.6 593.8 1567.6 593.4 1577.6 593.0 C1587.6 592.5 1597.6 592.1 1607.6 591.7 C1617.6 591.3 1627.6 591.0 1637.6 590.7 C1647.6 590.4 1657.6 590.2 1667.6 589.9 C1677.6 589.7 1687.6 589.4 1697.6 589.1 C1707.6 588.9 1717.6 588.7 1727.6 588.4 C1737.6 588.2 1752.6 588.0 1757.6 587.9 M376.7 503.7 C381.7 504.8 396.7 507.9 406.7 510.0 C416.7 512.1 426.7 514.2 436.7 516.4 C446.7 518.5 456.7 520.7 466.7 522.9 C476.7 525.0 486.7 527.2 496.7 529.3 C506.7 531.4 516.7 533.4 526.7 535.3 C536.7 537.3 546.7 539.2 556.7 541.1 C566.7 543.0 576.7 545.0 586.7 546.9 C596.7 548.8 606.7 550.6 616.7 552.4 C626.7 554.2 636.7 555.9 646.7 557.5 C656.7 559.1 666.7 560.6 676.7 561.9 C686.7 563.3 696.7 564.4 706.7 565.5 C716.7 566.6 726.7 567.6 736.7 568.6 C746.7 569.6 756.7 570.5 766.7 571.4 C776.7 572.2 786.7 573.1 796.7 573.9 C806.7 574.7 816.7 575.5 826.7 576.4 C836.7 577.2 846.7 578.0 856.7 578.9 C866.7 579.9 876.7 580.9 886.7 581.9 C896.7 583.0 906.7 584.2 916.7 585.4 C926.7 586.5 936.7 587.7 946.7 588.7 C956.7 589.7 966.7 590.7 976.7 591.4 C986.7 592.1 996.7 592.7 1006.7 593.0 C1016.7 593.2 1026.7 593.1 1036.7 592.9 C1046.7 592.7 1056.7 592.1 1066.7 591.6 C1076.7 591.0 1086.7 590.3 1096.7 589.7 C1106.7 589.0 1116.7 588.3 1126.7 587.7 C1136.7 587.1 1146.7 586.5 1156.7 586.2 C1166.7 585.9 1176.7 585.8 1186.7 585.8 C1196.7 585.8 1206.7 586.1 1216.7 586.4 C1226.7 586.7 1236.7 587.1 1246.7 587.5 C1256.7 587.9 1266.7 588.5 1276.7 589.0 C1286.7 589.5 1296.7 590.0 1306.7 590.5 C1316.7 591.0 1326.7 591.5 1336.7 592.0 C1346.7 592.5 1356.7 592.9 1366.7 593.4 C1376.7 594.0 1386.7 594.6 1396.7 595.2 C1406.7 595.8 1416.7 596.4 1426.7 596.9 C1436.7 597.5 1446.7 598.0 1456.7 598.4 C1466.7 598.8 1476.7 599.1 1486.7 599.2 C1496.7 599.4 1506.7 599.3 1516.7 599.2 C1526.7 599.0 1536.7 598.6 1546.7 598.3 C1556.7 597.9 1566.7 597.4 1576.7 597.0 C1586.7 596.6 1596.7 596.1 1606.7 595.8 C1616.7 595.5 1626.7 595.3 1636.7 595.2 C1646.7 595.1 1656.7 595.2 1666.7 595.2 C1676.7 595.3 1686.7 595.3 1696.7 595.4 C1706.7 595.4 1716.7 595.5 1726.7 595.5 C1736.7 595.6 1746.7 595.7 1756.7 595.8 C1766.7 595.9 1781.7 596.1 1786.7 596.1 M375.8 511.5 C380.8 512.5 395.8 515.7 405.8 517.9 C415.8 520.0 425.8 522.2 435.8 524.4 C445.8 526.6 455.8 528.9 465.8 531.1 C475.8 533.3 485.8 535.5 495.8 537.6 C505.8 539.7 515.8 541.7 525.8 543.6 C535.8 545.5 545.8 547.2 555.8 548.9 C565.8 550.7 575.8 552.3 585.8 554.0 C595.8 555.6 605.8 557.2 615.8 558.7 C625.8 560.2 635.8 561.7 645.8 563.1 C655.8 564.6 665.8 566.0 675.8 567.4 C685.8 568.7 695.8 570.1 705.8 571.4 C715.8 572.7 725.8 574.0 735.8 575.2 C745.8 576.5 755.8 577.7 765.8 578.9 C775.8 580.1 785.8 581.3 795.8 582.4 C805.8 583.5 815.8 584.6 825.8 585.6 C835.8 586.7 845.8 587.6 855.8 588.6 C865.8 589.5 875.8 590.5 885.8 591.4 C895.8 592.4 905.8 593.5 915.8 594.5 C925.8 595.4 935.8 596.4 945.8 597.3 C955.8 598.1 965.8 598.9 975.8 599.5 C985.8 600.1 995.8 600.6 1005.8 600.8 C1015.8 600.9 1025.8 600.9 1035.8 600.6 C1045.8 600.4 1055.8 599.8 1065.8 599.2 C1075.8 598.5 1085.8 597.7 1095.8 596.9 C1105.8 596.2 1115.8 595.3 1125.8 594.6 C1135.8 593.9 1145.8 593.2 1155.8 592.8 C1165.8 592.5 1175.8 592.3 1185.8 592.3 C1195.8 592.4 1205.8 592.6 1215.8 592.9 C1225.8 593.2 1235.8 593.7 1245.8 594.1 C1255.8 594.6 1265.8 595.1 1275.8 595.6 C1285.8 596.2 1295.8 596.7 1305.8 597.2 C1315.8 597.7 1325.8 598.2 1335.8 598.6 C1345.8 599.0 1355.8 599.4 1365.8 599.8 C1375.8 600.2 1385.8 600.7 1395.8 601.2 C1405.8 601.6 1415.8 602.1 1425.8 602.5 C1435.8 602.9 1445.8 603.2 1455.8 603.5 C1465.8 603.8 1475.8 604.0 1485.8 604.1 C1495.8 604.2 1505.8 604.2 1515.8 604.1 C1525.8 603.9 1535.8 603.6 1545.8 603.2 C1555.8 602.9 1565.8 602.4 1575.8 602.0 C1585.8 601.6 1595.8 601.1 1605.8 600.8 C1615.8 600.5 1625.8 600.3 1635.8 600.2 C1645.8 600.2 1655.8 600.3 1665.8 600.4 C1675.8 600.6 1685.8 600.8 1695.8 601.1 C1705.8 601.4 1715.8 601.8 1725.8 602.1 C1735.8 602.5 1745.8 602.9 1755.8 603.3 C1765.8 603.7 1775.8 604.1 1785.8 604.5 C1795.8 604.8 1810.8 605.4 1815.8 605.5 M374.8 519.9 C379.8 520.9 394.8 524.1 404.8 526.2 C414.8 528.3 424.8 530.4 434.8 532.6 C444.8 534.8 454.8 537.1 464.8 539.3 C474.8 541.5 484.8 543.8 494.8 545.9 C504.8 547.9 514.8 549.9 524.8 551.7 C534.8 553.5 544.8 555.0 554.8 556.6 C564.8 558.1 574.8 559.5 584.8 560.9 C594.8 562.3 604.8 563.7 614.8 565.0 C624.8 566.3 634.8 567.6 644.8 568.9 C654.8 570.2 664.8 571.5 674.8 572.8 C684.8 574.2 694.8 575.6 704.8 577.1 C714.8 578.5 724.8 580.1 734.8 581.7 C744.8 583.2 754.8 584.9 764.8 586.4 C774.8 588.0 784.8 589.5 794.8 591.0 C804.8 592.4 814.8 593.8 824.8 595.1 C834.8 596.3 844.8 597.4 854.8 598.4 C864.8 599.4 874.8 600.2 884.8 601.1 C894.8 602.0 904.8 602.9 914.8 603.7 C924.8 604.6 934.8 605.4 944.8 606.1 C954.8 606.8 964.8 607.5 974.8 608.0 C984.8 608.4 994.8 608.8 1004.8 609.0 C1014.8 609.1 1024.8 609.2 1034.8 608.9 C1044.8 608.5 1054.8 607.9 1064.8 607.1 C1074.8 606.4 1084.8 605.4 1094.8 604.5 C1104.8 603.6 1114.8 602.5 1124.8 601.7 C1134.8 600.9 1144.8 600.0 1154.8 599.6 C1164.8 599.1 1174.8 598.9 1184.8 598.9 C1194.8 598.9 1204.8 599.2 1214.8 599.5 C1224.8 599.8 1234.8 600.3 1244.8 600.8 C1254.8 601.2 1264.8 601.8 1274.8 602.4 C1284.8 602.9 1294.8 603.5 1304.8 604.0 C1314.8 604.5 1324.8 605.0 1334.8 605.3 C1344.8 605.7 1354.8 606.0 1364.8 606.4 C1374.8 606.7 1384.8 607.1 1394.8 607.4 C1404.8 607.7 1414.8 608.1 1424.8 608.4 C1434.8 608.7 1444.8 608.9 1454.8 609.1 C1464.8 609.3 1474.8 609.5 1484.8 609.6 C1494.8 609.6 1504.8 609.7 1514.8 609.5 C1524.8 609.4 1534.8 609.1 1544.8 608.8 C1554.8 608.5 1564.8 608.1 1574.8 607.8 C1584.8 607.4 1594.8 607.1 1604.8 606.8 C1614.8 606.6 1624.8 606.3 1634.8 606.3 C1644.8 606.3 1654.8 606.4 1664.8 606.6 C1674.8 606.9 1684.8 607.3 1694.8 607.8 C1704.8 608.2 1714.8 608.8 1724.8 609.4 C1734.8 610.0 1744.8 610.6 1754.8 611.2 C1764.8 611.8 1774.8 612.4 1784.8 612.9 C1794.8 613.5 1804.8 613.9 1814.8 614.3 C1824.8 614.7 1839.8 615.3 1844.8 615.5 M373.8 528.5 C378.8 529.6 393.8 532.6 403.8 534.7 C413.8 536.8 423.8 538.9 433.8 541.0 C443.8 543.2 453.8 545.5 463.8 547.7 C473.8 549.8 483.8 552.1 493.8 554.1 C503.8 556.1 513.8 558.0 523.8 559.7 C533.8 561.4 543.8 562.9 553.8 564.3 C563.8 565.7 573.8 566.9 583.8 568.2 C593.8 569.4 603.8 570.5 613.8 571.7 C623.8 572.8 633.8 573.9 643.8 575.1 C653.8 576.3 663.8 577.5 673.8 578.8 C683.8 580.1 693.8 581.5 703.8 583.1 C713.8 584.6 723.8 586.4 733.8 588.1 C743.8 589.9 753.8 591.8 763.8 593.6 C773.8 595.4 783.8 597.3 793.8 599.0 C803.8 600.7 813.8 602.4 823.8 603.8 C833.8 605.2 843.8 606.4 853.8 607.4 C863.8 608.5 873.8 609.2 883.8 610.1 C893.8 610.9 903.8 611.8 913.8 612.5 C923.8 613.3 933.8 614.1 943.8 614.7 C953.8 615.4 963.8 616.0 973.8 616.4 C983.8 616.8 993.8 617.2 1003.8 617.3 C1013.8 617.5 1023.8 617.6 1033.8 617.2 C1043.8 616.9 1053.8 616.1 1063.8 615.3 C1073.8 614.4 1083.8 613.2 1093.8 612.2 C1103.8 611.1 1113.8 609.9 1123.8 609.0 C1133.8 608.0 1143.8 607.0 1153.8 606.5 C1163.8 605.9 1173.8 605.7 1183.8 605.6 C1193.8 605.6 1203.8 605.9 1213.8 606.3 C1223.8 606.6 1233.8 607.1 1243.8 607.6 C1253.8 608.1 1263.8 608.7 1273.8 609.3 C1283.8 609.9 1293.8 610.5 1303.8 611.0 C1313.8 611.5 1323.8 611.9 1333.8 612.3 C1343.8 612.6 1353.8 612.8 1363.8 613.1 C1373.8 613.4 1383.8 613.7 1393.8 613.9 C1403.8 614.2 1413.8 614.5 1423.8 614.7 C1433.8 614.9 1443.8 615.1 1453.8 615.2 C1463.8 615.4 1473.8 615.5 1483.8 615.6 C1493.8 615.6 1503.8 615.6 1513.8 615.6 C1523.8 615.6 1533.8 615.5 1543.8 615.4 C1553.8 615.3 1563.8 615.2 1573.8 615.1 C1583.8 615.0 1593.8 614.9 1603.8 614.8 C1613.8 614.7 1623.8 614.6 1633.8 614.7 C1643.8 614.7 1653.8 614.7 1663.8 615.0 C1673.8 615.2 1683.8 615.7 1693.8 616.2 C1703.8 616.6 1713.8 617.3 1723.8 617.9 C1733.8 618.5 1743.8 619.2 1753.8 619.8 C1763.8 620.4 1773.8 621.0 1783.8 621.6 C1793.8 622.1 1803.8 622.5 1813.8 623.0 C1823.8 623.4 1833.8 623.8 1843.8 624.2 C1853.8 624.6 1868.8 625.2 1873.8 625.4 M372.8 536.8 C377.8 537.8 392.8 540.8 402.8 542.9 C412.8 545.0 422.8 547.1 432.8 549.2 C442.8 551.4 452.8 553.8 462.8 555.9 C472.8 558.1 482.8 560.4 492.8 562.4 C502.8 564.4 512.8 566.3 522.8 567.9 C532.8 569.6 542.8 570.9 552.8 572.2 C562.8 573.5 572.8 574.6 582.8 575.7 C592.8 576.7 602.8 577.7 612.8 578.7 C622.8 579.7 632.8 580.7 642.8 581.7 C652.8 582.8 662.8 583.8 672.8 585.1 C682.8 586.3 692.8 587.6 702.8 589.1 C712.8 590.7 722.8 592.5 732.8 594.4 C742.8 596.2 752.8 598.3 762.8 600.2 C772.8 602.2 782.8 604.3 792.8 606.1 C802.8 607.9 812.8 609.8 822.8 611.3 C832.8 612.8 842.8 614.1 852.8 615.2 C862.8 616.2 872.8 616.9 882.8 617.7 C892.8 618.6 902.8 619.4 912.8 620.1 C922.8 620.8 932.8 621.6 942.8 622.2 C952.8 622.8 962.8 623.3 972.8 623.7 C982.8 624.2 992.8 624.5 1002.8 624.6 C1012.8 624.8 1022.8 624.9 1032.8 624.5 C1042.8 624.2 1052.8 623.4 1062.8 622.6 C1072.8 621.7 1082.8 620.5 1092.8 619.4 C1102.8 618.4 1112.8 617.1 1122.8 616.1 C1132.8 615.1 1142.8 614.1 1152.8 613.5 C1162.8 612.9 1172.8 612.6 1182.8 612.6 C1192.8 612.5 1202.8 612.8 1212.8 613.2 C1222.8 613.5 1232.8 614.1 1242.8 614.6 C1252.8 615.1 1262.8 615.8 1272.8 616.3 C1282.8 616.9 1292.8 617.6 1302.8 618.1 C1312.8 618.6 1322.8 619.0 1332.8 619.4 C1342.8 619.7 1352.8 619.9 1362.8 620.1 C1372.8 620.3 1382.8 620.5 1392.8 620.7 C1402.8 620.9 1412.8 621.1 1422.8 621.3 C1432.8 621.5 1442.8 621.6 1452.8 621.7 C1462.8 621.9 1472.8 622.0 1482.8 622.1 C1492.8 622.2 1502.8 622.4 1512.8 622.4 C1522.8 622.5 1532.8 622.6 1542.8 622.6 C1552.8 622.7 1562.8 622.8 1572.8 622.8 C1582.8 622.9 1592.8 622.9 1602.8 623.0 C1612.8 623.1 1622.8 623.1 1632.8 623.3 C1642.8 623.4 1652.8 623.6 1662.8 623.9 C1672.8 624.2 1682.8 624.6 1692.8 625.1 C1702.8 625.6 1712.8 626.2 1722.8 626.8 C1732.8 627.3 1742.8 628.0 1752.8 628.5 C1762.8 629.1 1772.8 629.7 1782.8 630.2 C1792.8 630.8 1802.8 631.2 1812.8 631.6 C1822.8 632.1 1832.8 632.5 1842.8 632.9 C1852.8 633.3 1862.8 633.7 1872.8 634.1 C1882.8 634.5 1897.8 635.0 1902.8 635.2 M371.9 544.9 C376.9 546.0 391.9 549.0 401.9 551.1 C411.9 553.2 421.9 555.3 431.9 557.5 C441.9 559.7 451.9 562.1 461.9 564.3 C471.9 566.6 481.9 568.9 491.9 570.9 C501.9 572.9 511.9 574.8 521.9 576.4 C531.9 577.9 541.9 579.1 551.9 580.3 C561.9 581.5 571.9 582.4 581.9 583.4 C591.9 584.4 601.9 585.2 611.9 586.1 C621.9 586.9 631.9 587.7 641.9 588.7 C651.9 589.6 661.9 590.5 671.9 591.6 C681.9 592.7 691.9 593.9 701.9 595.3 C711.9 596.8 721.9 598.5 731.9 600.3 C741.9 602.1 751.9 604.2 761.9 606.1 C771.9 608.1 781.9 610.1 791.9 612.0 C801.9 613.8 811.9 615.7 821.9 617.2 C831.9 618.7 841.9 620.1 851.9 621.1 C861.9 622.2 871.9 622.9 881.9 623.7 C891.9 624.5 901.9 625.3 911.9 626.0 C921.9 626.8 931.9 627.5 941.9 628.1 C951.9 628.7 961.9 629.2 971.9 629.6 C981.9 630.1 991.9 630.4 1001.9 630.5 C1011.9 630.7 1021.9 630.8 1031.9 630.5 C1041.9 630.2 1051.9 629.5 1061.9 628.8 C1071.9 628.0 1081.9 626.9 1091.9 625.9 C1101.9 624.9 1111.9 623.8 1121.9 622.8 C1131.9 621.9 1141.9 621.0 1151.9 620.4 C1161.9 619.9 1171.9 619.6 1181.9 619.5 C1191.9 619.5 1201.9 619.8 1211.9 620.1 C1221.9 620.4 1231.9 621.0 1241.9 621.5 C1251.9 622.0 1261.9 622.7 1271.9 623.3 C1281.9 623.8 1291.9 624.5 1301.9 625.0 C1311.9 625.5 1321.9 626.0 1331.9 626.3 C1341.9 626.6 1351.9 626.8 1361.9 627.0 C1371.9 627.2 1381.9 627.4 1391.9 627.5 C1401.9 627.7 1411.9 627.8 1421.9 628.0 C1431.9 628.1 1441.9 628.3 1451.9 628.4 C1461.9 628.6 1471.9 628.7 1481.9 628.9 C1491.9 629.0 1501.9 629.2 1511.9 629.4 C1521.9 629.6 1531.9 629.7 1541.9 629.9 C1551.9 630.1 1561.9 630.3 1571.9 630.5 C1581.9 630.7 1591.9 630.9 1601.9 631.1 C1611.9 631.3 1621.9 631.5 1631.9 631.8 C1641.9 632.1 1651.9 632.4 1661.9 632.8 C1671.9 633.2 1681.9 633.7 1691.9 634.1 C1701.9 634.6 1711.9 635.2 1721.9 635.7 C1731.9 636.2 1741.9 636.8 1751.9 637.4 C1761.9 637.9 1771.9 638.4 1781.9 638.9 C1791.9 639.4 1801.9 639.8 1811.9 640.3 C1821.9 640.7 1831.9 641.1 1841.9 641.5 C1851.9 641.9 1861.9 642.3 1871.9 642.7 C1881.9 643.1 1891.9 643.5 1901.9 643.9 C1911.9 644.3 1921.9 644.7 1931.9 645.1 C1941.9 645.5 1956.9 646.1 1961.9 646.3 M370.9 552.9 C375.9 554.0 390.9 557.1 400.9 559.2 C410.9 561.3 420.9 563.4 430.9 565.6 C440.9 567.9 450.9 570.3 460.9 572.6 C470.9 574.9 480.9 577.2 490.9 579.2 C500.9 581.3 510.9 583.2 520.9 584.7 C530.9 586.2 540.9 587.3 550.9 588.4 C560.9 589.5 570.9 590.4 580.9 591.3 C590.9 592.1 600.9 592.9 610.9 593.6 C620.9 594.4 630.9 595.1 640.9 595.9 C650.9 596.8 660.9 597.6 670.9 598.6 C680.9 599.6 690.9 600.6 700.9 601.9 C710.9 603.2 720.9 604.8 730.9 606.5 C740.9 608.1 750.9 610.0 760.9 611.7 C770.9 613.5 780.9 615.4 790.9 617.2 C800.9 618.9 810.9 620.6 820.9 622.1 C830.9 623.6 840.9 624.9 850.9 626.0 C860.9 627.0 870.9 627.7 880.9 628.6 C890.9 629.5 900.9 630.3 910.9 631.1 C920.9 631.9 930.9 632.7 940.9 633.3 C950.9 634.0 960.9 634.6 970.9 635.1 C980.9 635.5 990.9 635.9 1000.9 636.1 C1010.9 636.3 1020.9 636.4 1030.9 636.1 C1040.9 635.9 1050.9 635.3 1060.9 634.7 C1070.9 634.0 1080.9 633.1 1090.9 632.2 C1100.9 631.4 1110.9 630.4 1120.9 629.6 C1130.9 628.8 1140.9 628.0 1150.9 627.5 C1160.9 627.0 1170.9 626.7 1180.9 626.6 C1190.9 626.6 1200.9 626.8 1210.9 627.1 C1220.9 627.4 1230.9 627.8 1240.9 628.3 C1250.9 628.8 1260.9 629.3 1270.9 629.9 C1280.9 630.4 1290.9 631.0 1300.9 631.4 C1310.9 631.9 1320.9 632.4 1330.9 632.7 C1340.9 633.0 1350.9 633.3 1360.9 633.5 C1370.9 633.7 1380.9 633.9 1390.9 634.1 C1400.9 634.3 1410.9 634.5 1420.9 634.6 C1430.9 634.8 1440.9 635.0 1450.9 635.2 C1460.9 635.3 1470.9 635.5 1480.9 635.7 C1490.9 636.0 1500.9 636.2 1510.9 636.5 C1520.9 636.7 1530.9 637.0 1540.9 637.3 C1550.9 637.6 1560.9 637.9 1570.9 638.3 C1580.9 638.6 1590.9 638.9 1600.9 639.3 C1610.9 639.7 1620.9 640.0 1630.9 640.4 C1640.9 640.8 1650.9 641.2 1660.9 641.6 C1670.9 642.1 1680.9 642.5 1690.9 643.0 C1700.9 643.5 1710.9 644.0 1720.9 644.6 C1730.9 645.1 1740.9 645.6 1750.9 646.1 C1760.9 646.6 1770.9 647.1 1780.9 647.6 C1790.9 648.1 1800.9 648.5 1810.9 648.9 C1820.9 649.4 1830.9 649.8 1840.9 650.2 C1850.9 650.6 1860.9 651.0 1870.9 651.4 C1880.9 651.8 1890.9 652.2 1900.9 652.6 C1910.9 653.0 1920.9 653.3 1930.9 653.7 C1940.9 654.1 1950.9 654.6 1960.9 655.0 C1970.9 655.4 1985.9 656.0 1990.9 656.2 M370.0 560.4 C375.0 561.5 390.0 564.6 400.0 566.8 C410.0 568.9 420.0 571.0 430.0 573.3 C440.0 575.6 450.0 578.1 460.0 580.5 C470.0 582.8 480.0 585.2 490.0 587.3 C500.0 589.3 510.0 591.3 520.0 592.8 C530.0 594.3 540.0 595.4 550.0 596.5 C560.0 597.5 570.0 598.4 580.0 599.2 C590.0 600.0 600.0 600.7 610.0 601.5 C620.0 602.2 630.0 602.9 640.0 603.6 C650.0 604.4 660.0 605.1 670.0 606.1 C680.0 607.0 690.0 607.9 700.0 609.1 C710.0 610.3 720.0 611.7 730.0 613.1 C740.0 614.6 750.0 616.2 760.0 617.8 C770.0 619.3 780.0 621.0 790.0 622.5 C800.0 624.1 810.0 625.6 820.0 627.0 C830.0 628.3 840.0 629.6 850.0 630.6 C860.0 631.7 870.0 632.5 880.0 633.4 C890.0 634.4 900.0 635.3 910.0 636.2 C920.0 637.1 930.0 638.0 940.0 638.7 C950.0 639.5 960.0 640.2 970.0 640.7 C980.0 641.3 990.0 641.7 1000.0 642.0 C1010.0 642.2 1020.0 642.3 1030.0 642.1 C1040.0 641.9 1050.0 641.5 1060.0 640.9 C1070.0 640.4 1080.0 639.6 1090.0 638.9 C1100.0 638.2 1110.0 637.4 1120.0 636.7 C1130.0 636.1 1140.0 635.4 1150.0 635.0 C1160.0 634.6 1170.0 634.3 1180.0 634.3 C1190.0 634.2 1200.0 634.4 1210.0 634.6 C1220.0 634.8 1230.0 635.1 1240.0 635.5 C1250.0 635.8 1260.0 636.2 1270.0 636.6 C1280.0 637.0 1290.0 637.5 1300.0 637.9 C1310.0 638.3 1320.0 638.7 1330.0 639.0 C1340.0 639.3 1350.0 639.6 1360.0 639.9 C1370.0 640.1 1380.0 640.4 1390.0 640.6 C1400.0 640.8 1410.0 641.1 1420.0 641.3 C1430.0 641.5 1440.0 641.8 1450.0 642.0 C1460.0 642.3 1470.0 642.5 1480.0 642.8 C1490.0 643.1 1500.0 643.4 1510.0 643.8 C1520.0 644.1 1530.0 644.5 1540.0 644.9 C1550.0 645.3 1560.0 645.8 1570.0 646.2 C1580.0 646.6 1590.0 647.1 1600.0 647.6 C1610.0 648.0 1620.0 648.5 1630.0 649.0 C1640.0 649.4 1650.0 649.9 1660.0 650.4 C1670.0 650.8 1680.0 651.3 1690.0 651.8 C1700.0 652.3 1710.0 652.8 1720.0 653.3 C1730.0 653.8 1740.0 654.3 1750.0 654.8 C1760.0 655.3 1770.0 655.8 1780.0 656.3 C1790.0 656.7 1800.0 657.2 1810.0 657.6 C1820.0 658.0 1830.0 658.4 1840.0 658.9 C1850.0 659.3 1860.0 659.7 1870.0 660.1 C1880.0 660.5 1890.0 660.8 1900.0 661.2 C1910.0 661.6 1920.0 662.0 1930.0 662.4 C1940.0 662.8 1950.0 663.2 1960.0 663.6 C1970.0 664.0 1980.0 664.5 1990.0 664.9 C2000.0 665.3 2015.0 665.9 2020.0 666.1 M369.1 567.7 C374.1 568.8 389.1 572.0 399.1 574.2 C409.1 576.4 419.1 578.5 429.1 580.9 C439.1 583.2 449.1 585.8 459.1 588.2 C469.1 590.5 479.1 593.0 489.1 595.1 C499.1 597.2 509.1 599.2 519.1 600.8 C529.1 602.4 539.1 603.5 549.1 604.6 C559.1 605.7 569.1 606.5 579.1 607.4 C589.1 608.2 599.1 609.0 609.1 609.7 C619.1 610.5 629.1 611.1 639.1 611.9 C649.1 612.7 659.1 613.4 669.1 614.3 C679.1 615.2 689.1 616.1 699.1 617.2 C709.1 618.3 719.1 619.5 729.1 620.7 C739.1 622.0 749.1 623.3 759.1 624.7 C769.1 626.0 779.1 627.4 789.1 628.7 C799.1 630.0 809.1 631.3 819.1 632.5 C829.1 633.7 839.1 634.8 849.1 635.8 C859.1 636.9 869.1 637.7 879.1 638.7 C889.1 639.6 899.1 640.6 909.1 641.6 C919.1 642.5 929.1 643.5 939.1 644.3 C949.1 645.2 959.1 646.0 969.1 646.6 C979.1 647.2 989.1 647.7 999.1 648.0 C1009.1 648.3 1019.1 648.3 1029.1 648.2 C1039.1 648.1 1049.1 647.7 1059.1 647.3 C1069.1 646.9 1079.1 646.3 1089.1 645.7 C1099.1 645.1 1109.1 644.5 1119.1 643.9 C1129.1 643.4 1139.1 642.8 1149.1 642.5 C1159.1 642.1 1169.1 641.9 1179.1 641.9 C1189.1 641.8 1199.1 642.0 1209.1 642.1 C1219.1 642.3 1229.1 642.6 1239.1 642.8 C1249.1 643.1 1259.1 643.5 1269.1 643.8 C1279.1 644.2 1289.1 644.6 1299.1 644.9 C1309.1 645.3 1319.1 645.7 1329.1 646.0 C1339.1 646.3 1349.1 646.6 1359.1 646.8 C1369.1 647.1 1379.1 647.3 1389.1 647.6 C1399.1 647.9 1409.1 648.1 1419.1 648.4 C1429.1 648.6 1439.1 648.9 1449.1 649.2 C1459.1 649.5 1469.1 649.8 1479.1 650.1 C1489.1 650.4 1499.1 650.8 1509.1 651.2 C1519.1 651.6 1529.1 652.1 1539.1 652.6 C1549.1 653.1 1559.1 653.7 1569.1 654.2 C1579.1 654.8 1589.1 655.4 1599.1 656.0 C1609.1 656.6 1619.1 657.1 1629.1 657.7 C1639.1 658.2 1649.1 658.7 1659.1 659.2 C1669.1 659.7 1679.1 660.2 1689.1 660.7 C1699.1 661.2 1709.1 661.7 1719.1 662.1 C1729.1 662.6 1739.1 663.1 1749.1 663.6 C1759.1 664.0 1769.1 664.5 1779.1 664.9 C1789.1 665.4 1799.1 665.8 1809.1 666.3 C1819.1 666.7 1829.1 667.1 1839.1 667.5 C1849.1 667.9 1859.1 668.3 1869.1 668.7 C1879.1 669.1 1889.1 669.5 1899.1 669.9 C1909.1 670.3 1919.1 670.7 1929.1 671.1 C1939.1 671.5 1949.1 671.9 1959.1 672.3 C1969.1 672.7 1979.1 673.1 1989.1 673.5 C1999.1 674.0 2009.1 674.4 2019.1 674.8 C2029.1 675.2 2044.1 675.8 2049.1 676.0 M368.2 575.1 C373.2 576.2 388.2 579.4 398.2 581.6 C408.2 583.8 418.2 586.0 428.2 588.4 C438.2 590.8 448.2 593.4 458.2 595.8 C468.2 598.2 478.2 600.7 488.2 602.9 C498.2 605.0 508.2 607.1 518.2 608.7 C528.2 610.3 538.2 611.5 548.2 612.6 C558.2 613.8 568.2 614.7 578.2 615.6 C588.2 616.6 598.2 617.3 608.2 618.2 C618.2 619.0 628.2 619.7 638.2 620.5 C648.2 621.3 658.2 622.0 668.2 622.9 C678.2 623.8 688.2 624.7 698.2 625.7 C708.2 626.7 718.2 627.8 728.2 628.9 C738.2 630.0 748.2 631.2 758.2 632.3 C768.2 633.5 778.2 634.7 788.2 635.8 C798.2 636.9 808.2 638.0 818.2 639.1 C828.2 640.1 838.2 641.1 848.2 642.1 C858.2 643.0 868.2 643.8 878.2 644.7 C888.2 645.7 898.2 646.7 908.2 647.6 C918.2 648.5 928.2 649.5 938.2 650.3 C948.2 651.2 958.2 652.0 968.2 652.6 C978.2 653.2 988.2 653.8 998.2 654.1 C1008.2 654.4 1018.2 654.4 1028.2 654.4 C1038.2 654.3 1048.2 653.9 1058.2 653.6 C1068.2 653.3 1078.2 652.7 1088.2 652.3 C1098.2 651.8 1108.2 651.2 1118.2 650.8 C1128.2 650.3 1138.2 649.8 1148.2 649.6 C1158.2 649.3 1168.2 649.0 1178.2 649.0 C1188.2 649.0 1198.2 649.1 1208.2 649.3 C1218.2 649.5 1228.2 649.8 1238.2 650.1 C1248.2 650.4 1258.2 650.8 1268.2 651.2 C1278.2 651.6 1288.2 652.0 1298.2 652.4 C1308.2 652.8 1318.2 653.2 1328.2 653.6 C1338.2 653.9 1348.2 654.2 1358.2 654.4 C1368.2 654.7 1378.2 655.0 1388.2 655.2 C1398.2 655.4 1408.2 655.7 1418.2 655.9 C1428.2 656.2 1438.2 656.4 1448.2 656.7 C1458.2 657.0 1468.2 657.3 1478.2 657.6 C1488.2 658.0 1498.2 658.3 1508.2 658.8 C1518.2 659.2 1528.2 659.8 1538.2 660.4 C1548.2 661.1 1558.2 661.8 1568.2 662.5 C1578.2 663.2 1588.2 664.0 1598.2 664.7 C1608.2 665.4 1618.2 666.1 1628.2 666.7 C1638.2 667.3 1648.2 667.8 1658.2 668.3 C1668.2 668.8 1678.2 669.3 1688.2 669.7 C1698.2 670.2 1708.2 670.7 1718.2 671.1 C1728.2 671.5 1738.2 672.0 1748.2 672.4 C1758.2 672.8 1768.2 673.2 1778.2 673.6 C1788.2 674.1 1798.2 674.5 1808.2 674.9 C1818.2 675.3 1828.2 675.7 1838.2 676.2 C1848.2 676.6 1858.2 677.0 1868.2 677.4 C1878.2 677.8 1888.2 678.1 1898.2 678.5 C1908.2 678.9 1918.2 679.3 1928.2 679.7 C1938.2 680.1 1948.2 680.5 1958.2 681.0 C1968.2 681.4 1978.2 681.8 1988.2 682.2 C1998.2 682.6 2008.2 683.0 2018.2 683.4 C2028.2 683.8 2043.2 684.5 2048.2 684.7 M367.3 582.9 C372.3 583.9 387.3 587.2 397.3 589.4 C407.3 591.6 417.3 593.8 427.3 596.2 C437.3 598.5 447.3 601.1 457.3 603.5 C467.3 605.9 477.3 608.4 487.3 610.5 C497.3 612.7 507.3 614.7 517.3 616.4 C527.3 618.1 537.3 619.3 547.3 620.5 C557.3 621.7 567.3 622.7 577.3 623.7 C587.3 624.7 597.3 625.6 607.3 626.4 C617.3 627.3 627.3 628.1 637.3 628.9 C647.3 629.7 657.3 630.5 667.3 631.4 C677.3 632.3 687.3 633.2 697.3 634.2 C707.3 635.2 717.3 636.3 727.3 637.3 C737.3 638.4 747.3 639.5 757.3 640.6 C767.3 641.7 777.3 642.8 787.3 643.8 C797.3 644.9 807.3 645.9 817.3 646.9 C827.3 647.9 837.3 648.8 847.3 649.6 C857.3 650.5 867.3 651.2 877.3 652.0 C887.3 652.8 897.3 653.7 907.3 654.5 C917.3 655.3 927.3 656.2 937.3 656.9 C947.3 657.7 957.3 658.4 967.3 658.9 C977.3 659.5 987.3 659.9 997.3 660.2 C1007.3 660.4 1017.3 660.5 1027.3 660.5 C1037.3 660.4 1047.3 660.2 1057.3 659.9 C1067.3 659.7 1077.3 659.3 1087.3 658.9 C1097.3 658.6 1107.3 658.1 1117.3 657.8 C1127.3 657.4 1137.3 657.1 1147.3 656.8 C1157.3 656.6 1167.3 656.4 1177.3 656.4 C1187.3 656.4 1197.3 656.5 1207.3 656.7 C1217.3 656.9 1227.3 657.2 1237.3 657.6 C1247.3 657.9 1257.3 658.3 1267.3 658.8 C1277.3 659.2 1287.3 659.7 1297.3 660.1 C1307.3 660.5 1317.3 660.9 1327.3 661.3 C1337.3 661.7 1347.3 662.0 1357.3 662.2 C1367.3 662.5 1377.3 662.8 1387.3 663.0 C1397.3 663.3 1407.3 663.5 1417.3 663.8 C1427.3 664.0 1437.3 664.3 1447.3 664.6 C1457.3 664.9 1467.3 665.1 1477.3 665.5 C1487.3 665.9 1497.3 666.2 1507.3 666.7 C1517.3 667.2 1527.3 667.9 1537.3 668.6 C1547.3 669.4 1557.3 670.2 1567.3 671.1 C1577.3 671.9 1587.3 672.8 1597.3 673.6 C1607.3 674.4 1617.3 675.2 1627.3 675.9 C1637.3 676.5 1647.3 677.0 1657.3 677.5 C1667.3 678.0 1677.3 678.5 1687.3 678.9 C1697.3 679.3 1707.3 679.7 1717.3 680.1 C1727.3 680.5 1737.3 680.9 1747.3 681.2 C1757.3 681.6 1767.3 682.0 1777.3 682.4 C1787.3 682.8 1797.3 683.2 1807.3 683.6 C1817.3 684.0 1827.3 684.4 1837.3 684.8 C1847.3 685.2 1857.3 685.6 1867.3 686.0 C1877.3 686.4 1887.3 686.8 1897.3 687.2 C1907.3 687.6 1917.3 688.0 1927.3 688.4 C1937.3 688.8 1947.3 689.2 1957.3 689.6 C1967.3 690.0 1982.3 690.7 1987.3 690.9 M366.3 591.3 C371.3 592.3 386.3 595.5 396.3 597.6 C406.3 599.8 416.3 601.9 426.3 604.2 C436.3 606.4 446.3 608.9 456.3 611.2 C466.3 613.5 476.3 615.9 486.3 618.0 C496.3 620.1 506.3 622.2 516.3 623.8 C526.3 625.5 536.3 626.8 546.3 628.1 C556.3 629.4 566.3 630.4 576.3 631.5 C586.3 632.6 596.3 633.5 606.3 634.4 C616.3 635.4 626.3 636.2 636.3 637.1 C646.3 638.0 656.3 638.9 666.3 639.8 C676.3 640.8 686.3 641.7 696.3 642.7 C706.3 643.8 716.3 644.9 726.3 646.0 C736.3 647.1 746.3 648.3 756.3 649.4 C766.3 650.5 776.3 651.7 786.3 652.7 C796.3 653.8 806.3 654.9 816.3 655.8 C826.3 656.7 836.3 657.6 846.3 658.4 C856.3 659.1 866.3 659.7 876.3 660.4 C886.3 661.0 896.3 661.7 906.3 662.3 C916.3 663.0 926.3 663.6 936.3 664.1 C946.3 664.7 956.3 665.2 966.3 665.6 C976.3 666.0 986.3 666.4 996.3 666.6 C1006.3 666.8 1016.3 666.8 1026.3 666.8 C1036.3 666.8 1046.3 666.6 1056.3 666.4 C1066.3 666.2 1076.3 665.9 1086.3 665.7 C1096.3 665.4 1106.3 665.1 1116.3 664.8 C1126.3 664.6 1136.3 664.3 1146.3 664.1 C1156.3 664.0 1166.3 663.8 1176.3 663.8 C1186.3 663.8 1196.3 663.9 1206.3 664.1 C1216.3 664.3 1226.3 664.6 1236.3 665.0 C1246.3 665.4 1256.3 665.8 1266.3 666.3 C1276.3 666.8 1286.3 667.3 1296.3 667.7 C1306.3 668.2 1316.3 668.7 1326.3 669.1 C1336.3 669.5 1346.3 669.8 1356.3 670.2 C1366.3 670.5 1376.3 670.8 1386.3 671.1 C1396.3 671.4 1406.3 671.7 1416.3 672.0 C1426.3 672.3 1436.3 672.6 1446.3 673.0 C1456.3 673.3 1466.3 673.7 1476.3 674.1 C1486.3 674.5 1496.3 674.9 1506.3 675.5 C1516.3 676.0 1526.3 676.7 1536.3 677.5 C1546.3 678.2 1556.3 679.1 1566.3 680.0 C1576.3 680.9 1586.3 681.8 1596.3 682.6 C1606.3 683.4 1616.3 684.2 1626.3 684.9 C1636.3 685.5 1646.3 686.0 1656.3 686.5 C1666.3 687.0 1676.3 687.4 1686.3 687.8 C1696.3 688.2 1706.3 688.6 1716.3 688.9 C1726.3 689.3 1736.3 689.6 1746.3 690.0 C1756.3 690.4 1766.3 690.7 1776.3 691.1 C1786.3 691.4 1796.3 691.8 1806.3 692.2 C1816.3 692.6 1826.3 693.0 1836.3 693.4 C1846.3 693.8 1856.3 694.2 1866.3 694.6 C1876.3 695.0 1886.3 695.4 1896.3 695.8 C1906.3 696.2 1921.3 696.9 1926.3 697.1 M365.3 600.3 C370.3 601.3 385.3 604.2 395.3 606.2 C405.3 608.2 415.3 610.2 425.3 612.3 C435.3 614.4 445.3 616.7 455.3 618.8 C465.3 620.9 475.3 623.1 485.3 625.1 C495.3 627.1 505.3 629.0 515.3 630.6 C525.3 632.3 535.3 633.6 545.3 635.0 C555.3 636.3 565.3 637.4 575.3 638.6 C585.3 639.7 595.3 640.7 605.3 641.7 C615.3 642.7 625.3 643.7 635.3 644.6 C645.3 645.6 655.3 646.6 665.3 647.6 C675.3 648.6 685.3 649.6 695.3 650.7 C705.3 651.8 715.3 653.1 725.3 654.3 C735.3 655.5 745.3 656.9 755.3 658.1 C765.3 659.4 775.3 660.7 785.3 661.8 C795.3 663.0 805.3 664.2 815.3 665.1 C825.3 666.1 835.3 667.0 845.3 667.6 C855.3 668.3 865.3 668.7 875.3 669.2 C885.3 669.7 895.3 670.1 905.3 670.5 C915.3 670.9 925.3 671.3 935.3 671.7 C945.3 672.0 955.3 672.3 965.3 672.6 C975.3 672.8 985.3 673.0 995.3 673.1 C1005.3 673.2 1015.3 673.3 1025.3 673.3 C1035.3 673.2 1045.3 673.1 1055.3 673.0 C1065.3 672.8 1075.3 672.6 1085.3 672.4 C1095.3 672.2 1105.3 672.0 1115.3 671.8 C1125.3 671.6 1135.3 671.3 1145.3 671.2 C1155.3 671.1 1165.3 670.9 1175.3 670.9 C1185.3 670.9 1195.3 671.0 1205.3 671.2 C1215.3 671.5 1225.3 671.9 1235.3 672.3 C1245.3 672.7 1255.3 673.3 1265.3 673.8 C1275.3 674.3 1285.3 675.0 1295.3 675.5 C1305.3 676.1 1315.3 676.6 1325.3 677.1 C1335.3 677.6 1345.3 678.0 1355.3 678.4 C1365.3 678.8 1375.3 679.2 1385.3 679.6 C1395.3 680.0 1405.3 680.3 1415.3 680.7 C1425.3 681.1 1435.3 681.4 1445.3 681.9 C1455.3 682.3 1465.3 682.7 1475.3 683.2 C1485.3 683.6 1495.3 684.1 1505.3 684.7 C1515.3 685.3 1525.3 686.0 1535.3 686.7 C1545.3 687.5 1555.3 688.3 1565.3 689.1 C1575.3 690.0 1585.3 690.8 1595.3 691.6 C1605.3 692.4 1615.3 693.1 1625.3 693.8 C1635.3 694.4 1645.3 694.8 1655.3 695.3 C1665.3 695.8 1675.3 696.2 1685.3 696.6 C1695.3 697.0 1705.3 697.3 1715.3 697.7 C1725.3 698.0 1735.3 698.4 1745.3 698.7 C1755.3 699.1 1765.3 699.4 1775.3 699.8 C1785.3 700.1 1795.3 700.5 1805.3 700.9 C1815.3 701.3 1825.3 701.7 1835.3 702.1 C1845.3 702.5 1860.3 703.1 1865.3 703.3 M364.3 609.2 C369.3 610.1 384.3 612.8 394.3 614.7 C404.3 616.5 414.3 618.4 424.3 620.3 C434.3 622.2 444.3 624.3 454.3 626.2 C464.3 628.2 474.3 630.2 484.3 632.0 C494.3 633.9 504.3 635.7 514.3 637.3 C524.3 638.8 539.3 640.8 544.3 641.5 M604.3 648.2 C609.3 648.7 624.3 650.2 634.3 651.2 C644.3 652.2 654.3 653.1 664.3 654.2 C674.3 655.3 684.3 656.3 694.3 657.5 C704.3 658.7 714.3 660.1 724.3 661.5 C734.3 663.0 744.3 664.6 754.3 666.1 C764.3 667.6 774.3 669.1 784.3 670.5 C794.3 671.9 804.3 673.3 814.3 674.3 C824.3 675.4 834.3 676.3 844.3 676.9 C854.3 677.5 864.3 677.7 874.3 677.9 C884.3 678.2 894.3 678.4 904.3 678.6 C914.3 678.8 924.3 679.0 934.3 679.2 C944.3 679.3 954.3 679.5 964.3 679.6 C974.3 679.7 984.3 679.8 994.3 679.8 C1004.3 679.9 1014.3 679.9 1024.3 679.9 C1034.3 679.9 1044.3 679.8 1054.3 679.7 C1064.3 679.6 1074.3 679.5 1084.3 679.4 C1094.3 679.2 1104.3 679.1 1114.3 678.9 C1124.3 678.8 1134.3 678.7 1144.3 678.6 C1154.3 678.5 1164.3 678.4 1174.3 678.4 C1184.3 678.4 1194.3 678.5 1204.3 678.7 C1214.3 679.0 1224.3 679.4 1234.3 679.9 C1244.3 680.3 1254.3 681.0 1264.3 681.6 C1274.3 682.2 1284.3 682.9 1294.3 683.5 C1304.3 684.1 1314.3 684.8 1324.3 685.3 C1334.3 685.9 1344.3 686.3 1354.3 686.8 C1364.3 687.3 1374.3 687.7 1384.3 688.2 C1394.3 688.6 1404.3 689.1 1414.3 689.5 C1424.3 690.0 1434.3 690.4 1444.3 690.9 C1454.3 691.4 1464.3 691.9 1474.3 692.4 C1484.3 692.9 1494.3 693.4 1504.3 694.1 C1514.3 694.7 1524.3 695.4 1534.3 696.1 C1544.3 696.9 1554.3 697.7 1564.3 698.5 C1574.3 699.3 1584.3 700.1 1594.3 700.9 C1604.3 701.6 1614.3 702.3 1624.3 702.9 C1634.3 703.5 1644.3 703.9 1654.3 704.4 C1664.3 704.8 1674.3 705.2 1684.3 705.6 C1694.3 705.9 1704.3 706.2 1714.3 706.6 C1724.3 706.9 1734.3 707.2 1744.3 707.5 C1754.3 707.8 1764.3 708.1 1774.3 708.5 C1784.3 708.8 1799.3 709.4 1804.3 709.5 M753.4 673.7 C758.4 674.5 773.4 677.1 783.4 678.7 C793.4 680.2 803.4 681.7 813.4 682.9 C823.4 684.0 833.4 685.0 843.4 685.5 C853.4 686.1 863.4 686.0 873.4 686.2 C883.4 686.4 893.4 686.4 903.4 686.5 C913.4 686.5 923.4 686.6 933.4 686.6 C943.4 686.7 953.4 686.8 963.4 686.8 C973.4 686.8 983.4 686.9 993.4 686.9 C1003.4 686.9 1013.4 686.9 1023.4 686.9 C1033.4 686.9 1043.4 686.9 1053.4 686.8 C1063.4 686.8 1073.4 686.8 1083.4 686.7 C1093.4 686.7 1103.4 686.6 1113.4 686.6 C1123.4 686.5 1133.4 686.5 1143.4 686.5 C1153.4 686.4 1163.4 686.4 1173.4 686.4 C1183.4 686.4 1193.4 686.5 1203.4 686.7 C1213.4 687.0 1223.4 687.4 1233.4 687.9 C1243.4 688.4 1253.4 689.0 1263.4 689.7 C1273.4 690.3 1283.4 691.0 1293.4 691.7 C1303.4 692.3 1313.4 693.0 1323.4 693.6 C1333.4 694.2 1343.4 694.8 1353.4 695.3 C1363.4 695.8 1373.4 696.3 1383.4 696.9 C1393.4 697.4 1403.4 697.9 1413.4 698.4 C1423.4 699.0 1433.4 699.5 1443.4 700.0 C1453.4 700.6 1463.4 701.2 1473.4 701.7 C1483.4 702.3 1493.4 702.9 1503.4 703.5 C1513.4 704.2 1523.4 704.9 1533.4 705.7 C1543.4 706.4 1553.4 707.3 1563.4 708.0 C1573.4 708.8 1583.4 709.7 1593.4 710.4 C1603.4 711.1 1613.4 711.8 1623.4 712.3 C1633.4 712.9 1643.4 713.3 1653.4 713.7 C1663.4 714.1 1673.4 714.4 1683.4 714.8 C1693.4 715.1 1703.4 715.3 1713.4 715.6 C1723.4 715.9 1738.4 716.3 1743.4 716.4 M812.5 690.2 C817.5 690.6 832.5 692.4 842.5 692.9 C852.5 693.5 862.5 693.5 872.5 693.6 C882.5 693.7 892.5 693.7 902.5 693.7 C912.5 693.8 922.5 693.8 932.5 693.8 C942.5 693.9 952.5 693.9 962.5 693.9 C972.5 693.9 982.5 694.0 992.5 694.0 C1002.5 694.0 1012.5 694.1 1022.5 694.1 C1032.5 694.2 1042.5 694.2 1052.5 694.2 C1062.5 694.3 1072.5 694.3 1082.5 694.4 C1092.5 694.4 1102.5 694.4 1112.5 694.5 C1122.5 694.6 1132.5 694.6 1142.5 694.7 C1152.5 694.8 1162.5 694.8 1172.5 694.9 C1182.5 695.1 1192.5 695.2 1202.5 695.5 C1212.5 695.8 1222.5 696.2 1232.5 696.7 C1242.5 697.2 1252.5 697.8 1262.5 698.4 C1272.5 699.0 1282.5 699.7 1292.5 700.3 C1302.5 701.0 1312.5 701.7 1322.5 702.3 C1332.5 702.9 1342.5 703.4 1352.5 704.0 C1362.5 704.6 1372.5 705.2 1382.5 705.8 C1392.5 706.4 1402.5 707.0 1412.5 707.6 C1422.5 708.2 1432.5 708.8 1442.5 709.4 C1452.5 710.1 1462.5 710.7 1472.5 711.3 C1482.5 712.0 1492.5 712.6 1502.5 713.3 C1512.5 713.9 1522.5 714.7 1532.5 715.4 C1542.5 716.2 1552.5 717.0 1562.5 717.8 C1572.5 718.5 1582.5 719.3 1592.5 720.0 C1602.5 720.7 1612.5 721.4 1622.5 721.9 C1632.5 722.4 1647.5 722.9 1652.5 723.1 M841.7 699.8 C846.7 699.9 861.7 700.4 871.7 700.6 C881.7 700.8 891.7 700.8 901.7 700.8 C911.7 700.9 921.7 701.0 931.7 701.0 C941.7 701.0 951.7 701.1 961.7 701.1 C971.7 701.2 981.7 701.2 991.7 701.3 C1001.7 701.3 1011.7 701.4 1021.7 701.5 C1031.7 701.6 1041.7 701.7 1051.7 701.8 C1061.7 701.9 1071.7 702.1 1081.7 702.2 C1091.7 702.4 1101.7 702.5 1111.7 702.7 C1121.7 702.9 1131.7 703.1 1141.7 703.3 C1151.7 703.5 1161.7 703.7 1171.7 704.0 C1181.7 704.3 1191.7 704.5 1201.7 704.9 C1211.7 705.2 1221.7 705.7 1231.7 706.1 C1241.7 706.6 1251.7 707.1 1261.7 707.7 C1271.7 708.2 1281.7 708.8 1291.7 709.4 C1301.7 710.0 1311.7 710.6 1321.7 711.2 C1331.7 711.7 1341.7 712.3 1351.7 712.9 C1361.7 713.5 1371.7 714.2 1381.7 714.8 C1391.7 715.5 1401.7 716.2 1411.7 716.8 C1421.7 717.5 1431.7 718.2 1441.7 718.9 C1451.7 719.6 1461.7 720.4 1471.7 721.0 C1481.7 721.7 1491.7 722.4 1501.7 723.1 C1511.7 723.8 1521.7 724.5 1531.7 725.3 C1541.7 726.0 1551.7 726.8 1561.7 727.6 C1571.7 728.3 1581.7 729.1 1591.7 729.7 C1601.7 730.4 1616.7 731.2 1621.7 731.4 M840.8 706.6 C845.8 706.8 860.8 707.4 870.8 707.6 C880.8 707.9 890.8 707.9 900.8 708.0 C910.8 708.1 920.8 708.2 930.8 708.3 C940.8 708.3 950.8 708.4 960.8 708.4 C970.8 708.5 980.8 708.6 990.8 708.7 C1000.8 708.8 1010.8 708.9 1020.8 709.0 C1030.8 709.2 1040.8 709.4 1050.8 709.6 C1060.8 709.8 1070.8 710.1 1080.8 710.4 C1090.8 710.7 1100.8 711.0 1110.8 711.3 C1120.8 711.6 1130.8 712.0 1140.8 712.3 C1150.8 712.6 1160.8 713.0 1170.8 713.4 C1180.8 713.7 1190.8 714.1 1200.8 714.5 C1210.8 714.9 1220.8 715.3 1230.8 715.7 C1240.8 716.2 1250.8 716.6 1260.8 717.1 C1270.8 717.6 1280.8 718.1 1290.8 718.6 C1300.8 719.1 1310.8 719.6 1320.8 720.1 C1330.8 720.7 1340.8 721.2 1350.8 721.8 C1360.8 722.3 1370.8 723.0 1380.8 723.6 C1390.8 724.2 1400.8 724.9 1410.8 725.6 C1420.8 726.3 1430.8 727.0 1440.8 727.7 C1450.8 728.4 1460.8 729.1 1470.8 729.8 C1480.8 730.5 1490.8 731.1 1500.8 731.9 C1510.8 732.6 1520.8 733.4 1530.8 734.2 C1540.8 735.0 1555.8 736.3 1560.8 736.7 M869.9 714.7 C874.9 714.8 889.9 715.1 899.9 715.2 C909.9 715.4 919.9 715.5 929.9 715.6 C939.9 715.7 949.9 715.8 959.9 715.9 C969.9 716.0 979.9 716.1 989.9 716.2 C999.9 716.4 1009.9 716.5 1019.9 716.8 C1029.9 717.0 1039.9 717.3 1049.9 717.6 C1059.9 717.9 1069.9 718.3 1079.9 718.7 C1089.9 719.1 1099.9 719.6 1109.9 720.0 C1119.9 720.5 1129.9 720.9 1139.9 721.4 C1149.9 721.8 1159.9 722.3 1169.9 722.7 C1179.9 723.2 1189.9 723.6 1199.9 724.0 C1209.9 724.4 1219.9 724.8 1229.9 725.3 C1239.9 725.7 1249.9 726.1 1259.9 726.5 C1269.9 727.0 1279.9 727.4 1289.9 727.8 C1299.9 728.3 1309.9 728.7 1319.9 729.2 C1329.9 729.7 1339.9 730.2 1349.9 730.7 C1359.9 731.2 1369.9 731.7 1379.9 732.2 C1389.9 732.7 1399.9 733.2 1409.9 733.8 C1419.9 734.3 1429.9 734.9 1439.9 735.5 C1449.9 736.0 1459.9 736.6 1469.9 737.3 C1479.9 737.9 1489.9 738.5 1499.9 739.2 C1509.9 740.0 1524.9 741.4 1529.9 741.8 M899.0 722.5 C904.0 722.6 919.0 722.9 929.0 723.1 C939.0 723.3 949.0 723.4 959.0 723.5 C969.0 723.7 979.0 723.9 989.0 724.1 C999.0 724.3 1009.0 724.5 1019.0 724.8 C1029.0 725.1 1039.0 725.5 1049.0 725.9 C1059.0 726.4 1069.0 726.9 1079.0 727.4 C1089.0 728.0 1099.0 728.5 1109.0 729.1 C1119.0 729.7 1129.0 730.3 1139.0 730.8 C1149.0 731.4 1159.0 731.9 1169.0 732.4 C1179.0 732.9 1189.0 733.3 1199.0 733.8 C1209.0 734.2 1219.0 734.6 1229.0 735.0 C1239.0 735.4 1249.0 735.8 1259.0 736.2 C1269.0 736.5 1279.0 736.9 1289.0 737.3 C1299.0 737.7 1309.0 738.1 1319.0 738.5 C1329.0 738.9 1339.0 739.4 1349.0 739.8 C1359.0 740.2 1369.0 740.6 1379.0 741.0 C1389.0 741.4 1399.0 741.8 1409.0 742.2 C1419.0 742.6 1429.0 743.0 1439.0 743.4 C1449.0 743.9 1464.0 744.6 1469.0 744.9 M898.1 729.8 C903.1 729.9 918.1 730.3 928.1 730.5 C938.1 730.8 948.1 730.9 958.1 731.2 C968.1 731.4 978.1 731.6 988.1 731.9 C998.1 732.2 1008.1 732.4 1018.1 732.9 C1028.1 733.3 1038.1 733.8 1048.1 734.4 C1058.1 735.0 1068.1 735.7 1078.1 736.4 C1088.1 737.1 1098.1 737.9 1108.1 738.7 C1118.1 739.4 1128.1 740.2 1138.1 740.9 C1148.1 741.6 1158.1 742.2 1168.1 742.7 C1178.1 743.3 1188.1 743.6 1198.1 744.0 C1208.1 744.4 1218.1 744.7 1228.1 745.0 C1238.1 745.3 1248.1 745.6 1258.1 745.9 C1268.1 746.2 1278.1 746.4 1288.1 746.7 C1298.1 747.0 1308.1 747.3 1318.1 747.6 C1328.1 747.9 1338.1 748.2 1348.1 748.5 C1358.1 748.9 1368.1 749.2 1378.1 749.5 C1388.1 749.8 1403.1 750.2 1408.1 750.4 M927.2 738.0 C932.2 738.1 947.2 738.5 957.2 738.8 C967.2 739.1 977.2 739.3 987.2 739.7 C997.2 740.0 1007.2 740.4 1017.2 740.9 C1027.2 741.4 1037.2 742.0 1047.2 742.8 C1057.2 743.6 1067.2 744.6 1077.2 745.5 C1087.2 746.4 1097.2 747.5 1107.2 748.5 C1117.2 749.4 1127.2 750.4 1137.2 751.2 C1147.2 752.0 1157.2 752.7 1167.2 753.2 C1177.2 753.7 1187.2 753.9 1197.2 754.2 C1207.2 754.4 1217.2 754.6 1227.2 754.8 C1237.2 755.0 1247.2 755.1 1257.2 755.3 C1267.2 755.4 1277.2 755.5 1287.2 755.7 C1297.2 755.8 1307.2 756.0 1317.2 756.2 C1327.2 756.3 1342.2 756.7 1347.2 756.8 M926.3 745.5 C931.3 745.6 946.3 746.1 956.3 746.5 C966.3 746.9 976.3 747.2 986.3 747.6 C996.3 748.0 1006.3 748.4 1016.3 749.1 C1026.3 749.7 1036.3 750.4 1046.3 751.3 C1056.3 752.2 1066.3 753.3 1076.3 754.4 C1086.3 755.4 1096.3 756.7 1106.3 757.7 C1116.3 758.8 1126.3 759.9 1136.3 760.7 C1146.3 761.5 1156.3 762.3 1166.3 762.8 C1176.3 763.2 1186.3 763.3 1196.3 763.5 C1206.3 763.7 1216.3 763.8 1226.3 763.9 C1236.3 764.0 1246.3 764.1 1256.3 764.1 C1266.3 764.2 1281.3 764.3 1286.3 764.4 M955.4 754.4 C960.4 754.6 975.4 755.2 985.4 755.8 C995.4 756.3 1005.4 756.7 1015.4 757.4 C1025.4 758.1 1035.4 758.9 1045.4 759.8 C1055.4 760.7 1065.4 761.9 1075.4 763.0 C1085.4 764.1 1095.4 765.3 1105.4 766.4 C1115.4 767.4 1125.4 768.5 1135.4 769.3 C1145.4 770.2 1155.4 770.9 1165.4 771.3 C1175.4 771.8 1185.4 771.9 1195.4 772.0 C1205.4 772.2 1220.4 772.3 1225.4 772.4 M954.6 762.9 C959.6 763.2 974.6 764.0 984.6 764.7 C994.6 765.3 1004.6 765.9 1014.6 766.7 C1024.6 767.4 1034.6 768.3 1044.6 769.2 C1054.6 770.1 1064.6 771.2 1074.6 772.3 C1084.6 773.3 1094.6 774.4 1104.6 775.4 C1114.6 776.4 1124.6 777.4 1134.6 778.1 C1144.6 778.9 1159.6 779.7 1164.6 780.0 M953.7 771.6 C958.7 772.0 973.7 773.1 983.7 773.9 C993.7 774.7 1003.7 775.4 1013.7 776.2 C1023.7 777.1 1033.7 777.9 1043.7 778.8 C1053.7 779.7 1063.7 780.8 1073.7 781.7 C1083.7 782.7 1098.7 784.1 1103.7 784.6" fill="none" stroke="#0a0a0a" stroke-width="1.25"/></g>
<path d="M421 476.3 L440.0 474.6 L487.5 472.8 L560.0 473.0 L700.0 472.2 L900.0 470.6 L1100.0 468.0 L1250.0 465.4 L1339.6 462.9 L1480.0 510.5 L1640.0 563.5 L1800.0 612.8 L1900.0 643.2 L2017.7 678.2 L1964.0 688.0 L1852.0 698.8 L1640.0 719.6 L1516.0 732.4 L1340.0 752.6 L1180.0 771.0 L1019.3 785.7 C1015.4 781.4 1004.3 767.4 996.1 759.9 C987.9 752.4 981.0 747.0 970.3 740.6 C959.6 734.2 946.7 727.7 931.7 721.2 C916.7 714.8 899.5 708.1 880.1 701.9 C860.8 695.7 837.1 689.0 815.6 683.8 C794.1 678.6 770.5 674.8 751.1 670.9 C731.8 667.0 721.0 664.5 699.5 660.6 C678.0 656.7 647.9 651.4 622.1 647.7 C596.3 644.1 570.6 641.5 544.8 638.7 C519.0 635.9 491.0 633.4 467.4 631.0 C443.8 628.6 414.1 625.4 403.4 624.3 Z" fill="none" stroke="#000" stroke-width="2" stroke-linejoin="round"/>
<path d="M1203.5 639 L1361 616.4 L1362.4 621.4 Z" fill="#e2e1df" stroke="#000" stroke-width="0.9"/>
<path d="M1470 600.9 L1433 606 L1438 607.4 Z" fill="#e2e1df" stroke="#000" stroke-width="0.6"/>
<path d="M1127.7 618.2 L1391.7 583.8 L1471.7 600.6 L1203.5 638.6 Z" fill="#6c6d70" stroke="#000" stroke-width="2.6" stroke-linejoin="round"/>
<path d="M1165.6 628.4 L1431.7 592.2 M1268 600 L1337 620" stroke="#1a1a1a" stroke-width="0.8" fill="none"/>
<g stroke="#000" stroke-width="1" stroke-linejoin="round">
<path d="M1379 626.4 Q1412 627.5 1436 617.4 L1430 612 L1379 621z" fill="#d8d7d5"/>
<path d="M1361 616 L1372.8 618.3 L1372.8 625.9 L1362.4 621.4z" fill="#b4b3b1"/>
<path d="M1372.8 618.3 L1378 617.6 L1378 626 L1372.8 625.9z" fill="#f0efed"/>
<path d="M1361 616 L1366 614.6 L1378 617.6 L1372.8 618.3z" fill="#8a8988"/>
<path d="M1378 617.4 L1426 609.6 L1427.5 617 L1378 626z" fill="#0c0c0c"/>
<path d="M1376 614.4 L1421 608.4 L1426 609.8 L1378 617.6z" fill="#e9e8e6" stroke-width="0.8"/>
<path d="M1381 622.2 L1426.6 614.2" stroke="#e2e1df" stroke-width="1.1"/>
<path d="M1426 608.2 L1433 607 L1438 609.6 L1438 614.6 L1431.5 617 L1427.5 616.6z" fill="#d6d5d3"/>
<path d="M1431.5 609.8 L1431.5 617 M1426 608.2 L1431.5 609.8 L1438 609.6" fill="none" stroke-width="0.9"/>
</g>
<circle cx="403.4" cy="624.3" r="2.6" fill="#fff" stroke="#e21be2" stroke-width="1.4"/>
</svg>
<div style="left:2081px;top:152px;width:478px;height:1217px;background:#d8d9de;"></div>
<div style="left:2084px;top:157px;width:473px;height:1212px;background:#e9eaee;border-radius:5px 5px 0 0;"></div>
<span class="t" style="left:2088.7px;top:155.5px;font-size:12px;color:#666;letter-spacing:-0.420px;">Layers</span>
<div style="left:2084px;top:174px;width:473px;height:1px;background:#d4d5da;"></div>
<div style="left:2538px;top:211px;width:21px;height:1158px;background:#d8d9de;border-radius:5px 0 0 0;"></div>
<div style="left:2085px;top:208px;width:2448px;height:20px;"></div>
<div style="left:2085px;top:208px;width:448.5px;height:20.5px;background:#fff;border:1px solid #bac5de;border-radius:10px;box-sizing:border-box;"></div>
<span class="t" style="left:2103.3px;top:211.0px;font-size:12px;color:#7a7a7a;letter-spacing:-0.587px;">Search</span>
<div style="left:2084px;top:234.5px;width:450px;height:1134.5px;background:#fff;"></div>
<div style="left:2084px;top:256.5px;width:450px;height:1px;background:#cfd6ea;"></div>
<div style="left:2231px;top:235px;width:1px;height:22px;background:#d5dbea;"></div>
<div style="left:2252px;top:235px;width:1px;height:22px;background:#d5dbea;"></div>
<div style="left:2272px;top:235px;width:1px;height:22px;background:#d5dbea;"></div>
<div style="left:2291px;top:235px;width:1px;height:22px;background:#d5dbea;"></div>
<div style="left:2311px;top:235px;width:1px;height:22px;background:#d5dbea;"></div>
<div style="left:2392px;top:235px;width:1px;height:22px;background:#d5dbea;"></div>
<div style="left:2471px;top:235px;width:1px;height:22px;background:#d5dbea;"></div>
<div style="left:2491px;top:235px;width:1px;height:22px;background:#d5dbea;"></div>
<span class="t" style="left:2089.3px;top:238.1px;font-size:12px;color:#333;letter-spacing:-0.403px;">Layer</span>
<span class="t" style="left:2317.5px;top:238.1px;font-size:12px;color:#333;letter-spacing:-0.022px;">Material</span>
<span class="t" style="left:2397px;top:238.1px;font-size:12px;color:#333;letter-spacing:-0.046px;">Linetype</span>
<div style="left:2492px;top:235px;width:42px;height:22px;overflow:hidden;background:none"><span class="t" style="left:5px;top:3.1px;font-size:12px;color:#333;letter-spacing:0.1px">Print Width</span></div>
<div style="left:2084px;top:275.5px;width:450px;height:0;border-top:1px dotted #d0d0d0;background:none"></div>
<span class="t" style="left:2101.3px;top:259.3px;font-size:12px;color:#1e1e1e;letter-spacing:-0.003px;">Default</span>
<span class="t" style="left:2393.5px;top:259.3px;font-size:12px;color:#1e1e1e;letter-spacing:0.079px;">Continuous</span>
<span class="t" style="left:2493.4px;top:259.3px;font-size:12px;color:#1e1e1e;letter-spacing:-0.074px;">Default</span>
<div style="left:2084px;top:294.5px;width:450px;height:0;border-top:1px dotted #d0d0d0;background:none"></div>
<span class="t" style="left:2101.3px;top:278.3px;font-size:12px;color:#1e1e1e;letter-spacing:-0.587px;">Layer 01</span>
<span class="t" style="left:2393.5px;top:278.3px;font-size:12px;color:#1e1e1e;letter-spacing:0.079px;">Continuous</span>
<span class="t" style="left:2493.4px;top:278.3px;font-size:12px;color:#1e1e1e;letter-spacing:-0.074px;">Default</span>
<div style="left:2084px;top:313.5px;width:450px;height:0;border-top:1px dotted #d0d0d0;background:none"></div>
<span class="t" style="left:2101.3px;top:297.3px;font-size:12px;color:#1e1e1e;letter-spacing:-0.462px;">Layer 02</span>
<span class="t" style="left:2393.5px;top:297.3px;font-size:12px;color:#1e1e1e;letter-spacing:0.079px;">Continuous</span>
<span class="t" style="left:2493.4px;top:297.3px;font-size:12px;color:#1e1e1e;letter-spacing:-0.074px;">Default</span>
<div style="left:2084px;top:332.5px;width:450px;height:0;border-top:1px dotted #d0d0d0;background:none"></div>
<span class="t" style="left:2101.3px;top:316.3px;font-size:12px;color:#1e1e1e;letter-spacing:-0.462px;">Layer 03</span>
<span class="t" style="left:2393.5px;top:316.3px;font-size:12px;color:#1e1e1e;letter-spacing:0.079px;">Continuous</span>
<span class="t" style="left:2493.4px;top:316.3px;font-size:12px;color:#1e1e1e;letter-spacing:-0.074px;">Default</span>
<div style="left:2084px;top:351.5px;width:450px;height:0;border-top:1px dotted #d0d0d0;background:none"></div>
<span class="t" style="left:2101.3px;top:335.3px;font-size:12px;color:#1e1e1e;letter-spacing:-0.462px;">Layer 04</span>
<span class="t" style="left:2393.5px;top:335.3px;font-size:12px;color:#1e1e1e;letter-spacing:0.079px;">Continuous</span>
<span class="t" style="left:2493.4px;top:335.3px;font-size:12px;color:#1e1e1e;letter-spacing:-0.074px;">Default</span>
<div style="left:2084px;top:370.5px;width:450px;height:0;border-top:1px dotted #d0d0d0;background:none"></div>
<span class="t" style="left:2101.3px;top:354.3px;font-size:12px;color:#1e1e1e;letter-spacing:-0.462px;">Layer 05</span>
<span class="t" style="left:2393.5px;top:354.3px;font-size:12px;color:#1e1e1e;letter-spacing:0.079px;">Continuous</span>
<span class="t" style="left:2493.4px;top:354.3px;font-size:12px;color:#1e1e1e;letter-spacing:-0.074px;">Default</span>
<div style="left:2084px;top:389.5px;width:450px;height:0;border-top:1px dotted #d0d0d0;background:none"></div>
<span class="t" style="left:2101.3px;top:373.3px;font-size:12px;color:#1e1e1e;letter-spacing:-0.252px;">Assignment 2 PDF</span>
<span class="t" style="left:2393.5px;top:373.3px;font-size:12px;color:#1e1e1e;letter-spacing:0.079px;">Continuous</span>
<span class="t" style="left:2493.4px;top:373.3px;font-size:12px;color:#1e1e1e;letter-spacing:-0.074px;">Default</span>
<div style="left:2084px;top:408.5px;width:450px;height:0;border-top:1px dotted #d0d0d0;background:none"></div>
<span class="t" style="left:2101.3px;top:392.3px;font-size:12px;color:#1e1e1e;letter-spacing:-0.128px;">Existing Grading</span>
<span class="t" style="left:2393.5px;top:392.3px;font-size:12px;color:#1e1e1e;letter-spacing:0.079px;">Continuous</span>
<span class="t" style="left:2493.4px;top:392.3px;font-size:12px;color:#1e1e1e;letter-spacing:-0.074px;">Default</span>
<div style="left:2084px;top:427.5px;width:450px;height:0;border-top:1px dotted #d0d0d0;background:none"></div>
<span class="t" style="left:2101.3px;top:411.3px;font-size:12px;color:#1e1e1e;letter-spacing:-0.337px;">Proposed Grades</span>
<span class="t" style="left:2393.5px;top:411.3px;font-size:12px;color:#1e1e1e;letter-spacing:0.079px;">Continuous</span>
<span class="t" style="left:2493.4px;top:411.3px;font-size:12px;color:#1e1e1e;letter-spacing:-0.074px;">Default</span>
<div style="left:2084px;top:446.5px;width:450px;height:0;border-top:1px dotted #d0d0d0;background:none"></div>
<span class="t" style="left:2101.3px;top:430.3px;font-size:12px;color:#1e1e1e;letter-spacing:-0.325px;">Existing Grades Elev.</span>
<span class="t" style="left:2393.5px;top:430.3px;font-size:12px;color:#1e1e1e;letter-spacing:0.079px;">Continuous</span>
<span class="t" style="left:2493.4px;top:430.3px;font-size:12px;color:#1e1e1e;letter-spacing:-0.074px;">Default</span>
<div style="left:2084px;top:465.5px;width:450px;height:0;border-top:1px dotted #d0d0d0;background:none"></div>
<span class="t" style="left:2101.3px;top:449.3px;font-size:12px;color:#1e1e1e;letter-spacing:-0.222px;">Existing Grades Smooth</span>
<span class="t" style="left:2393.5px;top:449.3px;font-size:12px;color:#1e1e1e;letter-spacing:0.079px;">Continuous</span>
<span class="t" style="left:2493.4px;top:449.3px;font-size:12px;color:#1e1e1e;letter-spacing:-0.074px;">Default</span>
<div style="left:2084px;top:484.5px;width:450px;height:0;border-top:1px dotted #d0d0d0;background:none"></div>
<span class="t" style="left:2101.3px;top:468.3px;font-size:12px;color:#1e1e1e;letter-spacing:-0.801px;">Grass</span>
<span class="t" style="left:2331.5px;top:468.3px;font-size:12px;color:#1e1e1e;letter-spacing:-0.407px;">Plaster</span>
<span class="t" style="left:2393.5px;top:468.3px;font-size:12px;color:#1e1e1e;letter-spacing:0.079px;">Continuous</span>
<span class="t" style="left:2493.4px;top:468.3px;font-size:12px;color:#1e1e1e;letter-spacing:-0.074px;">Default</span>
<div style="left:2084px;top:503.5px;width:450px;height:0;border-top:1px dotted #d0d0d0;background:none"></div>
<span class="t" style="left:2101.3px;top:487.3px;font-size:12px;color:#1e1e1e;letter-spacing:-0.263px;">Substrate</span>
<span class="t" style="left:2331.5px;top:487.3px;font-size:12px;color:#1e1e1e;letter-spacing:-0.395px;">Plaster (1)</span>
<span class="t" style="left:2393.5px;top:487.3px;font-size:12px;color:#1e1e1e;letter-spacing:0.079px;">Continuous</span>
<span class="t" style="left:2493.4px;top:487.3px;font-size:12px;color:#1e1e1e;letter-spacing:-0.074px;">Default</span>
<div style="left:2084px;top:522.5px;width:450px;height:0;border-top:1px dotted #d0d0d0;background:none"></div>
<span class="t" style="left:2101.3px;top:506.30000000000007px;font-size:12px;color:#1e1e1e;letter-spacing:0.023px;">Vignette</span>
<span class="t" style="left:2393.5px;top:506.30000000000007px;font-size:12px;color:#1e1e1e;letter-spacing:0.079px;">Continuous</span>
<span class="t" style="left:2493.4px;top:506.30000000000007px;font-size:12px;color:#1e1e1e;letter-spacing:-0.074px;">Default</span>
<div style="left:2084px;top:541.5px;width:450px;height:0;border-top:1px dotted #d0d0d0;background:none"></div>
<span class="t" style="left:2101.3px;top:525.3000000000001px;font-size:12px;color:#1e1e1e;letter-spacing:-0.431px;">Terrace</span>
<span class="t" style="left:2393.5px;top:525.3000000000001px;font-size:12px;color:#1e1e1e;letter-spacing:0.079px;">Continuous</span>
<span class="t" style="left:2493.4px;top:525.3000000000001px;font-size:12px;color:#1e1e1e;letter-spacing:-0.074px;">Default</span>
<div style="left:2084px;top:560.5px;width:450px;height:0;border-top:1px dotted #d0d0d0;background:none"></div>
<span class="t" style="left:2101.3px;top:544.3000000000001px;font-size:12px;color:#1e1e1e;letter-spacing:-0.086px;">Concrete</span>
<span class="t" style="left:2393.5px;top:544.3000000000001px;font-size:12px;color:#1e1e1e;letter-spacing:0.079px;">Continuous</span>
<span class="t" style="left:2493.4px;top:544.3000000000001px;font-size:12px;color:#1e1e1e;letter-spacing:-0.074px;">Default</span>
<div style="left:2084px;top:561.5px;width:450px;height:18.5px;background:#6bb5fd;"></div>
<span class="t" style="left:2101.3px;top:563.3000000000001px;font-size:12px;color:#1e1e1e;font-weight:bold;letter-spacing:0.083px;">3D Model</span>
<span class="t" style="left:2393.5px;top:563.3000000000001px;font-size:12px;color:#1e1e1e;font-weight:bold;letter-spacing:-0.465px;">Continuous</span>
<div style="left:2493px;top:561px;width:41px;height:19px;overflow:hidden;background:none"><span class="t" style="left:0.4px;top:2.3px;font-size:12px;color:#1e1e1e;font-weight:bold;letter-spacing:-0.1px">Default</span></div>
<div style="left:2084px;top:598.5px;width:450px;height:0;border-top:1px dotted #d0d0d0;background:none"></div>
<span class="t" style="left:2101.3px;top:582.3000000000001px;font-size:12px;color:#1e1e1e;letter-spacing:-0.103px;">Proposed Contour Pts</span>
<span class="t" style="left:2393.5px;top:582.3000000000001px;font-size:12px;color:#1e1e1e;letter-spacing:0.079px;">Continuous</span>
<span class="t" style="left:2493.4px;top:582.3000000000001px;font-size:12px;color:#1e1e1e;letter-spacing:-0.074px;">Default</span>
<div style="left:2084px;top:617.5px;width:450px;height:0;border-top:1px dotted #d0d0d0;background:none"></div>
<span class="t" style="left:2101.3px;top:601.3000000000001px;font-size:12px;color:#1e1e1e;letter-spacing:-0.159px;">Existing Contours Elev.</span>
<span class="t" style="left:2393.5px;top:601.3000000000001px;font-size:12px;color:#1e1e1e;letter-spacing:0.079px;">Continuous</span>
<span class="t" style="left:2493.4px;top:601.3000000000001px;font-size:12px;color:#1e1e1e;letter-spacing:-0.074px;">Default</span>
<div style="left:2084px;top:636.5px;width:450px;height:0;border-top:1px dotted #d0d0d0;background:none"></div>
<span class="t" style="left:2101.3px;top:620.3000000000001px;font-size:12px;color:#1e1e1e;letter-spacing:-0.153px;">Proposed Contours Elev.</span>
<span class="t" style="left:2393.5px;top:620.3000000000001px;font-size:12px;color:#1e1e1e;letter-spacing:0.079px;">Continuous</span>
<span class="t" style="left:2493.4px;top:620.3000000000001px;font-size:12px;color:#1e1e1e;letter-spacing:-0.074px;">Default</span>
<div style="left:2084px;top:655.5px;width:450px;height:0;border-top:1px dotted #d0d0d0;background:none"></div>
<span class="t" style="left:2101.3px;top:639.3000000000001px;font-size:12px;color:#1e1e1e;letter-spacing:-0.086px;">Existing Contour Pts</span>
<span class="t" style="left:2393.5px;top:639.3000000000001px;font-size:12px;color:#1e1e1e;letter-spacing:0.079px;">Continuous</span>
<span class="t" style="left:2493.4px;top:639.3000000000001px;font-size:12px;color:#1e1e1e;letter-spacing:-0.074px;">Default</span>
<div style="left:2091px;top:1356px;width:320px;height:8px;background:#c4c4c4;border-radius:4px;"></div>
<div style="left:2534px;top:175px;width:4px;height:1194px;background:#e9eaee;"></div>
<div style="left:1665px;top:277px;width:169px;height:248px;background:#e9eaee;border-radius:7px;box-shadow:0 6px 22px 4px rgba(40,45,60,0.42),0 0 3px rgba(40,45,60,0.35);"></div>
<span class="t" style="left:1705.7px;top:278.9px;font-size:12px;color:#222;letter-spacing:-0.314px;">Edge Analysis</span>
<div style="left:1814px;top:304px;width:17.5px;height:219px;background:#f1f1f3;"></div>
<div style="left:1813px;top:304px;width:1px;height:219px;background:#dfe0e4;"></div>
<div style="left:1822.2px;top:321px;width:2px;height:143px;background:#6d6d70;border-radius:1px;"></div>
<span class="t" style="left:1672.3px;top:308.3px;font-size:12px;color:#333;letter-spacing:-0.504px;">Show</span>
<div style="left:1705px;top:314px;width:99px;height:1px;background:#dfe1e6;"></div>
<span class="t" style="left:1695.2px;top:327.1px;font-size:12px;color:#1b1b1b;letter-spacing:-0.152px;">All edges</span>
<span class="t" style="left:1695.2px;top:345.3px;font-size:12px;color:#1b1b1b;letter-spacing:-0.274px;">Naked edges</span>
<span class="t" style="left:1695.2px;top:362.5px;font-size:12px;color:#1b1b1b;letter-spacing:0.345px;">Non-manifold</span>
<span class="t" style="left:1695.2px;top:377.5px;font-size:12px;color:#1b1b1b;letter-spacing:-0.439px;">edges</span>
<div style="left:1680px;top:397.5px;width:126px;height:23px;background:#fff;border:1.3px solid #0a67c9;border-radius:4px;box-sizing:border-box;"></div>
<span class="t" style="left:1727px;top:401.5px;font-size:12px;color:#1b1b1b;letter-spacing:0.082px;">Zoom</span>
<span class="t" style="left:1672.3px;top:426.3px;font-size:12px;color:#333;letter-spacing:-0.187px;">Edge color</span>
<div style="left:1733px;top:432px;width:71px;height:1px;background:#dfe1e6;"></div>
<div style="left:1680px;top:446.5px;width:126px;height:23px;background:#fff;border:1px solid #cfcfd3;border-radius:4px;box-sizing:border-box;"></div>
<div style="left:1683px;top:449.3px;width:120.3px;height:17.8px;background:#ff00ff;"></div>
<div style="left:1672px;top:478.3px;width:131.5px;height:1px;background:#8e8e90;"></div>
<div style="left:1672px;top:479.3px;width:131.5px;height:1px;background:#f7f7f8;"></div>
<div style="left:1680px;top:489.6px;width:126px;height:22.8px;background:#fff;border:1px solid #d0d0d4;border-radius:4px;box-sizing:border-box;"></div>
<span class="t" style="left:1710px;top:492.9px;font-size:12px;color:#1b1b1b;letter-spacing:-0.033px;">Add Objects</span>
<div style="left:1680px;top:517px;width:126px;height:5.5px;overflow:hidden;background:none"><div style="left:0;top:0;width:126px;height:22px;background:#fff;border:1px solid #d0d0d4;border-radius:4px;box-sizing:border-box;"></div></div>
<svg class="ov" width="2559" height="1392" viewBox="0 0 2559 1392">
<defs><linearGradient id="gpaper" x1="0" y1="0" x2="1" y2="1"><stop offset="0" stop-color="#ffffff"/><stop offset="1" stop-color="#cfcfcf"/></linearGradient>
<linearGradient id="gfold" x1="0" y1="0" x2="0" y2="1"><stop offset="0" stop-color="#fff3a0"/><stop offset="1" stop-color="#fdb913"/></linearGradient>
<linearGradient id="gsave" x1="0" y1="0" x2="1" y2="1"><stop offset="0" stop-color="#e8d98a"/><stop offset="1" stop-color="#b8a552"/></linearGradient>
<radialGradient id="gsph" cx="0.38" cy="0.3" r="0.75"><stop offset="0" stop-color="#ffffff"/><stop offset="0.55" stop-color="#c9c9c9"/><stop offset="1" stop-color="#5a5a5a"/></radialGradient>
<radialGradient id="gblue" cx="0.35" cy="0.28" r="0.8"><stop offset="0" stop-color="#6f9cff"/><stop offset="0.45" stop-color="#1238c8"/><stop offset="1" stop-color="#03104f"/></radialGradient>
<radialGradient id="ggreen" cx="0.6" cy="0.35" r="0.8"><stop offset="0" stop-color="#b4f06a"/><stop offset="0.5" stop-color="#4fb02a"/><stop offset="1" stop-color="#0c2a06"/></radialGradient>
<radialGradient id="ghelp" cx="0.4" cy="0.3" r="0.8"><stop offset="0" stop-color="#7a96ea"/><stop offset="0.6" stop-color="#2b48bd"/><stop offset="1" stop-color="#172a86"/></radialGradient>
<radialGradient id="gbulb" cx="0.4" cy="0.3" r="0.8"><stop offset="0" stop-color="#e9e9e9"/><stop offset="0.7" stop-color="#8f8f8f"/><stop offset="1" stop-color="#5c5c5c"/></radialGradient>
<linearGradient id="gblu2" x1="0" y1="0" x2="1" y2="1"><stop offset="0" stop-color="#9db4ff"/><stop offset="1" stop-color="#3f5fd8"/></linearGradient>
<linearGradient id="ggray" x1="0" y1="0" x2="0" y2="1"><stop offset="0" stop-color="#f2f2f2"/><stop offset="1" stop-color="#a8a8a8"/></linearGradient>
<linearGradient id="gor" x1="0" y1="0" x2="0" y2="1"><stop offset="0" stop-color="#ffd23c"/><stop offset="1" stop-color="#f47a00"/></linearGradient>
</defs>
<circle cx="6.5" cy="61.5" r="1.3" fill="#dcdde1" stroke="#b4b5ba" stroke-width="0.6"/>
<circle cx="6.5" cy="67.5" r="1.3" fill="#dcdde1" stroke="#b4b5ba" stroke-width="0.6"/>
<circle cx="6.5" cy="73.5" r="1.3" fill="#dcdde1" stroke="#b4b5ba" stroke-width="0.6"/>
<circle cx="6.5" cy="79.5" r="1.3" fill="#dcdde1" stroke="#b4b5ba" stroke-width="0.6"/>
<rect x="2543.5" y="81.5" width="11" height="7" fill="#f4f4f6" stroke="#a8a8ac" stroke-width="1"/><rect x="2543.5" y="88.5" width="11" height="7" fill="#f4f4f6" stroke="#a8a8ac" stroke-width="1"/><path d="M2546.5 86.5 l2.5 -3 l2.5 3z M2546.5 90.5 l2.5 3 l2.5 -3z" fill="#111"/>
<path d="M80 114 q0 5 5 5 h-5z" fill="#e9eaee"/>
<circle cx="6.5" cy="117.5" r="1.3" fill="#dcdde1" stroke="#b4b5ba" stroke-width="0.6"/>
<circle cx="6.5" cy="123.5" r="1.3" fill="#dcdde1" stroke="#b4b5ba" stroke-width="0.6"/>
<circle cx="6.5" cy="129.5" r="1.3" fill="#dcdde1" stroke="#b4b5ba" stroke-width="0.6"/>
<circle cx="6.5" cy="135.5" r="1.3" fill="#dcdde1" stroke="#b4b5ba" stroke-width="0.6"/>
<line x1="12.5" y1="44" x2="12.5" y2="97" stroke="#d9dade"/><line x1="12.5" y1="101" x2="12.5" y2="151" stroke="#d9dade"/>
<circle cx="51.5" cy="159.5" r="1.3" fill="#dcdde1" stroke="#b4b5ba" stroke-width="0.6"/>
<circle cx="57.5" cy="159.5" r="1.3" fill="#dcdde1" stroke="#b4b5ba" stroke-width="0.6"/>
<circle cx="63.5" cy="159.5" r="1.3" fill="#dcdde1" stroke="#b4b5ba" stroke-width="0.6"/>
<circle cx="69.5" cy="159.5" r="1.3" fill="#dcdde1" stroke="#b4b5ba" stroke-width="0.6"/>
<path d="M38 799 q0 5 5 5 h-5z" fill="#e9eaee"/>
<rect x="5.5" y="809.5" width="13" height="13" fill="#fff" stroke="#c3c9de" stroke-width="1"/>
<path d="M8 816.5 l3 3.2 l5.5 -7.5" fill="none" stroke="#1a1a1a" stroke-width="1.7"/>
<rect x="5.5" y="825.5" width="13" height="13" fill="#fff" stroke="#c3c9de" stroke-width="1"/>
<rect x="5.5" y="841.5" width="13" height="13" fill="#fff" stroke="#c3c9de" stroke-width="1"/>
<path d="M8 848.5 l3 3.2 l5.5 -7.5" fill="none" stroke="#1a1a1a" stroke-width="1.7"/>
<rect x="5.5" y="857.5" width="13" height="13" fill="#fff" stroke="#c3c9de" stroke-width="1"/>
<rect x="5.5" y="873.5" width="13" height="13" fill="#fff" stroke="#c3c9de" stroke-width="1"/>
<rect x="5.5" y="889.5" width="13" height="13" fill="#fff" stroke="#c3c9de" stroke-width="1"/>
<rect x="5.5" y="905.5" width="13" height="13" fill="#fff" stroke="#c3c9de" stroke-width="1"/>
<path d="M8 912.5 l3 3.2 l5.5 -7.5" fill="none" stroke="#1a1a1a" stroke-width="1.7"/>
<rect x="5.5" y="921.5" width="13" height="13" fill="#fff" stroke="#c3c9de" stroke-width="1"/>
<rect x="5.5" y="937.5" width="13" height="13" fill="#fff" stroke="#c3c9de" stroke-width="1"/>
<rect x="5.5" y="953.5" width="13" height="13" fill="#fff" stroke="#c3c9de" stroke-width="1"/>
<rect x="5.5" y="969.5" width="13" height="13" fill="#fff" stroke="#c3c9de" stroke-width="1"/>
<rect x="5.5" y="985.5" width="13" height="13" fill="#fff" stroke="#c3c9de" stroke-width="1"/>
<rect x="5.5" y="1017.5" width="13" height="13" fill="#fff" stroke="#c3c9de" stroke-width="1"/>
<line x1="203.5" y1="159" x2="203.5" y2="173" stroke="#222" stroke-width="1"/><path d="M205.2 164 h6.6 l-3.3 3.6z" fill="#222"/>
<path d="M327.5 1360.5 h8 M331.5 1356.5 v8" stroke="#555" stroke-width="2.6" fill="none"/><path d="M328.6 1360.5 h5.8 M331.5 1357.6 v5.8" stroke="#e4e5e9" stroke-width="0.9" fill="none"/>
<g stroke="#4e5054" stroke-width="1.1" fill="none"><path d="M159.4 1311.9 V1283.3 M159.4 1311.9 L186.9 1309.2 M159.4 1311.9 L148.6 1304.7"/></g>
<rect x="8" y="1374.2" width="12" height="12" fill="#f4f4f4" stroke="#3c3c3c" stroke-width="2"/><rect x="8" y="1374" width="4" height="12" fill="#3c3c3c"/>
<g fill="none" stroke="#a9a9ad" stroke-width="1.2"><rect x="1083" y="1378.5" width="8" height="7" rx="1"/><path d="M1084.8 1378.5 v-2.2 a2.2 2.4 0 0 1 4.4 0 v2.2"/></g>
<rect x="2540.3" y="1374" width="12" height="12" fill="#f4f4f4" stroke="#3c3c3c" stroke-width="2"/><rect x="2548" y="1374" width="4.5" height="12" fill="#3c3c3c"/>
<path d="M2538 206 v5 h-5 q5 0 5 -5z" fill="#e9eaee"/>
<g fill="none" stroke="#222" stroke-width="1.3"><circle cx="2093.2" cy="217.5" r="3.6"/><path d="M2095.8 220.3 l3.2 3.4"/></g>
<g transform="translate(2261.9,266.4) scale(0.86)"><path d="M0 -6.3 C3 -6.3 4.7 -4.2 4.7 -2 C4.7 0.2 2.6 1.4 2.2 3.6 H-2.2 C-2.6 1.4 -4.7 0.2 -4.7 -2 C-4.7 -4.2 -3 -6.3 0 -6.3z" fill="#ffd918" stroke="#b38b00" stroke-width="0.9"/><path d="M-2 4.2 h4 v1.2 l-1 1 h-2 l-1 -1z" fill="#8a7a20"/><path d="M-2.6 -3.2 q0.6 -1.6 2 -1.8" stroke="#fff" stroke-width="0.9" fill="none" opacity="0.8"/></g>
<g transform="translate(2282.4,267.0)"><path d="M1.2 -0.8 v-2.6 a2.3 2.3 0 0 1 4.6 0 v1.2" fill="none" stroke="#3a3a3a" stroke-width="1.3"/><rect x="-4.6" y="-0.8" width="8" height="6.6" fill="#ffe45c" stroke="#6e5b00" stroke-width="0.9"/></g>
<rect x="2295.5" y="260.5" width="13" height="13" fill="#000000" stroke="#000" stroke-width="1"/>
<circle cx="2320.5" cy="266.7" r="6" fill="#fff" stroke="#444" stroke-width="1"/>
<path d="M2482.4 259.5 l7.2 7.2 l-7.2 7.2 l-7.2 -7.2z" fill="#000000" stroke="#000" stroke-width="1"/>
<g transform="translate(2261.9,285.4) scale(0.86)"><path d="M0 -6.3 C3 -6.3 4.7 -4.2 4.7 -2 C4.7 0.2 2.6 1.4 2.2 3.6 H-2.2 C-2.6 1.4 -4.7 0.2 -4.7 -2 C-4.7 -4.2 -3 -6.3 0 -6.3z" fill="#ffd918" stroke="#b38b00" stroke-width="0.9"/><path d="M-2 4.2 h4 v1.2 l-1 1 h-2 l-1 -1z" fill="#8a7a20"/><path d="M-2.6 -3.2 q0.6 -1.6 2 -1.8" stroke="#fff" stroke-width="0.9" fill="none" opacity="0.8"/></g>
<g transform="translate(2282.4,286.0)"><path d="M1.2 -0.8 v-2.6 a2.3 2.3 0 0 1 4.6 0 v1.2" fill="none" stroke="#3a3a3a" stroke-width="1.3"/><rect x="-4.6" y="-0.8" width="8" height="6.6" fill="#ffe45c" stroke="#6e5b00" stroke-width="0.9"/></g>
<rect x="2295.5" y="279.5" width="13" height="13" fill="#cc0000" stroke="#000" stroke-width="1"/>
<circle cx="2320.5" cy="285.7" r="6" fill="#fff" stroke="#444" stroke-width="1"/>
<path d="M2482.4 278.5 l7.2 7.2 l-7.2 7.2 l-7.2 -7.2z" fill="#cc0000" stroke="#000" stroke-width="1"/>
<g transform="translate(2261.9,304.4) scale(0.86)"><path d="M0 -6.3 C3 -6.3 4.7 -4.2 4.7 -2 C4.7 0.2 2.6 1.4 2.2 3.6 H-2.2 C-2.6 1.4 -4.7 0.2 -4.7 -2 C-4.7 -4.2 -3 -6.3 0 -6.3z" fill="#ffd918" stroke="#b38b00" stroke-width="0.9"/><path d="M-2 4.2 h4 v1.2 l-1 1 h-2 l-1 -1z" fill="#8a7a20"/><path d="M-2.6 -3.2 q0.6 -1.6 2 -1.8" stroke="#fff" stroke-width="0.9" fill="none" opacity="0.8"/></g>
<g transform="translate(2282.4,305.0)"><path d="M1.2 -0.8 v-2.6 a2.3 2.3 0 0 1 4.6 0 v1.2" fill="none" stroke="#3a3a3a" stroke-width="1.3"/><rect x="-4.6" y="-0.8" width="8" height="6.6" fill="#ffe45c" stroke="#6e5b00" stroke-width="0.9"/></g>
<rect x="2295.5" y="298.5" width="13" height="13" fill="#7d26cd" stroke="#000" stroke-width="1"/>
<circle cx="2320.5" cy="304.7" r="6" fill="#fff" stroke="#444" stroke-width="1"/>
<path d="M2482.4 297.5 l7.2 7.2 l-7.2 7.2 l-7.2 -7.2z" fill="#7d26cd" stroke="#000" stroke-width="1"/>
<g transform="translate(2261.9,323.4) scale(0.86)"><path d="M0 -6.3 C3 -6.3 4.7 -4.2 4.7 -2 C4.7 0.2 2.6 1.4 2.2 3.6 H-2.2 C-2.6 1.4 -4.7 0.2 -4.7 -2 C-4.7 -4.2 -3 -6.3 0 -6.3z" fill="#ffd918" stroke="#b38b00" stroke-width="0.9"/><path d="M-2 4.2 h4 v1.2 l-1 1 h-2 l-1 -1z" fill="#8a7a20"/><path d="M-2.6 -3.2 q0.6 -1.6 2 -1.8" stroke="#fff" stroke-width="0.9" fill="none" opacity="0.8"/></g>
<g transform="translate(2282.4,324.0)"><path d="M1.2 -0.8 v-2.6 a2.3 2.3 0 0 1 4.6 0 v1.2" fill="none" stroke="#3a3a3a" stroke-width="1.3"/><rect x="-4.6" y="-0.8" width="8" height="6.6" fill="#ffe45c" stroke="#6e5b00" stroke-width="0.9"/></g>
<rect x="2295.5" y="317.5" width="13" height="13" fill="#0000ff" stroke="#000" stroke-width="1"/>
<circle cx="2320.5" cy="323.7" r="6" fill="#fff" stroke="#444" stroke-width="1"/>
<path d="M2482.4 316.5 l7.2 7.2 l-7.2 7.2 l-7.2 -7.2z" fill="#0000ff" stroke="#000" stroke-width="1"/>
<g transform="translate(2261.9,342.4) scale(0.86)"><path d="M0 -6.3 C3 -6.3 4.7 -4.2 4.7 -2 C4.7 0.2 2.6 1.4 2.2 3.6 H-2.2 C-2.6 1.4 -4.7 0.2 -4.7 -2 C-4.7 -4.2 -3 -6.3 0 -6.3z" fill="#ffd918" stroke="#b38b00" stroke-width="0.9"/><path d="M-2 4.2 h4 v1.2 l-1 1 h-2 l-1 -1z" fill="#8a7a20"/><path d="M-2.6 -3.2 q0.6 -1.6 2 -1.8" stroke="#fff" stroke-width="0.9" fill="none" opacity="0.8"/></g>
<g transform="translate(2282.4,343.0)"><path d="M1.2 -0.8 v-2.6 a2.3 2.3 0 0 1 4.6 0 v1.2" fill="none" stroke="#3a3a3a" stroke-width="1.3"/><rect x="-4.6" y="-0.8" width="8" height="6.6" fill="#ffe45c" stroke="#6e5b00" stroke-width="0.9"/></g>
<rect x="2295.5" y="336.5" width="13" height="13" fill="#007800" stroke="#000" stroke-width="1"/>
<circle cx="2320.5" cy="342.7" r="6" fill="#fff" stroke="#444" stroke-width="1"/>
<path d="M2482.4 335.5 l7.2 7.2 l-7.2 7.2 l-7.2 -7.2z" fill="#007800" stroke="#000" stroke-width="1"/>
<g transform="translate(2261.9,361.4) scale(0.86)"><path d="M0 -6.3 C3 -6.3 4.7 -4.2 4.7 -2 C4.7 0.2 2.6 1.4 2.2 3.6 H-2.2 C-2.6 1.4 -4.7 0.2 -4.7 -2 C-4.7 -4.2 -3 -6.3 0 -6.3z" fill="#ffd918" stroke="#b38b00" stroke-width="0.9"/><path d="M-2 4.2 h4 v1.2 l-1 1 h-2 l-1 -1z" fill="#8a7a20"/><path d="M-2.6 -3.2 q0.6 -1.6 2 -1.8" stroke="#fff" stroke-width="0.9" fill="none" opacity="0.8"/></g>
<g transform="translate(2282.4,362.0)"><path d="M1.2 -0.8 v-2.6 a2.3 2.3 0 0 1 4.6 0 v1.2" fill="none" stroke="#3a3a3a" stroke-width="1.3"/><rect x="-4.6" y="-0.8" width="8" height="6.6" fill="#ffe45c" stroke="#6e5b00" stroke-width="0.9"/></g>
<rect x="2295.5" y="355.5" width="13" height="13" fill="#ffffff" stroke="#000" stroke-width="1"/>
<circle cx="2320.5" cy="361.7" r="6" fill="#fff" stroke="#444" stroke-width="1"/>
<path d="M2482.4 354.5 l7.2 7.2 l-7.2 7.2 l-7.2 -7.2z" fill="#ffffff" stroke="#000" stroke-width="1"/>
<g transform="translate(2261.9,380.4) scale(0.86)"><path d="M0 -6.3 C3 -6.3 4.7 -4.2 4.7 -2 C4.7 0.2 2.6 1.4 2.2 3.6 H-2.2 C-2.6 1.4 -4.7 0.2 -4.7 -2 C-4.7 -4.2 -3 -6.3 0 -6.3z" fill="#5b8fe6" stroke="#2d5cb0" stroke-width="0.9"/><path d="M-2 4.2 h4 v1.2 l-1 1 h-2 l-1 -1z" fill="#3b62a8"/><path d="M-2.6 -3.2 q0.6 -1.6 2 -1.8" stroke="#fff" stroke-width="0.9" fill="none" opacity="0.8"/></g>
<g transform="translate(2282.4,381.0)"><path d="M1.2 -0.8 v-2.6 a2.3 2.3 0 0 1 4.6 0 v1.2" fill="none" stroke="#3a3a3a" stroke-width="1.3"/><rect x="-4.6" y="-0.8" width="8" height="6.6" fill="#ffe45c" stroke="#6e5b00" stroke-width="0.9"/></g>
<rect x="2295.5" y="374.5" width="13" height="13" fill="#000000" stroke="#000" stroke-width="1"/>
<circle cx="2320.5" cy="380.7" r="6" fill="#fff" stroke="#444" stroke-width="1"/>
<path d="M2482.4 373.5 l7.2 7.2 l-7.2 7.2 l-7.2 -7.2z" fill="#000000" stroke="#000" stroke-width="1"/>
<g transform="translate(2261.9,399.4) scale(0.86)"><path d="M0 -6.3 C3 -6.3 4.7 -4.2 4.7 -2 C4.7 0.2 2.6 1.4 2.2 3.6 H-2.2 C-2.6 1.4 -4.7 0.2 -4.7 -2 C-4.7 -4.2 -3 -6.3 0 -6.3z" fill="#ffd918" stroke="#b38b00" stroke-width="0.9"/><path d="M-2 4.2 h4 v1.2 l-1 1 h-2 l-1 -1z" fill="#8a7a20"/><path d="M-2.6 -3.2 q0.6 -1.6 2 -1.8" stroke="#fff" stroke-width="0.9" fill="none" opacity="0.8"/></g>
<g transform="translate(2282.4,400.0)"><path d="M1.2 -0.8 v-2.6 a2.3 2.3 0 0 1 4.6 0 v1.2" fill="none" stroke="#3a3a3a" stroke-width="1.3"/><rect x="-4.6" y="-0.8" width="8" height="6.6" fill="#ffe45c" stroke="#6e5b00" stroke-width="0.9"/></g>
<rect x="2295.5" y="393.5" width="13" height="13" fill="#000000" stroke="#000" stroke-width="1"/>
<circle cx="2320.5" cy="399.7" r="6" fill="#fff" stroke="#444" stroke-width="1"/>
<path d="M2482.4 392.5 l7.2 7.2 l-7.2 7.2 l-7.2 -7.2z" fill="#000000" stroke="#000" stroke-width="1"/>
<g transform="translate(2261.9,418.4) scale(0.86)"><path d="M0 -6.3 C3 -6.3 4.7 -4.2 4.7 -2 C4.7 0.2 2.6 1.4 2.2 3.6 H-2.2 C-2.6 1.4 -4.7 0.2 -4.7 -2 C-4.7 -4.2 -3 -6.3 0 -6.3z" fill="#ffd918" stroke="#b38b00" stroke-width="0.9"/><path d="M-2 4.2 h4 v1.2 l-1 1 h-2 l-1 -1z" fill="#8a7a20"/><path d="M-2.6 -3.2 q0.6 -1.6 2 -1.8" stroke="#fff" stroke-width="0.9" fill="none" opacity="0.8"/></g>
<g transform="translate(2282.4,419.0)"><path d="M1.2 -0.8 v-2.6 a2.3 2.3 0 0 1 4.6 0 v1.2" fill="none" stroke="#3a3a3a" stroke-width="1.3"/><rect x="-4.6" y="-0.8" width="8" height="6.6" fill="#ffe45c" stroke="#6e5b00" stroke-width="0.9"/></g>
<rect x="2295.5" y="412.5" width="13" height="13" fill="#ff7f00" stroke="#000" stroke-width="1"/>
<circle cx="2320.5" cy="418.7" r="6" fill="#fff" stroke="#444" stroke-width="1"/>
<path d="M2482.4 411.5 l7.2 7.2 l-7.2 7.2 l-7.2 -7.2z" fill="#ff7f00" stroke="#000" stroke-width="1"/>
<g transform="translate(2261.9,437.4) scale(0.86)"><path d="M0 -6.3 C3 -6.3 4.7 -4.2 4.7 -2 C4.7 0.2 2.6 1.4 2.2 3.6 H-2.2 C-2.6 1.4 -4.7 0.2 -4.7 -2 C-4.7 -4.2 -3 -6.3 0 -6.3z" fill="#5b8fe6" stroke="#2d5cb0" stroke-width="0.9"/><path d="M-2 4.2 h4 v1.2 l-1 1 h-2 l-1 -1z" fill="#3b62a8"/><path d="M-2.6 -3.2 q0.6 -1.6 2 -1.8" stroke="#fff" stroke-width="0.9" fill="none" opacity="0.8"/></g>
<g transform="translate(2282.4,438.0)"><path d="M1.2 -0.8 v-2.6 a2.3 2.3 0 0 1 4.6 0 v1.2" fill="none" stroke="#3a3a3a" stroke-width="1.3"/><rect x="-4.6" y="-0.8" width="8" height="6.6" fill="#ffe45c" stroke="#6e5b00" stroke-width="0.9"/></g>
<rect x="2295.5" y="431.5" width="13" height="13" fill="#00ffff" stroke="#000" stroke-width="1"/>
<circle cx="2320.5" cy="437.7" r="6" fill="#fff" stroke="#444" stroke-width="1"/>
<path d="M2482.4 430.5 l7.2 7.2 l-7.2 7.2 l-7.2 -7.2z" fill="#00ffff" stroke="#000" stroke-width="1"/>
<g transform="translate(2261.9,456.4) scale(0.86)"><path d="M0 -6.3 C3 -6.3 4.7 -4.2 4.7 -2 C4.7 0.2 2.6 1.4 2.2 3.6 H-2.2 C-2.6 1.4 -4.7 0.2 -4.7 -2 C-4.7 -4.2 -3 -6.3 0 -6.3z" fill="#ffd918" stroke="#b38b00" stroke-width="0.9"/><path d="M-2 4.2 h4 v1.2 l-1 1 h-2 l-1 -1z" fill="#8a7a20"/><path d="M-2.6 -3.2 q0.6 -1.6 2 -1.8" stroke="#fff" stroke-width="0.9" fill="none" opacity="0.8"/></g>
<g transform="translate(2282.4,457.0)"><path d="M1.2 -0.8 v-2.6 a2.3 2.3 0 0 1 4.6 0 v1.2" fill="none" stroke="#3a3a3a" stroke-width="1.3"/><rect x="-4.6" y="-0.8" width="8" height="6.6" fill="#ffe45c" stroke="#6e5b00" stroke-width="0.9"/></g>
<rect x="2295.5" y="450.5" width="13" height="13" fill="#000000" stroke="#000" stroke-width="1"/>
<circle cx="2320.5" cy="456.7" r="6" fill="#fff" stroke="#444" stroke-width="1"/>
<path d="M2482.4 449.5 l7.2 7.2 l-7.2 7.2 l-7.2 -7.2z" fill="#000000" stroke="#000" stroke-width="1"/>
<g transform="translate(2261.9,475.4) scale(0.86)"><path d="M0 -6.3 C3 -6.3 4.7 -4.2 4.7 -2 C4.7 0.2 2.6 1.4 2.2 3.6 H-2.2 C-2.6 1.4 -4.7 0.2 -4.7 -2 C-4.7 -4.2 -3 -6.3 0 -6.3z" fill="#ffd918" stroke="#b38b00" stroke-width="0.9"/><path d="M-2 4.2 h4 v1.2 l-1 1 h-2 l-1 -1z" fill="#8a7a20"/><path d="M-2.6 -3.2 q0.6 -1.6 2 -1.8" stroke="#fff" stroke-width="0.9" fill="none" opacity="0.8"/></g>
<g transform="translate(2282.4,476.0)"><path d="M1.2 -0.8 v-2.6 a2.3 2.3 0 0 1 4.6 0 v1.2" fill="none" stroke="#3a3a3a" stroke-width="1.3"/><rect x="-4.6" y="-0.8" width="8" height="6.6" fill="#ffe45c" stroke="#6e5b00" stroke-width="0.9"/></g>
<rect x="2295.5" y="469.5" width="13" height="13" fill="#549f5c" stroke="#000" stroke-width="1"/>
<circle cx="2320.5" cy="475.7" r="6" fill="url(#mat11)" stroke="#222" stroke-width="1"/><defs><radialGradient id="mat11" cx="0.4" cy="0.35" r="0.7"><stop offset="0" stop-color="#5e8562" stop-opacity="1"/><stop offset="1" stop-color="#2a2a2a"/></radialGradient></defs>
<circle cx="2320.5" cy="475.7" r="5.4" fill="#5e8562" opacity="0.75"/>
<path d="M2482.4 468.5 l7.2 7.2 l-7.2 7.2 l-7.2 -7.2z" fill="#549f5c" stroke="#000" stroke-width="1"/>
<g transform="translate(2261.9,494.4) scale(0.86)"><path d="M0 -6.3 C3 -6.3 4.7 -4.2 4.7 -2 C4.7 0.2 2.6 1.4 2.2 3.6 H-2.2 C-2.6 1.4 -4.7 0.2 -4.7 -2 C-4.7 -4.2 -3 -6.3 0 -6.3z" fill="#ffd918" stroke="#b38b00" stroke-width="0.9"/><path d="M-2 4.2 h4 v1.2 l-1 1 h-2 l-1 -1z" fill="#8a7a20"/><path d="M-2.6 -3.2 q0.6 -1.6 2 -1.8" stroke="#fff" stroke-width="0.9" fill="none" opacity="0.8"/></g>
<g transform="translate(2282.4,495.0)"><path d="M1.2 -0.8 v-2.6 a2.3 2.3 0 0 1 4.6 0 v1.2" fill="none" stroke="#3a3a3a" stroke-width="1.3"/><rect x="-4.6" y="-0.8" width="8" height="6.6" fill="#ffe45c" stroke="#6e5b00" stroke-width="0.9"/></g>
<rect x="2295.5" y="488.5" width="13" height="13" fill="#8c7a5e" stroke="#000" stroke-width="1"/>
<circle cx="2320.5" cy="494.7" r="6" fill="url(#mat12)" stroke="#222" stroke-width="1"/><defs><radialGradient id="mat12" cx="0.4" cy="0.35" r="0.7"><stop offset="0" stop-color="#7d6a4f" stop-opacity="1"/><stop offset="1" stop-color="#2a2a2a"/></radialGradient></defs>
<circle cx="2320.5" cy="494.7" r="5.4" fill="#7d6a4f" opacity="0.75"/>
<path d="M2482.4 487.5 l7.2 7.2 l-7.2 7.2 l-7.2 -7.2z" fill="#8c7a5e" stroke="#000" stroke-width="1"/>
<g transform="translate(2261.9,513.4000000000001) scale(0.86)"><path d="M0 -6.3 C3 -6.3 4.7 -4.2 4.7 -2 C4.7 0.2 2.6 1.4 2.2 3.6 H-2.2 C-2.6 1.4 -4.7 0.2 -4.7 -2 C-4.7 -4.2 -3 -6.3 0 -6.3z" fill="#ffd918" stroke="#b38b00" stroke-width="0.9"/><path d="M-2 4.2 h4 v1.2 l-1 1 h-2 l-1 -1z" fill="#8a7a20"/><path d="M-2.6 -3.2 q0.6 -1.6 2 -1.8" stroke="#fff" stroke-width="0.9" fill="none" opacity="0.8"/></g>
<g transform="translate(2282.4,514.0)"><path d="M1.2 -0.8 v-2.6 a2.3 2.3 0 0 1 4.6 0 v1.2" fill="none" stroke="#3a3a3a" stroke-width="1.3"/><rect x="-4.6" y="-0.8" width="8" height="6.6" fill="#ffe45c" stroke="#6e5b00" stroke-width="0.9"/></g>
<rect x="2295.5" y="507.5" width="13" height="13" fill="#000000" stroke="#000" stroke-width="1"/>
<circle cx="2320.5" cy="513.7" r="6" fill="#fff" stroke="#444" stroke-width="1"/>
<path d="M2482.4 506.50000000000006 l7.2 7.2 l-7.2 7.2 l-7.2 -7.2z" fill="#000000" stroke="#000" stroke-width="1"/>
<g transform="translate(2261.9,532.4000000000001) scale(0.86)"><path d="M0 -6.3 C3 -6.3 4.7 -4.2 4.7 -2 C4.7 0.2 2.6 1.4 2.2 3.6 H-2.2 C-2.6 1.4 -4.7 0.2 -4.7 -2 C-4.7 -4.2 -3 -6.3 0 -6.3z" fill="#ffd918" stroke="#b38b00" stroke-width="0.9"/><path d="M-2 4.2 h4 v1.2 l-1 1 h-2 l-1 -1z" fill="#8a7a20"/><path d="M-2.6 -3.2 q0.6 -1.6 2 -1.8" stroke="#fff" stroke-width="0.9" fill="none" opacity="0.8"/></g>
<g transform="translate(2282.4,533.0)"><path d="M1.2 -0.8 v-2.6 a2.3 2.3 0 0 1 4.6 0 v1.2" fill="none" stroke="#3a3a3a" stroke-width="1.3"/><rect x="-4.6" y="-0.8" width="8" height="6.6" fill="#ffe45c" stroke="#6e5b00" stroke-width="0.9"/></g>
<rect x="2295.5" y="526.5" width="13" height="13" fill="#000000" stroke="#000" stroke-width="1"/>
<circle cx="2320.5" cy="532.7" r="6" fill="#fff" stroke="#444" stroke-width="1"/>
<path d="M2482.4 525.5 l7.2 7.2 l-7.2 7.2 l-7.2 -7.2z" fill="#000000" stroke="#000" stroke-width="1"/>
<g transform="translate(2261.9,551.4000000000001) scale(0.86)"><path d="M0 -6.3 C3 -6.3 4.7 -4.2 4.7 -2 C4.7 0.2 2.6 1.4 2.2 3.6 H-2.2 C-2.6 1.4 -4.7 0.2 -4.7 -2 C-4.7 -4.2 -3 -6.3 0 -6.3z" fill="#ffd918" stroke="#b38b00" stroke-width="0.9"/><path d="M-2 4.2 h4 v1.2 l-1 1 h-2 l-1 -1z" fill="#8a7a20"/><path d="M-2.6 -3.2 q0.6 -1.6 2 -1.8" stroke="#fff" stroke-width="0.9" fill="none" opacity="0.8"/></g>
<g transform="translate(2282.4,552.0)"><path d="M1.2 -0.8 v-2.6 a2.3 2.3 0 0 1 4.6 0 v1.2" fill="none" stroke="#3a3a3a" stroke-width="1.3"/><rect x="-4.6" y="-0.8" width="8" height="6.6" fill="#ffe45c" stroke="#6e5b00" stroke-width="0.9"/></g>
<rect x="2295.5" y="545.5" width="13" height="13" fill="#696969" stroke="#000" stroke-width="1"/>
<circle cx="2320.5" cy="551.7" r="6" fill="#fff" stroke="#444" stroke-width="1"/>
<path d="M2482.4 544.5 l7.2 7.2 l-7.2 7.2 l-7.2 -7.2z" fill="#696969" stroke="#000" stroke-width="1"/>
<rect x="2295.5" y="564.5" width="13" height="13" fill="#000000" stroke="#000" stroke-width="1"/>
<circle cx="2320.5" cy="570.7" r="6" fill="#fff" stroke="#444" stroke-width="1"/>
<path d="M2482.4 563.5 l7.2 7.2 l-7.2 7.2 l-7.2 -7.2z" fill="#000000" stroke="#000" stroke-width="1"/>
<path d="M2235.5 571.2 l4 4.2 l9.5 -9.6" fill="none" stroke="#222" stroke-width="1.4"/>
<g transform="translate(2261.9,589.4000000000001) scale(0.86)"><path d="M0 -6.3 C3 -6.3 4.7 -4.2 4.7 -2 C4.7 0.2 2.6 1.4 2.2 3.6 H-2.2 C-2.6 1.4 -4.7 0.2 -4.7 -2 C-4.7 -4.2 -3 -6.3 0 -6.3z" fill="#5b8fe6" stroke="#2d5cb0" stroke-width="0.9"/><path d="M-2 4.2 h4 v1.2 l-1 1 h-2 l-1 -1z" fill="#3b62a8"/><path d="M-2.6 -3.2 q0.6 -1.6 2 -1.8" stroke="#fff" stroke-width="0.9" fill="none" opacity="0.8"/></g>
<g transform="translate(2282.4,590.0)"><path d="M-2.9 -0.8 v-2.4 a2.4 2.5 0 0 1 4.8 0 v2.4" fill="none" stroke="#2c3e6a" stroke-width="1.3"/><rect x="-4.6" y="-0.8" width="8.2" height="6.6" rx="0.8" fill="#6a98e8" stroke="#2c4a90" stroke-width="0.9"/></g>
<rect x="2295.5" y="583.5" width="13" height="13" fill="#000000" stroke="#000" stroke-width="1"/>
<circle cx="2320.5" cy="589.7" r="6" fill="#fff" stroke="#444" stroke-width="1"/>
<path d="M2482.4 582.5 l7.2 7.2 l-7.2 7.2 l-7.2 -7.2z" fill="#000000" stroke="#000" stroke-width="1"/>
<g transform="translate(2261.9,608.4000000000001) scale(0.86)"><path d="M0 -6.3 C3 -6.3 4.7 -4.2 4.7 -2 C4.7 0.2 2.6 1.4 2.2 3.6 H-2.2 C-2.6 1.4 -4.7 0.2 -4.7 -2 C-4.7 -4.2 -3 -6.3 0 -6.3z" fill="#ffd918" stroke="#b38b00" stroke-width="0.9"/><path d="M-2 4.2 h4 v1.2 l-1 1 h-2 l-1 -1z" fill="#8a7a20"/><path d="M-2.6 -3.2 q0.6 -1.6 2 -1.8" stroke="#fff" stroke-width="0.9" fill="none" opacity="0.8"/></g>
<g transform="translate(2282.4,609.0)"><path d="M-2.9 -0.8 v-2.4 a2.4 2.5 0 0 1 4.8 0 v2.4" fill="none" stroke="#2c3e6a" stroke-width="1.3"/><rect x="-4.6" y="-0.8" width="8.2" height="6.6" rx="0.8" fill="#6a98e8" stroke="#2c4a90" stroke-width="0.9"/></g>
<rect x="2295.5" y="602.5" width="13" height="13" fill="#549f5c" stroke="#000" stroke-width="1"/>
<circle cx="2320.5" cy="608.7" r="6" fill="#fff" stroke="#444" stroke-width="1"/>
<path d="M2482.4 601.5 l7.2 7.2 l-7.2 7.2 l-7.2 -7.2z" fill="#549f5c" stroke="#000" stroke-width="1"/>
<g transform="translate(2261.9,627.4000000000001) scale(0.86)"><path d="M0 -6.3 C3 -6.3 4.7 -4.2 4.7 -2 C4.7 0.2 2.6 1.4 2.2 3.6 H-2.2 C-2.6 1.4 -4.7 0.2 -4.7 -2 C-4.7 -4.2 -3 -6.3 0 -6.3z" fill="#ffd918" stroke="#b38b00" stroke-width="0.9"/><path d="M-2 4.2 h4 v1.2 l-1 1 h-2 l-1 -1z" fill="#8a7a20"/><path d="M-2.6 -3.2 q0.6 -1.6 2 -1.8" stroke="#fff" stroke-width="0.9" fill="none" opacity="0.8"/></g>
<g transform="translate(2282.4,628.0)"><path d="M-2.9 -0.8 v-2.4 a2.4 2.5 0 0 1 4.8 0 v2.4" fill="none" stroke="#2c3e6a" stroke-width="1.3"/><rect x="-4.6" y="-0.8" width="8.2" height="6.6" rx="0.8" fill="#6a98e8" stroke="#2c4a90" stroke-width="0.9"/></g>
<rect x="2295.5" y="621.5" width="13" height="13" fill="#549f5c" stroke="#000" stroke-width="1"/>
<circle cx="2320.5" cy="627.7" r="6" fill="#fff" stroke="#444" stroke-width="1"/>
<path d="M2482.4 620.5 l7.2 7.2 l-7.2 7.2 l-7.2 -7.2z" fill="#549f5c" stroke="#000" stroke-width="1"/>
<g transform="translate(2261.9,646.4000000000001) scale(0.86)"><path d="M0 -6.3 C3 -6.3 4.7 -4.2 4.7 -2 C4.7 0.2 2.6 1.4 2.2 3.6 H-2.2 C-2.6 1.4 -4.7 0.2 -4.7 -2 C-4.7 -4.2 -3 -6.3 0 -6.3z" fill="#5b8fe6" stroke="#2d5cb0" stroke-width="0.9"/><path d="M-2 4.2 h4 v1.2 l-1 1 h-2 l-1 -1z" fill="#3b62a8"/><path d="M-2.6 -3.2 q0.6 -1.6 2 -1.8" stroke="#fff" stroke-width="0.9" fill="none" opacity="0.8"/></g>
<g transform="translate(2282.4,647.0)"><path d="M-2.9 -0.8 v-2.4 a2.4 2.5 0 0 1 4.8 0 v2.4" fill="none" stroke="#2c3e6a" stroke-width="1.3"/><rect x="-4.6" y="-0.8" width="8.2" height="6.6" rx="0.8" fill="#6a98e8" stroke="#2c4a90" stroke-width="0.9"/></g>
<rect x="2295.5" y="640.5" width="13" height="13" fill="#000000" stroke="#000" stroke-width="1"/>
<circle cx="2320.5" cy="646.7" r="6" fill="#fff" stroke="#444" stroke-width="1"/>
<path d="M2482.4 639.5 l7.2 7.2 l-7.2 7.2 l-7.2 -7.2z" fill="#000000" stroke="#000" stroke-width="1"/>
<path d="M1820.3 283.3 l7.2 7.4 M1827.5 283.3 l-7.2 7.4" stroke="#8d8e92" stroke-width="1.5" fill="none"/>
<circle cx="1685.3" cy="334.4" r="5.9" fill="#f6f6f7" stroke="#5e5e5e" stroke-width="1"/>
<circle cx="1685.3" cy="352.7" r="6.2" fill="#0a5cbf"/><circle cx="1685.3" cy="352.7" r="2.6" fill="#fff"/>
<circle cx="1685.3" cy="370.7" r="5.9" fill="#f6f6f7" stroke="#5e5e5e" stroke-width="1"/>
<g transform="translate(26.5,133)"><path d="M-7 -9.5 H2.5 L7 -5 V9.5 H-7z" fill="url(#gpaper)" stroke="#000" stroke-width="1.5" stroke-linejoin="round"/><path d="M2.5 -9.5 V-5 H7" fill="#fff" stroke="#000" stroke-width="1.1"/></g>
<g transform="translate(54.5,133)"><path d="M-9.5 8 V-3.5 Q-9.5 -5.3 -7.8 -5.3 H-3.5 L-1.8 -3.5 H5 Q6 -3.5 6 -2.3 V-0.7" fill="#ffe566" stroke="#000" stroke-width="1.4" stroke-linejoin="round"/><path d="M-9.5 8.3 L-5.3 -0.7 H10 L5.8 8.3z" fill="url(#gfold)" stroke="#000" stroke-width="1.4" stroke-linejoin="round"/></g>
<g transform="translate(83,133)"><path d="M-9.3 -9.3 H9.3 V9.3 H-7.5 L-9.3 7.5z" fill="url(#gsave)" stroke="#000" stroke-width="1.6" stroke-linejoin="round"/><rect x="-6" y="-8.6" width="12" height="8" fill="url(#ggray)" stroke="#000" stroke-width="1.2"/><rect x="-5" y="3.2" width="9.5" height="6" fill="#a9adb0" stroke="#000" stroke-width="1.2"/><rect x="-3.5" y="4.6" width="2.4" height="4" fill="#9a8a3a"/><path d="M14 8 V13.8 H8z" fill="#7a7a7a"/></g>
<g transform="translate(111,133)"><path d="M-7 -1.5 L-3.8 -8.8 H8 L4.8 -1.5z" fill="#fff" stroke="#000" stroke-width="1.4" stroke-linejoin="round"/><path d="M-9.4 0 H6 L9.6 -3.4 V4.6 L6 8.8 H-9.4z" fill="#444" stroke="#000" stroke-width="1.3" stroke-linejoin="round"/><rect x="-9.2" y="0.6" width="14.6" height="3.2" fill="#eee" stroke="#000" stroke-width="1"/><rect x="-8.6" y="5.4" width="13.6" height="3" fill="#ddd" stroke="#000" stroke-width="1"/><path d="M-1 -6.5 l3.5 -0.6 l-0.8 3 l-3 0.4z" fill="#888" opacity="0.7"/></g>
<g transform="translate(139.5,133)"><path d="M-8.6 -7.6 H4.8 V7.4 L2.4 9.8 H-8.6z" fill="url(#gpaper)" stroke="#000" stroke-width="1.5" stroke-linejoin="round"/><path d="M4.8 7.4 H2.4 V9.8" fill="#fff" stroke="#000" stroke-width="1"/><path d="M-3.2 -5.2 L1.5 -10 L5.5 -10.6 L7.8 -8.4 L2.2 -4z" fill="#8b8b8b"/><path d="M7.3 -10.4 H10 V-6.8 H7.3z" fill="#000"/><path d="M1 -9.4 L7 -9.8 L7.4 -7.4 L3 -5.4z" fill="#e8e8e8"/></g>
<g transform="translate(167.5,133)"><path d="M-5 -8.6 L2.3 4 M5 -8.6 L-2.3 4" stroke="#000" stroke-width="1.5" fill="none"/><ellipse cx="-4.5" cy="6.5" rx="1.7" ry="3" transform="rotate(28 -4.5 6.5)" fill="none" stroke="#1a2a7a" stroke-width="1.2"/><ellipse cx="4.5" cy="6.5" rx="1.7" ry="3" transform="rotate(-28 4.5 6.5)" fill="none" stroke="#1a2a7a" stroke-width="1.2"/></g>
<g transform="translate(195.5,133)"><path d="M-7.8 -9 H-1.5 L1.2 -6.3 V4.6 H-7.8z" fill="url(#gpaper)" stroke="#000" stroke-width="1.3" stroke-linejoin="round"/><path d="M-3.2 -4.6 H3.6 L6.6 -1.6 V9.2 H-3.2z" fill="url(#gpaper)" stroke="#000" stroke-width="1.3" stroke-linejoin="round"/><path d="M3.6 -4.6 V-1.6 H6.6" fill="#fff" stroke="#000" stroke-width="0.9"/></g>
<g transform="translate(223.5,133)"><rect x="-6.3" y="-7.6" width="12.6" height="16.4" rx="2" fill="#fdd667" stroke="#000" stroke-width="1.5"/><path d="M-3 -7.6 Q-3 -9.6 0 -9.6 Q3 -9.6 3 -7.6 Q3 -6.2 0 -6.2 Q-3 -6.2 -3 -7.6z" fill="#fff" stroke="#000" stroke-width="1.2"/></g>
<g transform="translate(251,133)"><path d="M-10 4.5 L-6.8 -6 L-4.6 -2.8 C0.5 -7 7 -6 9.6 -0.8 L6.8 1.4 C4.6 -2.2 0.6 -2.6 -2.6 0.2 L-0.2 3.4z" fill="#111"/><path d="M2 -5.4 C5.6 -5.4 8.2 -3.4 9.6 -0.8 L6.8 1.4 C5.8 -0.4 4.2 -1.6 2.2 -1.9z" fill="#6a6a6a"/><path d="M14 8 V13.8 H8z" fill="#7a7a7a"/></g>
<g transform="translate(279,133)"><path d="M-3.4 9.8 C-5 6.4 -8 3 -9.4 0.6 C-10 -0.6 -8.6 -1.8 -7.4 -0.8 L-4.6 2 V-6.6 C-4.6 -8.4 -2.4 -8.4 -2.4 -6.6 V-8.4 C-2.4 -10.2 0 -10.2 0 -8.4 V-7.4 C0 -9.2 2.4 -9.2 2.4 -7.4 V-5.6 C2.4 -7.2 4.6 -7.2 4.6 -5.6 V3.4 C4.6 6 3.6 7.6 3 9.8" fill="url(#gpaper)" stroke="#000" stroke-width="1.25" stroke-linejoin="round"/><path d="M-2.4 -6.6 V-1.6 M0 -7.6 V-1.6 M2.4 -5.8 V-1.6" stroke="#000" stroke-width="0.75" fill="none"/></g>
<g transform="translate(307,133)"><ellipse cx="0" cy="1.6" rx="10.4" ry="3.3" fill="none" stroke="#333" stroke-width="0.7"/><ellipse cx="0" cy="0.5" rx="3.3" ry="10.4" fill="none" stroke="#333" stroke-width="0.7"/><path d="M3.2 -5.6 L5.2 -1 H1.2z M-5.4 4.6 L-0.6 2.6 V6.6z" fill="#000"/><path d="M3.2 -2 V3 M-2 4.6 H4" stroke="#000" stroke-width="1.3"/></g>
<g transform="translate(335.5,133)"><circle cx="2.4" cy="-2.8" r="6.2" fill="url(#gpaper)" stroke="#000" stroke-width="1.2"/><path d="M-2 1.8 L-9 8.6" stroke="#000" stroke-width="2.4"/><path d="M0 -4.2 H4.8 M2.4 -6.6 V-1.8 M0 -0.2 H4.8" stroke="#000" stroke-width="1" fill="none"/></g>
<g transform="translate(363,133)"><rect x="-2.2" y="-9.6" width="11.4" height="10" fill="none" stroke="#000" stroke-width="1.2" stroke-dasharray="2.2 1.6"/><circle cx="-0.6" cy="0.4" r="5.7" fill="url(#gpaper)" stroke="#000" stroke-width="1.2"/><path d="M-4.6 4.6 L-9.6 9.4" stroke="#000" stroke-width="2.3"/><path d="M-3.4 1.6 H2.2" stroke="#444" stroke-width="0.8" stroke-dasharray="1.4 1.2"/></g>
<g transform="translate(391.5,133)"><path d="M-9.8 -9.4 H-5.6 L-9.8 -5.2z M9.8 -9.4 V-5.2 L5.6 -9.4z M-9.8 9.4 V5.2 L-5.6 9.4z M9.8 9.4 H5.6 L9.8 5.2z" fill="#000"/><circle cx="1.2" cy="-1.4" r="6.1" fill="url(#gpaper)" stroke="#000" stroke-width="1.2"/><path d="M-3 3.2 L-7.4 7.4" stroke="#000" stroke-width="2.3"/></g>
<g transform="translate(419.5,133)"><circle cx="2.2" cy="-2.4" r="7.4" fill="#eee" stroke="#333" stroke-width="0.9"/><circle cx="2.2" cy="-2.4" r="5.7" fill="url(#gpaper)" stroke="#000" stroke-width="1.2"/><circle cx="3.6" cy="-4.6" r="2.6" fill="#f2e800" stroke="#c8b800" stroke-width="0.4"/><circle cx="0.4" cy="-0.8" r="2.4" fill="#f2e800" stroke="#c8b800" stroke-width="0.4"/><path d="M-2.6 2.6 L-8.6 8.6" stroke="#000" stroke-width="2.3"/></g>
<g transform="translate(447.5,133)"><path d="M-10.4 -2 L-7.6 -9.6 L-5.6 -7 C-1 -10.6 6.6 -9.8 9.4 -4.6 L6.4 -2.6 C4 -6.4 -0.4 -6.6 -3.4 -4.4 L-1.6 -1.6z" fill="#111"/><path d="M2.4 -9 C5.6 -8.6 8 -7 9.4 -4.6 L6.4 -2.6 C5.4 -4.2 4 -5.2 2.4 -5.6z" fill="#6a6a6a"/><circle cx="1.6" cy="2.6" r="4.6" fill="url(#gpaper)" stroke="#000" stroke-width="1.2"/><path d="M-1.6 6 L-6 10" stroke="#000" stroke-width="2.1"/><path d="M14 8 V13.8 H8z" fill="#7a7a7a"/></g>
<g transform="translate(475,133)"><rect x="-10" y="-9.4" width="20" height="18.6" fill="#bdbdbd" stroke="#000" stroke-width="1.5"/><path d="M0 -9.4 V9.2 M-10 0 H10" stroke="#000" stroke-width="1.5"/><path d="M-9 -8.5 h8 M1 -8.5 h8 M-9 1 h8 M1 1 h8" stroke="#8a8a8a" stroke-width="0.9"/><path d="M1.5 -8.6 h4" stroke="#1b3fc0" stroke-width="1"/><path d="M14 8 V13.8 H8z" fill="#7a7a7a"/></g>
<g transform="translate(503,133)"><path d="M-10.8 4.8 H10.4" stroke="#888" stroke-width="0.9"/><path d="M-9.8 2.2 C-9.8 -1 -7.6 -1.2 -3.6 -1.8 L-1.8 -5.2 H4.2 L6 -2 C8.6 -1.6 9.4 -0.4 9.4 2.2z" fill="#e8181c" stroke="#a00" stroke-width="0.6"/><path d="M-1.2 -4.2 H3.4 L4.6 -2 H-2.2z" fill="#fff"/><circle cx="-6" cy="3" r="2.1" fill="#222"/><circle cx="5.2" cy="3" r="2.1" fill="#222"/><circle cx="-6" cy="3" r="0.8" fill="#ccc"/><circle cx="5.2" cy="3" r="0.8" fill="#ccc"/><path d="M14 8 V13.8 H8z" fill="#7a7a7a"/></g>
<g transform="translate(531.5,133)"><g stroke="#8a8a8a" stroke-width="0.8" fill="none"><path d="M-3.6 -7.6 L10.6 -2.8 L4.6 8 L-10.6 1.6z"/><path d="M-5.6 -4.8 L8.8 0.4 M-7.6 -2 L7 3.4 M-9 0 L5.6 5.8 M0 -6.4 L-7 3 M3.6 -5.2 L-3.4 4.6 M7.2 -4 L0.6 6.2"/></g><path d="M-2.2 1.2 L0.6 -4.4" stroke="#10a010" stroke-width="1.7"/><path d="M-2.2 1.2 L6.2 3.6" stroke="#d81010" stroke-width="1.7"/><rect x="-3.8" y="-0.4" width="3.2" height="3.2" fill="#fff" stroke="#000" stroke-width="1.2"/><path d="M14 8 V13.8 H8z" fill="#7a7a7a"/></g>
<g transform="translate(558.5,133)"><circle cx="-0.6" cy="-0.6" r="8.6" fill="none" stroke="#666" stroke-width="0.9"/><path d="M0 -0.4 H10.6" stroke="#000" stroke-width="1.1"/><rect x="-2" y="-2" width="3.2" height="3.2" fill="#fff" stroke="#000" stroke-width="1.1"/><path d="M14 8 V13.8 H8z" fill="#7a7a7a"/></g>
<g transform="translate(587,133)"><circle cx="-4.6" cy="-4.4" r="3" fill="#ffe400" stroke="#b06a00" stroke-width="0.9"/><rect x="0.6" y="-5.2" width="5.8" height="5.8" fill="#ffe400" stroke="#b06a00" stroke-width="0.9"/><path d="M-2.2 1.4 L0.8 6.6 H-5.2z" fill="#fff" stroke="#b06a00" stroke-width="0.9"/><path d="M6.6 -11 H9.6 V-8 M-9.6 5.6 V8.6 H-6.6" fill="none" stroke="#000" stroke-width="1.1"/><path d="M14 8 V13.8 H8z" fill="#7a7a7a"/></g>
<g transform="translate(615,133)"><path d="M0 -10 C4.4 -10 6.8 -7 6.8 -3.8 C6.8 -0.6 3.8 1.2 3.2 4.6 L2.4 9.2 Q0 10.6 -2.4 9.2 L-3.2 4.6 C-3.8 1.2 -6.8 -0.6 -6.8 -3.8 C-6.8 -7 -4.4 -10 0 -10z" fill="url(#gbulb)" stroke="#555" stroke-width="0.8"/><path d="M-2 7.6 Q0 8.6 2 7.6" stroke="#eee" stroke-width="1" fill="none"/><path d="M14 8 V13.8 H8z" fill="#7a7a7a"/></g>
<g transform="translate(643.5,133)"><path d="M-3.6 -1.4 V-5 A3.6 3.8 0 0 1 3.6 -5 V-1.4" fill="none" stroke="#000" stroke-width="2"/><rect x="-5.6" y="-1.4" width="11.2" height="9.6" rx="0.8" fill="url(#ggray)" stroke="#000" stroke-width="1.3"/><path d="M-3.6 1.6 H3.6 M-3.6 3.8 H3.6 M-3.6 6 H3.6" stroke="#777" stroke-width="0.9"/><path d="M14 8 V13.8 H8z" fill="#7a7a7a"/></g>
<g transform="translate(671.5,133)"><g transform="scale(1.0)"><path d="M-8.6 -7.4 L8.6 -3.2 V5.2 L1.6 10 L-8.6 1z" fill="#1a237e" stroke="#000" stroke-width="1.2" stroke-linejoin="round"/><path d="M-8.6 -1.6 L1.6 5.6 L8.6 1.4 V5.2 L1.6 10 L-8.6 1z" fill="#2a3cc0"/><path d="M-8.6 -3.6 L1.6 3.2 L8.6 -0.6 V2 L1.6 6.4 L-8.6 -1z" fill="#f2f2f2"/><path d="M-8.6 -5.6 L1.6 0.6 L8.6 -2.4 V-0.2 L1.6 3.8 L-8.6 -3z" fill="#e02010"/><path d="M-8.6 -7.4 L8.6 -3.2 L1.6 0.4 L-8.6 -5.8z" fill="#ff8a50"/><path d="M-8.6 -7.4 L8.6 -3.2 V5.2 L1.6 10 L-8.6 1z" fill="none" stroke="#000" stroke-width="1.2" stroke-linejoin="round"/></g><path d="M14 8 V13.8 H8z" fill="#7a7a7a"/></g>
<g transform="translate(699,133.5)"><foreignObject x="-9.6" y="-9.6" width="19.2" height="19.2"><div style="position:static;width:17.2px;height:17.2px;margin:1px;border-radius:50%;background:conic-gradient(#ff0000,#ffff00,#00ff00,#00ffff,#0000ff,#ff00ff,#ff0000);"></div></foreignObject><circle r="8.6" fill="none" stroke="#111" stroke-width="1.4"/><circle r="4.4719999999999995" fill="#fff"/><path d="M14 8 V13.8 H8z" fill="#7a7a7a"/></g>
<g transform="translate(727,133.5)"><circle r="8.6" fill="url(#gsph)" stroke="#111" stroke-width="1.3"/><path d="M-2.4 -8.2 Q-4 0 -1.4 8.4 M-8.4 2 Q0 4.6 8.4 1.6" fill="none" stroke="#111" stroke-width="1.2"/></g>
<g transform="translate(755,133.5)"><g stroke="#777" stroke-width="0.9"><path d="M-10.5 -11 V11 M-11 -10.5 H11"/><path d="M-7.4 -11 V11 M-11 -7.4 H11"/><path d="M-4.3 -11 V11 M-11 -4.3 H11"/><path d="M-1.1999999999999993 -11 V11 M-11 -1.1999999999999993 H11"/><path d="M1.9000000000000004 -11 V11 M-11 1.9000000000000004 H11"/><path d="M5.0 -11 V11 M-11 5.0 H11"/><path d="M8.100000000000001 -11 V11 M-11 8.100000000000001 H11"/><path d="M11.2 -11 V11 M-11 11.2 H11"/></g><circle r="8.6" fill="url(#gsph)" stroke="#111" stroke-width="1.3"/><path d="M-2.4 -8.2 Q-4 0 -1.4 8.4 M-8.4 2 Q0 4.6 8.4 1.6" fill="none" stroke="#111" stroke-width="1.2"/><path d="M14 8 V13.8 H8z" fill="#7a7a7a"/></g>
<g transform="translate(783,133)"><ellipse cx="1" cy="7.4" rx="10" ry="3" fill="#000" opacity="0.35"/><circle cx="0" cy="-0.8" r="8.8" fill="url(#gblue)"/><ellipse cx="-3" cy="-5" rx="2.6" ry="1.8" fill="#fff" opacity="0.85" transform="rotate(-30 -3 -5)"/><path d="M2 6 Q5.4 5 6.6 2" stroke="#5ac8ff" stroke-width="1.3" fill="none" opacity="0.8"/><path d="M14 8 V13.8 H8z" fill="#7a7a7a"/></g>
<g transform="translate(816,133)"><ellipse cx="-7" cy="2" rx="8" ry="6" fill="url(#gglow)"/><defs><radialGradient id="gglow"><stop offset="0" stop-color="#fff" stop-opacity="0.75"/><stop offset="1" stop-color="#fff" stop-opacity="0"/></radialGradient></defs><path d="M-6 -5.6 L6 -9.2 L3.6 3 Z" fill="url(#gor)" stroke="#7a3a00" stroke-width="0.9" stroke-linejoin="round"/><path d="M-6 -5.6 L3.6 3 L1.6 1.6 L-4.4 -4.4z" fill="#fff2c0"/><path d="M6 -9.2 L3.6 3" stroke="#111" stroke-width="1.5"/><path d="M9 8 V13.8 H3z" fill="#7a7a7a"/></g>
<g transform="translate(839,133.6)"><path d="M9.41 -1.91 L9.41 1.91 L5.73 1.77 L5.73 -1.77z M8.00 5.30 L5.30 8.00 L2.80 5.31 L5.31 2.80z M1.91 9.41 L-1.91 9.41 L-1.77 5.73 L1.77 5.73z M-5.30 8.00 L-8.00 5.30 L-5.31 2.80 L-2.80 5.31z M-9.41 1.91 L-9.41 -1.91 L-5.73 -1.77 L-5.73 1.77z M-8.00 -5.30 L-5.30 -8.00 L-2.80 -5.31 L-5.31 -2.80z M-1.91 -9.41 L1.91 -9.41 L1.77 -5.73 L-1.77 -5.73z M5.30 -8.00 L8.00 -5.30 L5.31 -2.80 L2.80 -5.31z" fill="#f7c860" stroke="#8a5a10" stroke-width="1.6" stroke-linejoin="round"/><circle r="6.8" fill="#f7c860" stroke="none"/><circle r="7" fill="none" stroke="#8a5a10" stroke-width="0"/><rect x="-2.6" y="-5" width="5.2" height="7.4" rx="1.6" fill="url(#ggray)" stroke="#666" stroke-width="0.8"/><path d="M14 8 V13.8 H8z" fill="#7a7a7a"/></g>
<g transform="translate(867,133)"><g fill="none" stroke="#000" stroke-width="1.1"><path d="M-11 -9.4 H-1.6 M-11 1.6 H-1.6 M-1 3.2 V10.4 M9 3.2 V10.4"/><path d="M-8.6 -6.6 V-1.4 M1.8 8.6 H6.4"/></g><path d="M-8.6 -7.6 l1.5 2.2 h-3z M-8.6 -0.2 l1.5 -2.2 h-3z M0.6 8.6 l2.2 -1.5 v3z M7.6 8.6 l-2.2 -1.5 v3z" fill="#000"/><rect x="-2.4" y="-11" width="3" height="3" fill="#fff" stroke="#000" stroke-width="1"/><rect x="-2.4" y="0" width="3" height="3" fill="#fff" stroke="#000" stroke-width="1"/><rect x="7.4" y="0" width="3" height="3" fill="#fff" stroke="#000" stroke-width="1"/><path d="M14 8 V13.8 H8z" fill="#7a7a7a"/></g>
<g transform="translate(895,133.4)"><circle r="10" fill="url(#ggreen)" stroke="#0a1a06" stroke-width="1.4"/><path d="M-2 -9.6 Q-3 -2 -7 2 M-1 -1 L8.4 -5.4" stroke="#1a4a10" stroke-width="0.9" fill="none"/><path d="M-7.4 1 C-4 -1.6 -1.6 0.4 -1.8 3 C-2 5.4 -5 6.4 -7 5.6z" fill="#0a0a0a"/><path d="M-3 7.8 C0 5 5 5.4 7 6.4 L4 9 C1 10 -2 9.6 -3 7.8z" fill="#7ad83a"/><path d="M-2 6.2 L5.6 5.2" stroke="#000" stroke-width="1"/><path d="M14 8 V13.8 H8z" fill="#7a7a7a"/></g>
<g transform="translate(923,133.6)"><circle r="9.8" fill="url(#ghelp)"/><text x="0" y="6.1" text-anchor="middle" font-family="Liberation Serif" font-weight="bold" font-size="18.6" fill="#fff">?</text><path d="M14 8 V13.8 H8z" fill="#7a7a7a"/></g>
<g transform="translate(16,180)"><path d="M-4.6 -8.6 V6.4 L-1.4 3.6 L1.4 9.2 L3.6 8.2 L1 2.8 H5.6z" fill="#fff" stroke="#222" stroke-width="1.1" stroke-linejoin="round"/></g>
<g transform="translate(44,180)"><circle cx="-0.4" cy="-0.6" r="2" fill="#fff" stroke="#000" stroke-width="1.1"/><path d="M14 8 V13.8 H8z" fill="#7a7a7a"/></g>
<g transform="translate(72,180)"><path d="M-7 7.2 L-2 -6.2 L7 4.2" fill="none" stroke="#000" stroke-width="1"/><rect x="-8.6" y="5.6" width="3.2" height="3.2" fill="#fff" stroke="#000" stroke-width="1.1"/><rect x="-3.6" y="-7.800000000000001" width="3.2" height="3.2" fill="#fff" stroke="#000" stroke-width="1.1"/><rect x="5.4" y="2.6" width="3.2" height="3.2" fill="#fff" stroke="#000" stroke-width="1.1"/><path d="M14 8 V13.8 H8z" fill="#7a7a7a"/></g>
<g transform="translate(100,180)"><path d="M-8 -6 C8 -11 8 11 -8 6" fill="none" stroke="#000" stroke-width="1"/><rect x="-9.6" y="-7.6" width="3.2" height="3.2" fill="#fff" stroke="#000" stroke-width="1.1"/><rect x="-9.6" y="4.4" width="3.2" height="3.2" fill="#fff" stroke="#000" stroke-width="1.1"/><rect x="4.4" y="-10.6" width="3.2" height="3.2" fill="#fff" stroke="#000" stroke-width="1.1"/><rect x="6.4" y="6.4" width="3.2" height="3.2" fill="#fff" stroke="#000" stroke-width="1.1"/><path d="M14 8 V13.8 H8z" fill="#7a7a7a"/></g>
<g transform="translate(16,208)"><circle cx="-0.6" cy="0.4" r="9" fill="none" stroke="#000" stroke-width="1.1"/><path d="M0 0 L6 -6" stroke="#000" stroke-width="0.8"/><rect x="-1.6" y="-1.6" width="3.2" height="3.2" fill="#fff" stroke="#000" stroke-width="1.1"/><rect x="4.4" y="-7.6" width="3.2" height="3.2" fill="#fff" stroke="#000" stroke-width="1.1"/><path d="M14 8 V13.8 H8z" fill="#7a7a7a"/></g>
<g transform="translate(44,208)"><ellipse cx="0" cy="1.6" rx="10" ry="6.6" fill="none" stroke="#000" stroke-width="1.1"/><path d="M0 -5 V2 H9" stroke="#000" stroke-width="0.8" fill="none"/><rect x="-1.6" y="-6.6" width="3.2" height="3.2" fill="#fff" stroke="#000" stroke-width="1.1"/><rect x="-1.6" y="0.3999999999999999" width="3.2" height="3.2" fill="#fff" stroke="#000" stroke-width="1.1"/><rect x="7.4" y="0.3999999999999999" width="3.2" height="3.2" fill="#fff" stroke="#000" stroke-width="1.1"/><path d="M14 8 V13.8 H8z" fill="#7a7a7a"/></g>
<g transform="translate(72,208)"><path d="M-7 -8 C0 -7 4 -4 7 0 L-7 8z" fill="none" stroke="#000" stroke-width="0.9"/><path d="M-7 -8 C0 -7 4 -4 7 0" fill="none" stroke="#000" stroke-width="1.2"/><rect x="-8.6" y="-9.6" width="3.2" height="3.2" fill="#fff" stroke="#000" stroke-width="1.1"/><rect x="5.4" y="-1.6" width="3.2" height="3.2" fill="#fff" stroke="#000" stroke-width="1.1"/><rect x="-8.6" y="6.4" width="3.2" height="3.2" fill="#fff" stroke="#000" stroke-width="1.1"/><path d="M14 8 V13.8 H8z" fill="#7a7a7a"/></g>
<g transform="translate(100,208)"><rect x="-8" y="-4.6" width="16" height="10" fill="none" stroke="#000" stroke-width="1.3"/><rect x="-9.6" y="3.8000000000000003" width="3.2" height="3.2" fill="#fff" stroke="#000" stroke-width="1.1"/><rect x="6.4" y="-6.199999999999999" width="3.2" height="3.2" fill="#fff" stroke="#000" stroke-width="1.1"/><path d="M14 8 V13.8 H8z" fill="#7a7a7a"/></g>
<g transform="translate(16,236)"><path d="M-8.6 0 L-4.6 -7 H3.8 L7.8 0 L3.8 7 H-4.6z" fill="none" stroke="#000" stroke-width="1.1"/><path d="M0 0 H7" stroke="#000" stroke-width="0.8"/><rect x="-1.6" y="-1.6" width="3.2" height="3.2" fill="#fff" stroke="#000" stroke-width="1.1"/><rect x="5.4" y="-1.6" width="3.2" height="3.2" fill="#fff" stroke="#000" stroke-width="1.1"/><path d="M14 8 V13.8 H8z" fill="#7a7a7a"/></g>
<g transform="translate(44,236)"><path d="M-8 -7 H8.6 V8" fill="none" stroke="#888" stroke-width="0.7"/><path d="M-8 -7 C4 -7 8 -3 8 8" fill="none" stroke="#111" stroke-width="1.9"/><rect x="-9.6" y="-8.6" width="3.2" height="3.2" fill="#fff" stroke="#000" stroke-width="1.1"/><rect x="6.4" y="6.4" width="3.2" height="3.2" fill="#fff" stroke="#000" stroke-width="1.1"/><path d="M14 8 V13.8 H8z" fill="#7a7a7a"/></g>
<g transform="translate(72,236)"><path d="M-4 -7 L8 -7 L3 9 L-8 4z" fill="url(#gblu2)" stroke="#000" stroke-width="1.1"/><path d="M2 -7 Q-1 1 -2.5 6.6 M-6 -1.4 Q0 2 5.6 0.6" stroke="#1a2a7a" stroke-width="0.9" fill="none"/><rect x="-5.6" y="-8.6" width="3.2" height="3.2" fill="#fff" stroke="#000" stroke-width="1.1"/><rect x="6.4" y="-8.6" width="3.2" height="3.2" fill="#fff" stroke="#000" stroke-width="1.1"/><rect x="1.4" y="7.4" width="3.2" height="3.2" fill="#fff" stroke="#000" stroke-width="1.1"/><rect x="-9.6" y="2.4" width="3.2" height="3.2" fill="#fff" stroke="#000" stroke-width="1.1"/><path d="M14 8 V13.8 H8z" fill="#7a7a7a"/></g>
<g transform="translate(100,236)"><path d="M-9 -5 L-2 -9 C4 -8 8 -5 9 0 V5 L2 10 V3 C1 -1 -3 -4 -9 -5z" fill="#fff" stroke="#000" stroke-width="1.1" stroke-linejoin="round"/><path d="M-5 -7.4 C3 -7 8 -4 9 0 L8.8 1.8 L2.2 5 C1.6 0.4 -2 -3.6 -7.4 -5.8z" fill="url(#gblu2)"/><path d="M-9 -5 L-2 -9 C4 -8 8 -5 9 0 V5 L2 10 V3 C1 -1 -3 -4 -9 -5z M9 0 L2 3" fill="none" stroke="#000" stroke-width="1.1" stroke-linejoin="round"/><path d="M14 8 V13.8 H8z" fill="#7a7a7a"/></g>
<g transform="translate(16,264)"><path d="M-8.6 -4.6 L-1 -8.8 L8.2 -5.6 V4.8 L0.6 9.2 L-8.6 6z" fill="#6f8af2" stroke="#000" stroke-width="1.2" stroke-linejoin="round"/><path d="M-8.6 -4.6 L0.6 -1.6 L8.2 -5.6 L-1 -8.8z" fill="#8ea5ff"/><path d="M0.6 -1.6 L8.2 -5.6 V4.8 L0.6 9.2z" fill="#3c52c0"/><path d="M-8.6 -4.6 L-1 -8.8 L8.2 -5.6 V4.8 L0.6 9.2 L-8.6 6z" fill="none" stroke="#000" stroke-width="1.2" stroke-linejoin="round"/><path d="M14 8 V13.8 H8z" fill="#7a7a7a"/></g>
<g transform="translate(44,264)"><defs><radialGradient id="gsb" cx="0.38" cy="0.3" r="0.8"><stop offset="0" stop-color="#c8d4ff"/><stop offset="0.6" stop-color="#5f7cf0"/><stop offset="1" stop-color="#2a3ea8"/></radialGradient></defs><circle cx="-4" cy="4.2" r="7" fill="url(#gsb)" stroke="#1a2466" stroke-width="0.9"/><path d="M-6 -2.4 Q-7 4 -4.6 11 M-10.8 5.6 Q-4 7.6 2.8 5" stroke="#1a2466" stroke-width="0.8" fill="none"/><circle cx="4" cy="-4" r="7" fill="url(#gsb)" stroke="#1a2466" stroke-width="0.9"/><path d="M2 -10.6 Q1 -4 3.4 2.8 M-2.8 -2.6 Q4 -0.6 10.8 -3.2" stroke="#1a2466" stroke-width="0.8" fill="none"/><path d="M14 8 V13.8 H8z" fill="#7a7a7a"/></g>
<g transform="translate(72,264)"><ellipse cx="0" cy="-8.4" rx="5.6" ry="2.4" fill="none" stroke="#222" stroke-width="1"/><path d="M-10.6 -3 Q0 1.6 10.6 -3 V6.6 Q0 11 -10.6 6.6z" fill="#5f7cf0" stroke="#000" stroke-width="1.1"/><ellipse cx="0" cy="4.6" rx="5.6" ry="2.4" fill="#aab8ff" stroke="#fff" stroke-width="1.3"/><path d="M14 8 V13.8 H8z" fill="#7a7a7a"/></g>
<g transform="translate(100,264)"><path d="M-10.4 3.6 C-5 1 -4 -5 -1 -9 C3 -7 7 -7 10.6 -5.4 C7 -2 6 5 2.6 9 C-2 6 -6 6 -10.4 3.6z" fill="url(#gblu2)" stroke="#1a2466" stroke-width="1"/><path d="M-6 4.6 C-2 0 0 -4 3 -8 M-2 6.2 C2 2 4 -2 7 -6.6 M-6 -2 C-2 0 4 0 8 -2.4 M-8 1.4 C-3 3 2 3.4 5.6 2.6" stroke="#1a2a7a" stroke-width="0.8" fill="none"/><path d="M14 8 V13.8 H8z" fill="#7a7a7a"/></g>
<g transform="translate(16,292)"><g transform="translate(-4,-5) rotate(-20) scale(1.15)"><path d="M-4 -4 H-1.6 C-2.6 -6.4 1.6 -6.4 0.6 -4 H4 V-1.4 C6.4 -2.4 6.4 1.8 4 0.8 V4 H0.8 C1.8 1.6 -2.4 1.6 -1.4 4 H-4 V0.8 C-6.4 1.8 -6.4 -2.4 -4 -1.4z" fill="#ffb300" stroke="#b36b00" stroke-width="0.9"/></g><g transform="translate(3.6,2.6) rotate(-20) scale(1.15)"><path d="M-4 -4 H-1.6 C-2.6 -6.4 1.6 -6.4 0.6 -4 H4 V-1.4 C6.4 -2.4 6.4 1.8 4 0.8 V4 H0.8 C1.8 1.6 -2.4 1.6 -1.4 4 H-4 V0.8 C-6.4 1.8 -6.4 -2.4 -4 -1.4z" fill="#ffffff" stroke="#222" stroke-width="0.9"/></g><path d="M14 8 V13.8 H8z" fill="#7a7a7a"/></g>
<g transform="translate(44,292)"><path d="M-10.6 11 V-2 L-7 -9.6 L-6.4 2 L6.4 -10 L1.4 3.4 L11 4.6 L1.8 8 L3.6 10 L-2 11z" fill="url(#gexp)" stroke="#000" stroke-width="0"/><defs><radialGradient id="gexp" cx="0.1" cy="0.9" r="1"><stop offset="0" stop-color="#ffb400"/><stop offset="0.6" stop-color="#ff7a00"/><stop offset="1" stop-color="#e03a00"/></radialGradient></defs><path d="M-7 -9.6 L-6.4 2 L6.4 -10 L1.4 3.4 L11 4.6 L1.8 8 L3.6 10" fill="none" stroke="#000" stroke-width="1.2"/></g>
<g transform="translate(72,292)"><path d="M-1 -10 H6 L1 3z" fill="#1a2d80"/><rect x="-10.6" y="-1.6" width="10.6" height="4.6" fill="#fff" stroke="#000" stroke-width="1.1"/><path d="M1 3.4 L4 0.2 L9.6 5.6 L6 9z" fill="#fff" stroke="#333" stroke-width="1"/></g>
<g transform="translate(100,292)"><rect x="-9.6" y="-0.6" width="18.6" height="5" fill="#fff" stroke="#000" stroke-width="1.2"/><path d="M0.4 -8 H7 L1.6 4.4 H0.4z" fill="#1a2d80"/></g>
<g transform="translate(16,320)"><circle cx="-3.6" cy="3.6" r="4.6" fill="#fff" stroke="#000" stroke-width="2"/><circle cx="4" cy="3.6" r="4.6" fill="#1a2d80" stroke="#000" stroke-width="2"/><circle cx="0" cy="-3" r="4.6" fill="#6f8af2" stroke="#000" stroke-width="2"/><path d="M14 8 V13.8 H8z" fill="#7a7a7a"/></g>
<g transform="translate(44,320)"><circle cx="-5" cy="5" r="3.8" fill="#fff" stroke="#000" stroke-width="1"/><circle cx="5" cy="5" r="3.8" fill="#1a2d80" stroke="#0a1440" stroke-width="0.8"/><circle cx="0" cy="-3.4" r="3.8" fill="#6f8af2" stroke="#3a4aa0" stroke-width="0.8"/></g>
<g transform="translate(72,320)"><path d="M-10 -4 C0 -8 6 0 5.4 11" fill="none" stroke="#111" stroke-width="1.7"/><rect x="-6.6" y="-6.0" width="3.2" height="3.2" fill="#fff" stroke="#000" stroke-width="1.1"/><rect x="3.6" y="3.9999999999999996" width="3.2" height="3.2" fill="#fff" stroke="#000" stroke-width="1.1"/></g>
<g transform="translate(100,320)"><path d="M-10 -4 C0 -7 7 0 6.4 11" fill="none" stroke="#111" stroke-width="2"/><path d="M-10.6 -8.6 H-3 L9 3.6 V11" fill="none" stroke="#000" stroke-width="1" stroke-dasharray="1.2 1.4"/><rect x="-4.2" y="-10.2" width="3.2" height="3.2" fill="#fff" stroke="#000" stroke-width="1.1"/><rect x="7.6" y="1.6" width="3.2" height="3.2" fill="#fff" stroke="#000" stroke-width="1.1"/><path d="M14 8 V13.8 H8z" fill="#7a7a7a"/></g>
<g transform="translate(16,348)"><path d="M-8 -8 L7 -4.6 V-0.4 L4.6 -1 Q3.4 -3 1.4 -3.4 V6.4 L3.6 7.4 V9 L-5 9 V7.4 L-2.8 6.6 V-4.4 Q-5 -4.6 -6.2 -3 L-8 -3.6z" fill="#6f8af2" stroke="#0a1a66" stroke-width="1.1" stroke-linejoin="round"/><path d="M-8 -8 L-6.6 -9.4 L8.4 -6 V-1.8 L7 -0.4 V-4.6z" fill="#9fb2ff" stroke="#0a1a66" stroke-width="0.9" stroke-linejoin="round"/></g>
<g transform="translate(44,348)"><rect x="3.6" y="-10.6" width="6" height="6" fill="url(#gblu2)" stroke="#000" stroke-width="1.1"/><rect x="-8.6" y="2" width="6" height="6" fill="url(#ggray)" stroke="#000" stroke-width="1.1"/><path d="M-3 2.4 L2.4 -3" stroke="#000" stroke-width="1"/><path d="M3.4 -4 L2.8 -0.6 L0 -3.4z" fill="#000"/><path d="M14 8 V13.8 H8z" fill="#7a7a7a"/></g>
<g transform="translate(72,348)"><rect x="-8.6" y="-10.6" width="6" height="6" fill="url(#gblu2)" stroke="#000" stroke-width="1.1"/><rect x="3.8" y="-7.6" width="6" height="6" fill="url(#gblu2)" stroke="#000" stroke-width="1.1"/><rect x="-0.2" y="-4.4" width="6" height="6" fill="url(#gblu2)" stroke="#000" stroke-width="1.1"/><rect x="-8.6" y="1.6" width="6" height="6" fill="url(#ggray)" stroke="#000" stroke-width="1.1"/><rect x="3.6" y="3.6" width="6" height="6" fill="url(#gblu2)" stroke="#000" stroke-width="1.1"/></g>
<g transform="translate(100,348)"><rect x="-10.4" y="-10.6" width="5" height="14" fill="url(#ggray)" stroke="#000" stroke-width="1.1"/><path d="M-5 -9 Q1 -9 3.4 -5" fill="none" stroke="#000" stroke-width="0.9"/><path d="M4 -4 L0.6 -4.8 L3.4 -7.4z" fill="#000"/><path d="M-2.6 4.6 L7.4 -5.4 L11 -2.4 L0.6 8z" fill="#6f8af2" stroke="#000" stroke-width="1.1"/></g>
<g transform="translate(16,376)"><path d="M-8.6 -3.6 L-0.6 -8.6 L8.6 -5 V5.4 L1 9.8 L-8.6 6z" fill="#6f8af2" stroke="#000" stroke-width="1.2" stroke-linejoin="round"/><path d="M-8.6 -3.6 L1 0 L8.6 -5 L-0.6 -8.6z" fill="#b4c2ff"/><path d="M1 0 L8.6 -5 V5.4 L1 9.8z" fill="#3c52c0"/><path d="M-3 3.4 L1 4.8 L4.6 2.8 V7.6 L1 9.8 L-3 8.4z" fill="#f4f4f4" stroke="#000" stroke-width="0.8"/><path d="M-8.6 -3.6 L-0.6 -8.6 L8.6 -5 V5.4 L1 9.8 L-8.6 6z" fill="none" stroke="#000" stroke-width="1.2" stroke-linejoin="round"/><path d="M14 8 V13.8 H8z" fill="#7a7a7a"/></g>
<g transform="translate(44,376)"><path d="M-10 6.6 L-5.6 2 H10.4 L6 6.6z" fill="#6f8af2" stroke="#000" stroke-width="1.1"/><path d="M-5.6 2 H10.4" stroke="#000" stroke-width="1.1" stroke-dasharray="2.6 1.6"/><g stroke="#fff" stroke-width="1.7" fill="#fff"><path d="M-5.6 4 V-6 M0.2 4 V-6 M6 4 V-6"/><path d="M-5.6 -9.6 l2 3.6 h-4z M0.2 -9.6 l2 3.6 h-4z M6 -9.6 l2 3.6 h-4z" stroke="none"/></g><path d="M14 8 V13.8 H8z" fill="#7a7a7a"/></g>
<g transform="translate(72,376)"><rect x="-8.8" y="-9.4" width="4.2" height="4.2" fill="#6f8af2" stroke="#000" stroke-width="1.1"/><rect x="-1.8000000000000007" y="-9.4" width="4.2" height="4.2" fill="#6f8af2" stroke="#000" stroke-width="1.1"/><rect x="5.199999999999999" y="-9.4" width="4.2" height="4.2" fill="#6f8af2" stroke="#000" stroke-width="1.1"/><rect x="-8.8" y="-2.4000000000000004" width="4.2" height="4.2" fill="#6f8af2" stroke="#000" stroke-width="1.1"/><rect x="-1.8000000000000007" y="-2.4000000000000004" width="4.2" height="4.2" fill="#6f8af2" stroke="#000" stroke-width="1.1"/><rect x="5.199999999999999" y="-2.4000000000000004" width="4.2" height="4.2" fill="#6f8af2" stroke="#000" stroke-width="1.1"/><rect x="-8.8" y="4.6" width="4.2" height="4.2" fill="#fff" stroke="#000" stroke-width="1.1"/><rect x="-1.8000000000000007" y="4.6" width="4.2" height="4.2" fill="#6f8af2" stroke="#000" stroke-width="1.1"/><rect x="5.199999999999999" y="4.6" width="4.2" height="4.2" fill="#6f8af2" stroke="#000" stroke-width="1.1"/><path d="M14 8 V13.8 H8z" fill="#7a7a7a"/></g>
<g transform="translate(100,376)"><rect x="-4.6" y="-10" width="9.2" height="5" fill="#f0f0f0" stroke="#000" stroke-width="1.2"/><rect x="-2.4" y="-3" width="4.8" height="4" fill="#f0f0f0" stroke="#000" stroke-width="1.2"/><rect x="-3.4" y="3.4" width="6.8" height="6" fill="#f0f0f0" stroke="#000" stroke-width="1.2"/><path d="M0 -11 V11" stroke="#d01818" stroke-width="1.6"/><path d="M14 8 V13.8 H8z" fill="#7a7a7a"/></g>
<g transform="translate(16,404)"><path d="M-9 -5.6 L-5.6 -7.6 L-2.4 -5.6 V7 L-5.6 9.6 L-9 7z" fill="#f2f2f2" stroke="#000" stroke-width="1.1" stroke-linejoin="round"/><path d="M-1.6 -9.6 L2 -8 L-2 -4z" fill="#ddd" stroke="#000" stroke-width="0.8"/><path d="M2.6 -7.6 L8.6 -5 L2 9.4 L-3.6 7z" fill="url(#gblu2)" stroke="#000" stroke-width="1.1" stroke-linejoin="round"/><path d="M5.6 -6.2 L8.6 -5 L2 9.4 L0 8.4z" fill="#3c52c0"/><path d="M14 8 V13.8 H8z" fill="#7a7a7a"/></g>
<g transform="translate(44,404)"><rect x="-4.6" y="-10.4" width="3.2" height="20.6" fill="#8ea5ff" stroke="#000" stroke-width="1.1"/><circle cx="-10" cy="-5" r="1.9" fill="#111"/><circle cx="4" cy="-5" r="1.9" fill="#111"/><path d="M-10.6 -1.6 H-3 M-10 -1.6 L-8.6 3.6 L-4 4.6 L-5.6 9.4 M-1 -1.6 H5 L8.6 2.4 L6.6 5.4 L12 10.6" fill="none" stroke="#111" stroke-width="1.5" stroke-linejoin="round"/><path d="M12.6 11.4 L8.4 10.2 L11.6 7.4z" fill="#111"/><path d="M14 8 V13.8 H8z" fill="#7a7a7a"/></g>
<g transform="translate(72,404)"><path d="M-9.4 0.6 L-7 -1.4 L-4.6 3 C-1 -3 4 -7 9.4 -9.6 C4 -5 -1 2 -5 9.2z" fill="#000" stroke="#000" stroke-width="0.8" stroke-linejoin="round"/><path d="M14 8 V13.8 H8z" fill="#7a7a7a"/></g>
<g transform="translate(100,404)"><path d="M-10 -3.6 L-4.6 -7.6 L2 -5 V3 L-3 6 L-10 3.6z" fill="#d4d4d4" stroke="#000" stroke-width="1.1" stroke-linejoin="round"/><path d="M-10 -3.6 L-3 -1 L2 -5 L-4.6 -7.6z" fill="#f4f4f4"/><path d="M-3 -1 L2 -5 V3 L-3 6z" fill="#9a9a9a"/><path d="M3.6 -6 L9.6 4 C8 7.6 1.6 7.6 0 4.6z" fill="url(#ggray)" stroke="#000" stroke-width="1"/><path d="M14 8 V13.8 H8z" fill="#7a7a7a"/></g>
<g transform="translate(16,432)"><path d="M-8.4 4.6 L0 -3.4 L8 4 L2 10.4z" fill="#ffd966" stroke="#000" stroke-width="1.1" stroke-linejoin="round"/><path d="M0 -3.4 L8 4 L2 10.4z" fill="#c9a030"/><path d="M-2.6 -6 L1.6 -10.4 H8.4 V-5.6 H5 L1.4 -3.4z" fill="#fff" stroke="#000" stroke-width="0.9"/><path d="M8.2 -10.8 H10.2 V-5 H8.2z" fill="#000"/><path d="M-2.2 -5.2 L2 -9 M-0.8 -4.4 L3.4 -8.2 M0.6 -3.8 L4.8 -7.4" stroke="#777" stroke-width="0.7"/><path d="M14 8 V13.8 H8z" fill="#7a7a7a"/></g>
<g transform="translate(2548,109.5)"><path d="M5.90 0.00 L3.00 0.00 M4.17 4.17 L2.12 2.12 M-0.00 5.90 L-0.00 3.00 M-4.17 4.17 L-2.12 2.12 M-5.90 -0.00 L-3.00 -0.00 M-4.17 -4.17 L-2.12 -2.12 M0.00 -5.90 L0.00 -3.00 M4.17 -4.17 L2.12 -2.12" stroke="#bfc0c4" stroke-width="2.4" fill="none"/><circle r="4" fill="#bfc0c4"/><circle r="1.7" fill="#e9eaee"/></g>
<rect x="2540" y="101" width="16" height="17" fill="#d8d9de"/>
<g transform="translate(2548,109.5)"><path d="M5.90 0.00 L3.00 0.00 M4.17 4.17 L2.12 2.12 M-0.00 5.90 L-0.00 3.00 M-4.17 4.17 L-2.12 2.12 M-5.90 -0.00 L-3.00 -0.00 M-4.17 -4.17 L-2.12 -2.12 M0.00 -5.90 L0.00 -3.00 M4.17 -4.17 L2.12 -2.12" stroke="#bfc0c4" stroke-width="2.4" fill="none"/><circle r="4" fill="#bfc0c4"/><circle r="1.7" fill="#e9eaee"/></g>
<g transform="translate(2548,164)"><path d="M5.90 0.00 L3.00 0.00 M4.17 4.17 L2.12 2.12 M-0.00 5.90 L-0.00 3.00 M-4.17 4.17 L-2.12 2.12 M-5.90 -0.00 L-3.00 -0.00 M-4.17 -4.17 L-2.12 -2.12 M0.00 -5.90 L0.00 -3.00 M4.17 -4.17 L2.12 -2.12" stroke="#bfc0c4" stroke-width="2.4" fill="none"/><circle r="4" fill="#bfc0c4"/><circle r="1.7" fill="#e9eaee"/></g>
<g transform="translate(108.8,773)"><path d="M5.90 0.00 L3.00 0.00 M4.17 4.17 L2.12 2.12 M-0.00 5.90 L-0.00 3.00 M-4.17 4.17 L-2.12 2.12 M-5.90 -0.00 L-3.00 -0.00 M-4.17 -4.17 L-2.12 -2.12 M0.00 -5.90 L0.00 -3.00 M4.17 -4.17 L2.12 -2.12" stroke="#bfc0c4" stroke-width="2.4" fill="none"/><circle r="4" fill="#bfc0c4"/><circle r="1.7" fill="#e9eaee"/></g>
<g transform="translate(19.4,794.2)"><circle cx="-0.4" cy="0" r="6.8" fill="none" stroke="#555" stroke-width="0.9"/><path d="M0 0 H8" stroke="#000" stroke-width="1"/><rect x="-1.8" y="-1.5" width="3" height="3" fill="#fff" stroke="#000" stroke-width="1"/></g>
<g transform="translate(55.6,794.2)"><path d="M-4.4 -4.4 H4.4 L1 0.2 V5.4 H-1 V0.2z" fill="#ddd" stroke="#222" stroke-width="1.1" stroke-linejoin="round"/><path d="M4.6 -6.8 H6.8 M-6.8 4.6 V6.8 H-4.6" stroke="#222" stroke-width="1" fill="none"/></g>
<g transform="translate(2094,191.0)"><g transform="scale(0.72)"><path d="M-8.6 -7.4 L8.6 -3.2 V4.2 L1.6 9 L-8.6 0z" fill="#f6f6f6" stroke="#222" stroke-width="1.3" stroke-linejoin="round"/><path d="M-8.6 -7.4 L8.6 -3.2 L1.6 0.8 L-8.6 -5.2z" fill="#ff7a45"/><path d="M-8.6 -5.2 L1.6 0.8 L8.6 -3.2 V-1.6 L1.6 2.6 L-8.6 -3.4z" fill="#ffb39a"/><path d="M-8.6 -1.8 L1.6 7 L8.6 2.6 V4.2 L1.6 9 L-8.6 0z" fill="#3a55d0"/></g></g>
<g transform="translate(2094.5,191.8)"><path d="M4.8 1.4 V7.4 M1.8 4.4 H7.8" stroke="#fff" stroke-width="3.4"/><path d="M4.8 1.8 V7 M2.2 4.4 H7.4" stroke="#000" stroke-width="1.8"/></g>
<g transform="translate(2113.4,188.4)"><g transform="scale(0.46)"><path d="M-8.6 -7.4 L8.6 -3.2 V4.2 L1.6 9 L-8.6 0z" fill="#f6f6f6" stroke="#222" stroke-width="1.3" stroke-linejoin="round"/><path d="M-8.6 -7.4 L8.6 -3.2 L1.6 0.8 L-8.6 -5.2z" fill="#ff7a45"/><path d="M-8.6 -5.2 L1.6 0.8 L8.6 -3.2 V-1.6 L1.6 2.6 L-8.6 -3.4z" fill="#ffb39a"/><path d="M-8.6 -1.8 L1.6 7 L8.6 2.6 V4.2 L1.6 9 L-8.6 0z" fill="#3a55d0"/></g></g>
<g transform="translate(2121,194.20000000000002)"><g transform="scale(0.46)"><path d="M-8.6 -7.4 L8.6 -3.2 V4.2 L1.6 9 L-8.6 0z" fill="#f6f6f6" stroke="#222" stroke-width="1.3" stroke-linejoin="round"/><path d="M-8.6 -7.4 L8.6 -3.2 L1.6 0.8 L-8.6 -5.2z" fill="#ff7a45"/><path d="M-8.6 -5.2 L1.6 0.8 L8.6 -3.2 V-1.6 L1.6 2.6 L-8.6 -3.4z" fill="#ffb39a"/><path d="M-8.6 -1.8 L1.6 7 L8.6 2.6 V4.2 L1.6 9 L-8.6 0z" fill="#3a55d0"/></g></g>
<g transform="translate(2116.8,191.8)"><path d="M-5.6 0.6 V6 H-2" fill="none" stroke="#000" stroke-width="1.2"/><path d="M-1 6 l-2.4 -1.8 v3.6z" fill="#000"/></g>
<g transform="translate(2138.8,191.8)"><path d="M-5.8 -5.8 L5.8 5.8 M5.8 -5.8 L-5.8 5.8" stroke="#c80f0f" stroke-width="2.7"/></g>
<g transform="translate(2161,191.8)"><path d="M-2 -6 H3 L6 -3 V5 H-2z" fill="#e4e4e6" stroke="#b4b4b8" stroke-width="1"/><path d="M-6 -3 H-1.6 L1.6 0 V7 H-6z" fill="#e4e4e6" stroke="#b4b4b8" stroke-width="1"/><circle cx="-2" cy="1" r="4.6" fill="none" stroke="#b4b4b8" stroke-width="1"/></g>
<g transform="translate(2182.8,191.8)"><path d="M-6.6 3.4 L0 -4.6 L6.6 3.4z" fill="#7f9cf5" stroke="#0a1a70" stroke-width="1.2" stroke-linejoin="round"/></g>
<g transform="translate(2205,191.8)"><path d="M-6.6 -3.4 L0 4.6 L6.6 -3.4z" fill="#7f9cf5" stroke="#0a1a70" stroke-width="1.2" stroke-linejoin="round"/></g>
<g transform="translate(2226.8,191.8)"><path d="M3.4 -6.4 L-4.4 0 L3.4 6.4z" fill="#dcdce0" stroke="#b4b4b8" stroke-width="1.1" stroke-linejoin="round"/></g>
<g transform="translate(2248.7,191.8)"><path d="M-5.8 -6.6 H5.8 L1.2 -1 V6.6 H-1.2 V-1z" fill="#5a7ae8" stroke="#0a1a70" stroke-width="1.2" stroke-linejoin="round"/><path d="M-5.8 -6.6 H5.8" stroke="#0a1a70" stroke-width="2"/></g>
<g transform="translate(2271,191.8)"><rect x="-5.4" y="-6.6" width="10.8" height="13.4" fill="#f4f4f4" stroke="#555" stroke-width="1.1"/><path d="M-5.4 -5.4 H5.4" stroke="#333" stroke-width="2.2"/><path d="M-1.8 -4 V6.8 M1.8 -4 V6.8 M-5.4 -1 H5.4 M-5.4 2.8 H5.4" stroke="#777" stroke-width="0.9"/></g>
<g transform="translate(2293,191.8)"><path d="M-6 -4.6 H6 M-6 0 H6 M-6 4.6 H6" stroke="#000" stroke-width="2.2"/></g>
<g transform="translate(2314.6,191.8)"><circle r="7.2" fill="url(#ghelp)"/><text x="0" y="4.5" text-anchor="middle" font-family="Liberation Serif" font-weight="bold" font-size="13.7" fill="#fff">?</text></g>
<g transform="translate(2548,193)"><g transform="scale(0.78)"><path d="M-8.6 -7.4 L8.6 -3.2 V4.2 L1.6 9 L-8.6 0z" fill="#f6f6f6" stroke="#222" stroke-width="1.3" stroke-linejoin="round"/><path d="M-8.6 -7.4 L8.6 -3.2 L1.6 0.8 L-8.6 -5.2z" fill="#ff7a45"/><path d="M-8.6 -5.2 L1.6 0.8 L8.6 -3.2 V-1.6 L1.6 2.6 L-8.6 -3.4z" fill="#ffb39a"/><path d="M-8.6 -1.8 L1.6 7 L8.6 2.6 V4.2 L1.6 9 L-8.6 0z" fill="#3a55d0"/></g></g>
<g transform="translate(2548,229)"><foreignObject x="-7.3" y="-7.3" width="14.6" height="14.6"><div style="position:static;width:12.6px;height:12.6px;margin:1px;border-radius:50%;background:conic-gradient(#ff0000,#ffff00,#00ff00,#00ffff,#0000ff,#ff00ff,#ff0000);"></div></foreignObject><circle r="6.3" fill="none" stroke="#111" stroke-width="1.4"/><circle r="3.276" fill="#fff"/></g>
<g transform="translate(2548,264.8)"><rect x="-7" y="-6.4" width="14" height="10.6" rx="1" fill="url(#ggray)" stroke="#111" stroke-width="1.3"/><path d="M-2.6 5.6 H2.6 M-4 6.6 H4" stroke="#111" stroke-width="1.4"/></g>
<g transform="translate(2548,301)"><rect x="-7.4" y="-7.4" width="14.8" height="14.8" rx="1.4" fill="#3a50c0" stroke="#7a7e8a" stroke-width="1.2"/><rect x="-7.4" y="-7.4" width="14.8" height="3" fill="#1a2670"/><text x="0" y="5.4" text-anchor="middle" font-family="Liberation Serif" font-weight="bold" font-size="11" fill="#fff">?</text><circle r="5.2" cy="0.6" fill="none" stroke="#8fa2f0" stroke-width="0.8"/></g>
<path d="M2438.5 10.5 H2449.5" stroke="#555" stroke-width="1"/>
<g fill="none" stroke="#555" stroke-width="1"><rect x="2484.5" y="7.5" width="7" height="7" rx="1.2"/><path d="M2486.5 7.5 V6.8 Q2486.5 5.5 2487.8 5.5 H2492.2 Q2493.5 5.5 2493.5 6.8 V11.2 Q2493.5 12.5 2492.2 12.5 H2491.5"/></g>
<path d="M2530 5.5 L2540 15.5 M2540 5.5 L2530 15.5" stroke="#555" stroke-width="1.1"/>
<g transform="translate(2,3)"><rect width="16.5" height="16.5" fill="#000"/><path d="M1 9 L4 4.6 L5.6 1.6 L7 3.6 L11 6 L14.6 9.6 L13 12.6 L9.6 14.6 L6.6 12 L3 12.6z" fill="#f4f4f4"/><path d="M4.4 8 L6 9.4 M8 11 L10.6 9" stroke="#000" stroke-width="0.9"/><text x="12.4" y="6.4" font-family="Liberation Sans" font-size="6.5" font-weight="bold" fill="#fff" text-anchor="middle">8</text></g>
</svg>
</div></body></html>
